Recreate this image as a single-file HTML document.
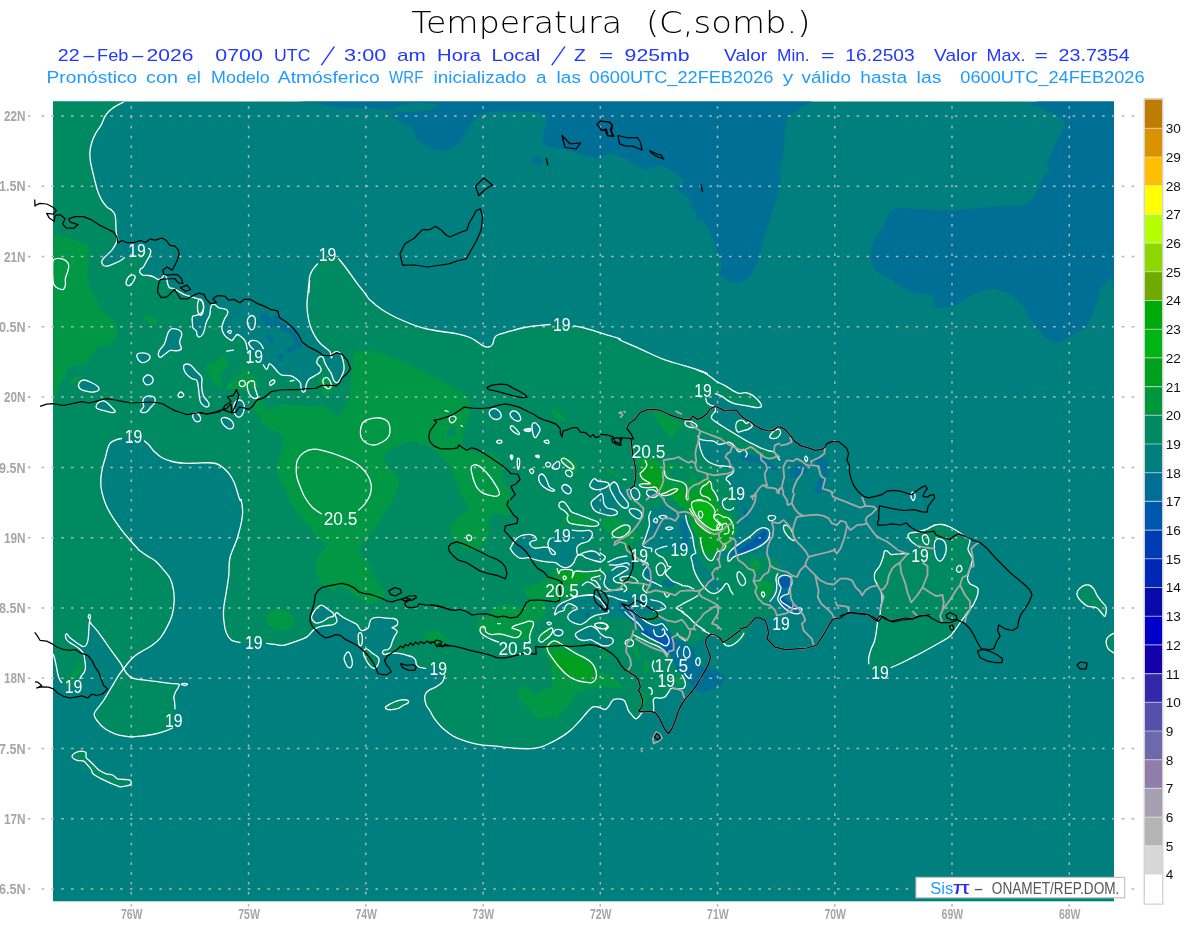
<!DOCTYPE html>
<html lang="es"><head><meta charset="utf-8"><title>Temperatura (C,somb.)</title>
<style>html,body{margin:0;padding:0;background:#fff;overflow:hidden}svg{display:block;will-change:transform}text{font-family:"Liberation Sans","DejaVu Sans",sans-serif}.ttl{font-family:"DejaVu Sans","Liberation Sans",sans-serif;font-weight:200}.ax{fill:#a6a6a6;font-size:14.2px;font-weight:bold}.cb{fill:#111;font-size:13.6px}.cl{fill:#fff;font-size:17.8px}</style></head><body>
<svg width="1200" height="927" viewBox="0 0 1200 927">
<rect width="1200" height="927" fill="#fff"/>
<text font-size="30.5" fill="#000" class="ttl"><tspan x="411.30" y="33.2" textLength="210.80" lengthAdjust="spacingAndGlyphs">Temperatura</tspan> <tspan x="645.90" y="33.2" textLength="164.50" lengthAdjust="spacingAndGlyphs">(C,somb.)</tspan></text>
<text font-size="17.0" fill="#2138ff"><tspan x="57.85" y="60.6" textLength="21.80" lengthAdjust="spacingAndGlyphs">22</tspan><tspan x="81.60" y="60.6" textLength="14.80" lengthAdjust="spacingAndGlyphs">-</tspan><tspan x="97.10" y="60.6" textLength="31.30" lengthAdjust="spacingAndGlyphs">Feb</tspan><tspan x="130.35" y="60.6" textLength="15.05" lengthAdjust="spacingAndGlyphs">-</tspan><tspan x="146.60" y="60.6" textLength="46.80" lengthAdjust="spacingAndGlyphs">2026</tspan> <tspan x="215.35" y="60.6" textLength="47.55" lengthAdjust="spacingAndGlyphs">0700</tspan> <tspan x="274.10" y="60.6" textLength="36.30" lengthAdjust="spacingAndGlyphs">UTC</tspan> <tspan class="ttl" x="321.00" y="62.5" font-size="26.5" rotate="18">/</tspan> <tspan x="344.10" y="60.6" textLength="42.30" lengthAdjust="spacingAndGlyphs">3:00</tspan> <tspan x="397.10" y="60.6" textLength="28.80" lengthAdjust="spacingAndGlyphs">am</tspan> <tspan x="437.10" y="60.6" textLength="43.80" lengthAdjust="spacingAndGlyphs">Hora</tspan> <tspan x="491.60" y="60.6" textLength="48.80" lengthAdjust="spacingAndGlyphs">Local</tspan> <tspan class="ttl" x="551.50" y="62.5" font-size="26.5" rotate="18">/</tspan> <tspan x="574.10" y="60.6" textLength="11.80" lengthAdjust="spacingAndGlyphs">Z</tspan> <tspan x="599.10" y="60.6" textLength="14.30" lengthAdjust="spacingAndGlyphs">=</tspan> <tspan x="624.60" y="60.6" textLength="65.05" lengthAdjust="spacingAndGlyphs">925mb</tspan> <tspan x="724.10" y="60.6" textLength="43.05" lengthAdjust="spacingAndGlyphs">Valor</tspan> <tspan x="777.10" y="60.6" textLength="32.55" lengthAdjust="spacingAndGlyphs">Min.</tspan> <tspan x="821.10" y="60.6" textLength="13.55" lengthAdjust="spacingAndGlyphs">=</tspan> <tspan x="845.35" y="60.6" textLength="69.30" lengthAdjust="spacingAndGlyphs">16.2503</tspan> <tspan x="934.10" y="60.6" textLength="43.05" lengthAdjust="spacingAndGlyphs">Valor</tspan> <tspan x="986.60" y="60.6" textLength="38.80" lengthAdjust="spacingAndGlyphs">Max.</tspan> <tspan x="1034.60" y="60.6" textLength="13.30" lengthAdjust="spacingAndGlyphs">=</tspan> <tspan x="1058.60" y="60.6" textLength="71.05" lengthAdjust="spacingAndGlyphs">23.7354</tspan></text>
<text font-size="16.8" fill="#1e9bff"><tspan x="46.60" y="82.5" textLength="90.55" lengthAdjust="spacingAndGlyphs">Pronóstico</tspan> <tspan x="146.10" y="82.5" textLength="31.80" lengthAdjust="spacingAndGlyphs">con</tspan> <tspan x="186.60" y="82.5" textLength="14.30" lengthAdjust="spacingAndGlyphs">el</tspan> <tspan x="211.10" y="82.5" textLength="58.55" lengthAdjust="spacingAndGlyphs">Modelo</tspan> <tspan x="277.85" y="82.5" textLength="101.80" lengthAdjust="spacingAndGlyphs">Atmósferico</tspan> <tspan x="389.10" y="82.5" textLength="34.30" lengthAdjust="spacingAndGlyphs">WRF</tspan> <tspan x="433.60" y="82.5" textLength="92.80" lengthAdjust="spacingAndGlyphs">inicializado</tspan> <tspan x="536.10" y="82.5" textLength="10.55" lengthAdjust="spacingAndGlyphs">a</tspan> <tspan x="556.60" y="82.5" textLength="24.30" lengthAdjust="spacingAndGlyphs">las</tspan> <tspan x="589.60" y="82.5" textLength="183.80" lengthAdjust="spacingAndGlyphs">0600UTC_22FEB2026</tspan> <tspan x="782.85" y="82.5" textLength="10.55" lengthAdjust="spacingAndGlyphs">y</tspan> <tspan x="801.60" y="82.5" textLength="49.30" lengthAdjust="spacingAndGlyphs">válido</tspan> <tspan x="860.35" y="82.5" textLength="46.80" lengthAdjust="spacingAndGlyphs">hasta</tspan> <tspan x="916.60" y="82.5" textLength="24.80" lengthAdjust="spacingAndGlyphs">las</tspan> <tspan x="960.35" y="82.5" textLength="184.30" lengthAdjust="spacingAndGlyphs">0600UTC_24FEB2026</tspan></text>
<defs><clipPath id="pc"><rect x="53.0" y="101.5" width="1061.0" height="799.8"/></clipPath>
<clipPath id="pc2"><rect x="33" y="101.5" width="1081.0" height="799.8"/></clipPath></defs>
<rect x="53.0" y="101.5" width="1061.0" height="799.8" fill="#007f7f"/>
<g clip-path="url(#pc)">
<path d="M643.5,545.2C645.7,542.4 652.7,544.6 655.2,546.8C657.7,549.1 657.1,555.2 658.5,558.5C659.9,561.9 661.9,564.4 663.5,566.9C665.2,569.4 666.6,571.3 668.6,573.6C670.5,575.8 672.7,578.3 675.3,580.3C677.8,582.2 680.5,583.9 683.6,585.3C686.7,586.7 691.1,587.2 693.6,588.6C696.2,590.0 700.3,591.1 698.7,593.6C697.0,596.2 687.5,601.2 683.6,603.7C679.7,606.2 678.0,608.7 675.3,608.7C672.5,608.7 669.7,605.1 666.9,603.7C664.1,602.3 661.3,602.0 658.5,600.3C655.7,598.7 652.1,596.4 650.2,593.6C648.2,590.9 647.9,586.7 646.8,583.6C645.7,580.5 644.3,578.6 643.5,575.3C642.6,571.9 641.8,568.6 641.8,563.5C641.8,558.5 641.2,547.9 643.5,545.2Z" fill="#008a62"/>
<path d="M641.8,510.0C643.2,507.8 646.5,507.5 650.2,506.7C653.8,505.9 659.4,504.5 663.5,505.0C667.7,505.6 671.9,508.1 675.3,510.0C678.6,512.0 681.4,513.4 683.6,516.7C685.8,520.1 687.2,525.1 688.6,530.1C690.0,535.1 691.1,542.6 692.0,546.8C692.8,551.0 694.2,553.8 693.6,555.2C693.1,556.6 691.7,556.0 688.6,555.2C685.6,554.3 678.9,551.6 675.3,550.2C671.6,548.8 670.2,547.4 666.9,546.8C663.5,546.3 658.5,547.1 655.2,546.8C651.8,546.5 648.8,547.4 646.8,545.2C644.9,542.9 644.3,537.6 643.5,533.4C642.6,529.3 642.1,524.0 641.8,520.1C641.5,516.2 640.4,512.3 641.8,510.0Z" fill="#008a62"/>
<path d="M690.3,556.9C690.0,558.0 692.5,563.8 693.6,566.9C694.8,570.0 695.6,572.5 697.0,575.3C698.4,578.0 700.3,581.1 702.0,583.6C703.7,586.1 705.4,588.6 707.0,590.3C708.7,592.0 710.4,593.4 712.0,593.6C713.7,593.9 715.4,593.1 717.1,592.0C718.7,590.9 722.1,588.9 722.1,587.0C722.1,585.0 718.5,581.9 717.1,580.3C715.7,578.6 715.4,578.3 713.7,576.9C712.0,575.5 709.3,573.6 707.0,571.9C704.8,570.2 702.3,568.8 700.3,566.9C698.4,564.9 697.0,561.9 695.3,560.2C693.6,558.5 690.6,555.7 690.3,556.9Z" fill="#008a62"/>
<path d="M40.0,90.0L123.6,90.0L123.6,102.0L117.0,105.4L110.3,110.1L105.3,115.9L101.1,125.1L95.2,134.3L91.5,143.5L89.9,152.7L90.5,161.9L92.7,171.9L95.2,182.0L97.7,191.2L101.9,200.4L106.9,207.0L111.9,210.4L114.9,214.6L115.8,222.1L116.1,230.5L117.0,237.1L117.0,242.2L117.7,238.4L116.1,243.4L111.9,250.1L106.9,255.1L102.7,259.3L101.8,262.6L103.5,265.5L107.7,266.0L115.2,263.1L121.9,259.8L124.4,257.6L148.7,248.4L150.8,250.9L149.5,255.9L146.2,261.8L143.3,267.1L140.3,269.3L140.0,272.6L142.8,275.2L148.7,275.5L153.7,276.8L157.9,279.3L161.2,278.5L164.5,275.2L166.6,277.7L167.6,283.5L169.6,287.7L173.7,288.5L178.8,291.5L183.8,294.4L190.5,296.6L197.2,298.6L202.2,301.1L203.5,305.3L203.0,310.3L200.5,313.6L196.3,315.3L193.0,316.1L192.1,318.6L192.5,323.6L193.0,327.8L196.3,331.2L197.2,335.4L199.7,337.0L203.0,333.7L204.7,328.7L206.4,322.0L209.7,315.3L210.5,308.6L211.9,304.7L214.7,304.7L218.9,307.8L223.9,308.6L227.3,310.3L227.6,313.6L224.7,318.6L222.2,325.3L222.2,330.3L224.7,335.4L229.8,339.5L232.3,340.4L234.8,337.0L237.3,334.5L240.6,336.2L244.8,340.4L246.5,345.4L247.3,349.6L263.2,364.9L266.9,369.5L269.4,363.6L273.6,367.0L277.8,372.0L281.9,375.0L290.3,375.7L296.2,378.7L300.3,382.8L301.2,388.7L302.8,392.0L305.4,390.4L306.2,384.5L308.7,379.5L315.4,375.3L319.6,372.8L321.2,369.5L319.6,366.1L317.1,363.6L317.1,360.3L319.6,356.9L322.9,357.3L324.6,361.9L327.1,367.0L331.3,373.6L333.8,380.3L337.1,382.8L339.6,380.3L342.1,375.3L344.1,368.6L343.0,360.3L340.5,353.6L336.3,351.6L332.9,353.6L331.3,357.8L330.1,351.9L325.4,347.7L320.4,343.5L315.4,336.9L311.2,328.5L308.4,318.5L307.0,306.8L307.9,293.4L309.5,280.0L308.8,292.5L309.5,277.5L312.5,270.0L317.5,263.8L322.0,258.0L332.0,254.0L338.8,258.8L347.5,270.0L357.5,283.8L366.2,295.0L370.0,300.0L382.5,310.0L395.0,317.0L407.5,322.5L420.0,327.0L432.5,330.0L445.0,332.0L457.5,333.8L470.0,337.5L477.5,342.0L483.8,346.2L488.8,347.0L492.5,344.5L494.2,338.8L497.5,335.0L510.0,331.2L522.5,328.0L532.5,326.2L550.0,324.5L573.8,325.8L585.0,328.2L595.0,331.2L607.5,335.0L620.0,338.8L620.0,340.0L640.0,348.8L660.0,358.0L675.0,363.0L695.0,368.8L707.5,373.8L697.0,370.0L703.7,372.5L710.4,376.7L717.1,381.7L725.4,385.9L732.1,390.1L738.8,393.4L745.5,392.6L752.2,395.1L757.2,399.3L760.5,403.4L761.4,406.5L757.2,407.6L750.5,406.5L742.1,405.1L733.8,403.4L727.1,400.1L721.2,395.9L715.4,393.7L705.7,398.4L707.0,402.6L710.4,405.1L714.5,406.8L715.4,411.0L712.0,415.2L711.7,418.5L715.4,421.8L722.1,426.0L728.8,430.2L737.1,435.2L745.5,440.2L753.8,444.4L760.5,447.8L767.2,450.3L773.9,451.9L775.6,453.6L777.3,457.0L779.8,460.0L745.5,457.0L747.2,453.6L743.8,449.4L739.6,451.9L737.1,450.3L733.8,445.3L728.8,442.2L723.7,443.6L718.7,444.4L713.7,441.1L707.0,440.6L700.3,439.4L697.8,436.1L698.7,440.2L700.3,448.6L703.7,457.0L708.7,462.0L717.1,465.3L725.4,466.2L731.3,467.0L733.8,470.3L732.1,473.7L727.1,477.0L726.3,479.5L728.8,482.0L730.4,484.5L736.0,494.0L735.0,500.0L736.0,520.0L738.0,530.0L733.0,535.0L725.0,545.0L718.0,555.0L716.0,559.0L728.0,557.0L740.0,557.0L757.0,555.0L774.0,558.0L782.0,566.0L781.0,575.0L777.0,587.0L774.0,595.0L769.0,600.0L767.0,604.0L774.0,609.0L777.0,615.0L767.0,617.0L760.0,616.0L755.0,618.0L750.0,628.0L745.0,637.0L740.0,644.0L733.0,645.0L727.0,645.0L722.0,642.0L712.0,634.0L700.0,640.0L690.0,648.0L680.0,655.0L677.0,665.0L682.0,675.0L682.1,675.2L684.6,680.2L685.4,685.2L682.9,688.5L677.1,688.9L671.2,688.5L668.7,691.9L665.4,696.6L660.3,698.2L655.3,697.7L653.3,700.2L653.6,705.3L653.6,711.1L643.6,711.9L641.1,713.6L638.6,717.0L635.3,718.6L630.0,712.8L628.2,710.3L626.5,705.3L624.0,700.2L619.0,698.9L613.9,699.4L611.4,701.9L608.9,706.1L605.6,709.4L602.2,708.6L597.2,706.9L593.0,706.9L588.9,710.3L583.8,716.1L577.2,723.6L570.5,730.3L563.8,735.4L555.4,740.4L547.1,744.5L540.4,747.1L533.7,748.4L523.6,748.7L513.6,748.2L503.6,747.1L493.5,745.9L483.5,745.1L473.5,743.4L463.4,740.4L453.4,736.2L445.1,730.3L438.4,723.6L433.3,717.0L429.8,710.5L426.4,705.5L424.7,698.8L425.6,693.8L428.9,690.4L435.6,687.1L442.3,682.1L444.8,675.4L437.0,668.0L425.6,668.4L418.9,667.0L416.4,664.5L415.6,660.3L413.0,657.3L407.2,655.3L400.5,653.6L393.8,652.8L388.8,653.3L384.6,654.5L382.4,652.8L383.8,650.3L388.0,649.5L390.5,647.0L392.1,641.9L394.6,636.1L397.2,631.9L395.5,629.4L392.1,627.7L394.6,626.6L397.5,624.4L397.2,620.5L393.8,618.5L387.1,618.2L380.4,617.4L374.6,617.7L371.2,619.4L369.6,622.7L368.7,626.9L366.2,629.4L362.0,630.6L359.5,628.6L357.0,624.4L352.0,621.9L345.3,618.5L340.3,615.2L337.0,612.7L335.3,615.2L337.0,620.2L335.3,623.5L331.9,624.9L325.3,625.7L318.6,627.2L314.4,629.4L311.0,632.7L306.9,636.9L300.2,639.9L291.8,642.8L283.4,645.3L275.1,644.4L266.7,643.3L248.0,643.0L240.0,642.5L231.2,640.0L226.2,632.5L223.8,620.0L223.8,607.5L226.2,592.5L228.8,575.0L230.0,557.5L237.5,537.5L242.5,515.0L241.2,500.0L240.0,500.3L237.3,492.0L234.0,481.9L229.0,473.6L222.3,466.9L215.6,463.5L207.2,462.7L195.5,463.2L183.8,463.2L172.1,461.5L162.1,457.7L154.5,451.8L148.7,444.8L144.5,441.0L133.0,435.0L121.6,438.5L115.3,440.1L110.2,443.1L107.7,448.5L105.6,456.9L102.7,466.9L101.0,476.9L101.0,487.0L103.2,497.0L106.9,507.0L113.6,518.7L121.9,530.4L130.3,540.5L138.7,549.7L138.7,550.0L147.1,555.9L155.4,560.9L163.8,570.1L170.5,579.3L173.5,590.1L174.1,601.8L172.1,615.2L167.1,626.9L160.4,637.8L152.1,645.3L143.7,650.3L135.4,655.4L129.5,661.2L123.6,668.7L120.3,662.9L113.6,653.7L105.3,642.0L96.9,630.3L90.2,622.7L89.9,619.4L88.9,628.6L88.2,638.6L86.5,644.5L83.5,646.7L79.3,644.5L74.3,641.1L70.1,637.8L66.8,633.9L65.5,635.3L66.5,639.5L69.3,642.3L74.3,645.3L80.2,649.5L83.5,653.7L84.8,660.4L85.5,667.1L84.3,672.1L81.8,675.4L79.8,678.8L70.0,690.0L61.8,682.6L60.1,680.4L58.1,675.4L56.8,668.7L55.1,660.4L53.4,654.5L40.0,650.0Z" fill="#008a62"/>
<path d="M353.8,353.8C354.9,352.4 356.9,350.9 360.0,350.5C363.1,350.1 367.5,350.3 372.5,351.2C377.5,352.2 383.8,354.0 390.0,356.2C396.2,358.5 403.3,361.9 410.0,365.0C416.7,368.1 424.2,372.1 430.0,375.0C435.8,377.9 440.4,380.0 445.0,382.5C449.6,385.0 454.0,387.7 457.5,390.0C461.0,392.3 464.3,393.4 466.2,396.2C468.2,399.1 468.9,403.4 469.3,406.8C469.7,410.2 469.2,413.5 468.5,416.8C467.8,420.1 466.0,423.5 465.0,426.9C464.0,430.2 463.1,434.1 462.6,436.9C462.1,439.7 461.1,441.7 461.8,443.6C462.5,445.6 464.6,447.2 466.8,448.6C469.0,450.0 472.2,451.2 475.0,452.0C477.8,452.8 481.0,453.2 483.5,453.6C486.0,454.0 487.8,453.8 490.0,454.4C492.2,455.0 495.3,455.9 497.0,457.0C498.7,458.1 498.9,459.3 500.0,461.0C501.1,462.7 503.3,464.9 503.6,467.0C503.9,469.1 502.3,471.5 502.0,473.7C501.7,475.9 501.2,478.2 502.0,480.4C502.8,482.6 505.6,484.8 507.0,487.0C508.4,489.2 510.0,491.2 510.3,493.7C510.6,496.2 508.6,499.5 508.6,502.0C508.6,504.5 510.3,506.6 510.3,508.8C510.3,511.1 510.3,514.7 508.6,515.5C506.9,516.3 502.8,513.8 500.0,513.8C497.2,513.8 493.9,514.4 492.0,515.5C490.1,516.6 489.2,518.4 488.6,520.5C488.0,522.6 488.8,525.4 488.5,528.4C488.2,531.4 488.0,535.4 486.9,538.5C485.8,541.6 484.0,544.9 481.8,546.8C479.6,548.7 476.6,549.9 473.5,550.0C470.4,550.1 466.5,549.4 463.4,547.7C460.3,546.0 457.1,542.4 455.0,540.0C452.9,537.6 451.4,535.6 450.9,533.4C450.3,531.2 450.2,528.2 451.7,526.8C453.2,525.4 457.4,526.5 460.0,525.0C462.6,523.5 465.8,520.4 467.5,517.5C469.2,514.6 470.8,510.8 470.0,507.5C469.2,504.2 464.6,501.2 462.5,497.5C460.4,493.8 459.2,489.2 457.5,485.0C455.8,480.8 454.6,476.7 452.5,472.5C450.4,468.3 447.9,463.8 445.0,460.0C442.1,456.2 438.8,452.7 435.0,450.0C431.2,447.3 426.7,445.1 422.5,443.8C418.3,442.4 414.6,441.6 410.0,442.0C405.4,442.4 399.2,444.1 395.0,446.2C390.8,448.4 386.9,452.7 385.0,455.0C383.1,457.3 382.9,457.9 383.8,460.0C384.6,462.1 387.9,465.0 390.0,467.5C392.1,470.0 394.8,472.1 396.2,475.0C397.7,477.9 399.0,481.7 398.8,485.0C398.5,488.3 396.5,491.7 395.0,495.0C393.5,498.3 391.7,502.1 390.0,505.0C388.3,507.9 387.1,509.2 385.0,512.5C382.9,515.8 380.4,520.8 377.5,525.0C374.6,529.2 370.4,533.8 367.5,537.5C364.6,541.2 361.1,544.6 360.0,547.5C358.9,550.4 359.8,552.5 361.0,555.0C362.2,557.5 365.6,559.6 367.5,562.5C369.4,565.4 370.8,569.2 372.5,572.5C374.2,575.8 375.8,579.6 377.5,582.5C379.2,585.4 381.2,587.9 382.5,590.0C383.8,592.1 385.2,593.5 385.0,595.0C384.8,596.5 382.7,597.5 381.0,598.8C379.3,600.0 377.2,601.7 375.0,602.5C372.8,603.3 369.6,604.2 367.5,603.8C365.4,603.3 364.6,601.3 362.5,600.0C360.4,598.7 357.5,597.5 355.0,596.0C352.5,594.5 350.0,592.7 347.5,591.0C345.0,589.3 342.5,586.2 340.0,586.0C337.5,585.8 335.4,590.4 332.5,590.0C329.6,589.6 325.0,586.2 322.5,583.8C320.0,581.2 318.6,578.5 317.5,575.0C316.4,571.5 315.6,566.0 316.0,562.5C316.4,559.0 318.3,556.5 320.0,553.8C321.7,551.0 326.4,548.7 326.0,546.0C325.6,543.3 320.6,541.0 317.5,537.5C314.4,534.0 310.8,529.2 307.5,525.0C304.2,520.8 300.4,516.3 297.5,512.5C294.6,508.7 291.7,505.3 290.0,502.0C288.3,498.7 289.2,496.2 287.5,492.5C285.8,488.8 281.9,484.2 280.0,480.0C278.1,475.8 276.2,471.7 276.2,467.5C276.2,463.3 278.8,459.2 280.0,455.0C281.2,450.8 283.8,446.0 283.8,442.5C283.8,439.0 282.3,436.2 280.0,434.0C277.7,431.8 272.8,430.7 270.0,429.0C267.2,427.3 265.0,426.3 263.0,424.0C261.0,421.7 259.5,417.5 258.0,415.0C256.5,412.5 254.2,411.3 254.0,409.0C253.8,406.7 255.5,402.5 257.0,401.0C258.5,399.5 261.9,398.8 263.0,400.0C264.1,401.2 262.3,406.5 263.5,408.0C264.7,409.5 267.2,409.5 270.0,409.0C272.8,408.5 276.0,405.6 280.0,405.0C284.0,404.4 289.2,405.3 294.0,405.5C298.8,405.7 304.0,405.8 309.0,406.0C314.0,406.2 320.2,406.0 324.0,407.0C327.8,408.0 329.8,410.6 332.0,412.0C334.2,413.4 335.3,415.5 337.0,415.5C338.7,415.5 340.3,413.8 342.0,412.0C343.7,410.2 345.8,407.5 347.0,405.0C348.2,402.5 348.4,401.2 349.0,397.0C349.6,392.8 350.0,384.5 350.5,380.0C351.0,375.5 351.6,373.6 352.0,370.0C352.4,366.4 352.7,361.3 353.0,358.6C353.3,355.9 352.6,355.1 353.8,353.8Z" fill="#009844"/>
<path d="M172.9,328.7C174.6,328.7 178.1,329.4 179.6,330.3C181.1,331.3 181.8,332.6 181.8,334.5C181.8,336.5 179.7,339.7 179.6,342.0C179.5,344.4 181.7,347.3 181.3,348.7C180.9,350.2 178.9,350.5 177.1,350.7C175.3,351.0 172.4,349.9 170.4,350.4C168.5,350.9 167.1,352.6 165.4,353.7C163.7,354.9 161.5,357.3 160.4,357.4C159.2,357.6 158.5,355.8 158.4,354.6C158.2,353.4 158.5,352.2 159.5,350.4C160.6,348.6 163.3,346.2 164.5,343.7C165.8,341.2 166.2,337.6 167.1,335.4C167.9,333.1 168.6,331.4 169.6,330.3C170.5,329.2 171.2,328.7 172.9,328.7Z" fill="#007f7f"/>
<path d="M137.0,354.6C137.7,353.5 140.9,352.9 142.8,352.9C144.8,352.9 147.5,353.7 148.7,354.6C149.9,355.4 150.3,356.8 150.0,357.9C149.7,359.0 148.3,360.5 147.0,361.3C145.7,362.1 143.4,362.9 142.0,362.6C140.5,362.3 139.1,360.9 138.3,359.6C137.5,358.3 136.2,355.7 137.0,354.6Z" fill="#007f7f"/>
<path d="M184.6,364.6C185.7,364.0 188.7,364.1 190.5,365.1C192.3,366.1 193.8,368.7 195.5,370.5C197.2,372.2 199.4,374.1 200.5,375.5C201.6,376.9 201.8,376.7 202.0,378.7C202.2,380.6 201.4,384.2 201.7,387.0C201.9,389.8 202.4,393.0 203.3,395.4C204.3,397.8 206.5,399.7 207.5,401.2C208.5,402.8 209.3,403.6 209.2,404.6C209.1,405.6 207.8,407.1 206.7,407.1C205.6,407.1 203.6,405.7 202.5,404.6C201.4,403.5 200.9,404.3 200.0,400.4C199.1,396.5 198.5,384.9 197.2,381.3C195.8,377.7 194.0,380.1 192.1,378.8C190.3,377.6 187.7,375.5 186.3,373.8C184.9,372.1 184.1,370.3 183.8,368.8C183.5,367.3 183.5,365.2 184.6,364.6Z" fill="#007f7f"/>
<path d="M234.3,403.7C234.9,402.4 236.4,400.9 237.6,400.4C238.9,399.9 240.7,399.9 241.8,400.7C242.9,401.6 244.0,403.5 244.3,405.4C244.6,407.3 244.0,410.3 243.5,412.1C242.9,413.9 241.9,415.5 241.0,416.3C240.0,417.1 238.7,417.2 237.6,416.8C236.6,416.4 235.4,415.1 234.8,413.8C234.2,412.4 234.0,410.4 233.9,408.8C233.9,407.1 233.7,405.1 234.3,403.7Z" fill="#007f7f"/>
<path d="M221.4,418.8C222.0,418.0 223.6,417.3 225.1,417.5C226.5,417.6 228.7,418.6 230.1,419.6C231.5,420.7 233.0,422.4 233.4,423.8C233.9,425.2 233.4,427.2 232.6,428.0C231.8,428.8 229.8,428.9 228.4,428.5C227.0,428.1 225.4,426.5 224.2,425.5C223.1,424.4 222.2,423.3 221.7,422.1C221.3,421.0 220.8,419.6 221.4,418.8Z" fill="#007f7f"/>
<path d="M207.5,365.3C208.8,363.6 212.8,363.3 215.1,361.9C217.3,360.6 219.0,357.8 220.9,357.3C222.9,356.7 225.6,357.3 226.8,358.6C227.9,359.9 228.4,363.2 227.6,365.3C226.8,367.4 223.0,369.2 221.7,371.1C220.5,373.1 219.9,374.9 220.1,377.0C220.2,379.1 222.6,382.0 222.6,383.7C222.6,385.4 221.3,386.7 220.1,387.0C218.8,387.3 216.4,386.7 215.1,385.4C213.7,384.0 213.0,380.9 211.7,378.7C210.5,376.4 208.2,374.2 207.5,372.0C206.8,369.7 206.3,367.0 207.5,365.3Z" fill="#009844"/>
<path d="M233.4,378.7C235.7,376.4 238.4,377.3 240.1,375.3C241.9,373.4 243.7,368.9 243.8,367.0C244.0,365.0 240.5,363.1 241.0,363.6C241.5,364.2 245.3,368.4 246.8,370.3C248.4,372.3 248.8,374.2 250.2,375.3C251.6,376.4 253.8,375.0 255.2,377.0C256.6,378.9 259.4,385.1 258.5,387.0C257.7,389.0 252.4,388.1 250.2,388.7C247.9,389.3 247.9,390.4 245.2,390.4C242.4,390.4 236.5,389.0 233.4,388.7C230.4,388.4 226.8,390.4 226.8,388.7C226.8,387.0 231.2,380.9 233.4,378.7Z" fill="#009844"/>
<path d="M318.7,380.3C319.0,378.5 321.5,377.3 323.7,377.8C326.0,378.4 330.7,381.6 332.1,383.7C333.5,385.8 333.5,388.1 332.1,390.4C330.7,392.6 325.4,397.3 323.7,397.1C322.1,396.8 322.9,391.5 322.1,388.7C321.2,385.9 318.5,382.1 318.7,380.3Z" fill="#009844"/>
<path d="M266.7,616.9C267.6,615.0 269.5,612.3 271.7,611.0C274.0,609.7 277.3,609.1 280.1,609.3C282.9,609.6 286.2,611.1 288.5,612.7C290.7,614.2 292.8,616.4 293.5,618.5C294.2,620.6 293.8,623.4 292.6,625.2C291.5,627.0 289.2,628.6 286.8,629.4C284.4,630.2 281.1,630.7 278.4,630.2C275.8,629.8 272.9,628.3 270.9,626.9C269.0,625.5 267.4,623.5 266.7,621.9C266.0,620.2 265.9,618.7 266.7,616.9Z" fill="#009844"/>
<path d="M423.9,635.3C424.5,633.7 428.7,631.9 430.6,631.1C432.6,630.2 433.7,629.5 435.6,630.2C437.6,630.9 440.6,633.6 442.3,635.3C444.0,636.9 445.9,638.9 445.7,640.3C445.4,641.7 442.9,642.8 440.6,643.6C438.4,644.4 434.5,645.8 432.3,645.3C430.0,644.7 428.7,641.9 427.3,640.3C425.9,638.6 423.4,636.8 423.9,635.3Z" fill="#009844"/>
<path d="M123.6,668.7C122.8,669.8 120.3,672.9 118.6,675.4C117.0,677.9 115.3,681.0 113.6,683.8C111.9,686.6 110.3,689.4 108.6,692.1C106.9,694.9 105.0,698.4 103.6,700.5C102.2,702.6 101.8,702.8 100.2,705.0C98.7,707.2 94.7,711.0 94.2,713.8C93.8,716.5 95.7,718.8 97.5,721.2C99.3,723.8 102.1,726.7 105.0,728.8C107.9,730.8 111.7,732.5 115.0,733.8C118.3,735.0 122.3,735.7 125.0,736.2C127.7,736.8 128.8,737.0 131.2,737.0C133.8,737.0 136.5,736.7 140.0,736.2C143.5,735.8 148.3,735.3 152.5,734.5C156.7,733.7 161.7,732.3 165.0,731.2C168.3,730.2 171.0,729.5 172.5,728.0C174.0,726.5 173.4,725.2 173.8,722.0C174.2,718.8 174.9,712.1 175.0,708.8C175.1,705.4 174.8,704.1 174.6,702.2C174.5,700.2 173.7,698.8 173.8,697.2C174.0,695.5 174.8,693.7 175.5,692.1C176.2,690.6 177.4,689.2 178.0,688.0C178.6,686.7 179.5,685.3 179.3,684.6C179.2,683.9 178.6,684.0 177.2,683.8C175.7,683.6 173.3,683.6 170.5,683.3C167.7,683.0 163.8,682.5 160.4,682.1C157.1,681.7 153.7,681.2 150.4,680.8C147.1,680.4 143.4,680.1 140.4,679.6C137.3,679.1 134.2,678.9 132.0,677.9C129.8,677.0 128.4,675.3 127.0,673.7C125.6,672.2 124.2,669.6 123.6,668.7C123.1,667.9 124.5,667.6 123.6,668.7Z" fill="#008a62"/>
<path d="M72.0,756.2C72.2,755.3 73.5,753.8 75.0,753.0C76.5,752.2 79.5,751.3 81.2,751.2C83.0,751.2 84.9,751.5 85.8,752.5C86.6,753.5 85.5,756.0 86.2,757.5C87.0,759.0 88.8,760.0 90.0,761.2C91.2,762.5 92.3,763.5 93.8,765.0C95.2,766.5 96.7,768.5 98.8,770.0C100.8,771.5 104.0,772.9 106.2,773.8C108.5,774.6 110.6,774.2 112.5,775.0C114.4,775.8 115.4,778.0 117.5,778.8C119.6,779.5 122.8,779.2 125.0,779.5C127.2,779.8 129.6,779.7 130.5,780.5C131.4,781.3 131.4,783.5 130.5,784.5C129.6,785.5 126.8,785.9 125.0,786.2C123.2,786.6 121.9,787.0 120.0,786.8C118.1,786.5 116.0,785.4 113.8,784.5C111.5,783.6 108.8,782.4 106.2,781.2C103.8,780.1 101.0,778.8 98.8,777.5C96.5,776.2 94.2,775.1 93.0,773.8C91.8,772.4 92.2,771.0 91.2,769.5C90.3,768.0 88.8,766.4 87.5,765.0C86.2,763.6 85.4,762.0 83.8,761.2C82.1,760.5 79.2,760.9 77.5,760.5C75.8,760.1 74.7,759.5 73.8,758.8C72.8,758.0 71.8,757.2 72.0,756.2Z" fill="#008a62"/>
<path d="M96.0,406.7C96.0,405.6 97.3,403.5 98.5,402.5C99.8,401.5 102.0,400.7 103.5,400.8C105.1,401.0 106.3,402.2 107.7,403.3C109.1,404.5 110.7,406.2 111.9,407.5C113.2,408.9 115.3,410.5 115.3,411.4C115.3,412.2 113.6,412.6 111.9,412.5C110.2,412.5 107.4,411.4 105.2,410.9C103.0,410.3 100.1,409.9 98.5,409.2C97.0,408.5 96.0,407.8 96.0,406.7Z" fill="#007f7f"/>
<path d="M140.3,410.9C140.5,409.9 143.3,408.2 143.7,406.7C144.1,405.2 142.7,403.2 142.8,401.7C143.0,400.1 143.4,398.5 144.5,397.5C145.6,396.5 147.9,395.8 149.5,395.8C151.2,395.8 153.6,396.5 154.5,397.5C155.5,398.5 155.2,400.6 155.1,401.7C154.9,402.8 154.5,403.2 153.7,404.2C152.9,405.2 151.5,406.3 150.4,407.5C149.3,408.8 148.3,410.9 147.0,411.7C145.8,412.5 144.0,412.7 142.8,412.5C141.7,412.4 140.2,411.8 140.3,410.9Z" fill="#007f7f"/>
<path d="M193.0,414.2C193.4,413.2 195.2,412.8 196.4,413.0C197.5,413.3 199.0,414.7 199.7,415.9C200.4,417.1 201.0,419.1 200.5,420.1C200.1,421.0 198.3,421.9 197.2,421.7C196.1,421.6 194.5,420.5 193.8,419.2C193.1,418.0 192.6,415.2 193.0,414.2Z" fill="#007f7f"/>
<path d="M78.8,383.8C79.4,382.3 81.7,380.2 83.8,380.0C85.8,379.8 89.0,381.5 91.2,382.5C93.5,383.5 96.2,385.0 97.5,386.2C98.8,387.5 99.4,389.0 98.8,390.0C98.1,391.0 95.8,391.8 93.8,392.0C91.7,392.2 88.5,391.8 86.2,391.2C84.0,390.7 81.2,390.0 80.0,388.8C78.8,387.5 78.1,385.2 78.8,383.8Z" fill="#007f7f"/>
<path d="M143.2,378.8C143.7,377.3 146.0,375.3 147.5,375.0C149.0,374.7 151.1,376.0 152.0,377.0C152.9,378.0 153.4,380.0 153.0,381.2C152.6,382.5 150.8,384.1 149.5,384.5C148.2,384.9 146.0,384.7 145.0,383.8C144.0,382.8 142.8,380.2 143.2,378.8Z" fill="#007f7f"/>
<path d="M53.0,233.0C53.1,206.0 51.1,233.4 53.3,234.2C55.6,234.9 61.7,236.0 66.7,237.5C71.7,239.1 79.8,241.8 83.4,243.4C87.1,244.9 87.6,244.8 88.5,246.7C89.4,248.7 88.9,250.9 88.8,255.1C88.7,259.3 87.7,267.1 87.6,271.8C87.6,276.5 87.2,279.3 88.5,283.5C89.7,287.7 92.9,292.2 95.2,296.9C97.4,301.6 99.6,308.9 101.8,311.9C104.1,315.0 106.3,313.3 108.5,315.3C110.8,317.2 113.8,320.9 115.2,323.6C116.6,326.4 117.2,329.2 116.9,332.0C116.6,334.8 114.9,338.1 113.5,340.4C112.2,342.6 111.0,344.3 108.5,345.4C106.0,346.5 101.6,345.1 98.5,347.1C95.4,349.0 92.1,354.3 90.1,357.1C88.2,359.9 89.9,362.4 86.8,363.8C83.7,365.2 75.2,363.8 71.7,365.5C68.3,367.1 67.7,371.1 65.9,373.8C64.1,376.6 62.5,379.3 61.0,382.0C59.5,384.7 58.3,387.7 57.0,390.0C55.7,392.3 53.7,422.2 53.0,396.0C52.3,369.8 52.9,260.0 53.0,233.0Z" fill="#009844"/>
<path d="M70.0,382.5C70.4,381.3 73.1,378.5 75.0,377.5C76.9,376.5 80.8,375.6 81.2,376.2C81.7,376.9 79.0,379.9 77.5,381.2C76.0,382.6 73.8,384.3 72.5,384.5C71.2,384.7 69.6,383.7 70.0,382.5Z" fill="#009844"/>
<path d="M143.8,315.0C144.6,314.4 147.7,315.4 150.0,316.2C152.3,317.1 156.7,318.5 157.5,320.0C158.3,321.5 156.2,324.4 155.0,325.0C153.8,325.6 151.7,324.6 150.0,323.8C148.3,322.9 146.0,321.5 145.0,320.0C144.0,318.5 142.9,315.6 143.8,315.0Z" fill="#009844"/>
<path d="M551.3,410.1C551.7,409.3 553.6,408.5 555.5,409.3C557.3,410.1 560.5,413.5 562.1,415.2C563.8,416.8 565.5,418.2 565.5,419.3C565.5,420.4 563.8,421.8 562.1,421.8C560.5,421.8 557.0,420.6 555.5,419.3C553.9,418.1 553.6,415.8 552.9,414.3C552.2,412.8 550.9,411.0 551.3,410.1Z" fill="#009844"/>
<path d="M558.8,455.3C559.5,455.0 561.3,456.0 563.8,457.0C566.3,457.9 571.5,459.5 573.8,461.1C576.2,462.8 577.7,464.9 578.0,467.0C578.3,469.1 576.8,473.1 575.5,473.7C574.3,474.2 572.5,472.0 570.5,470.3C568.6,468.7 565.6,465.6 563.8,463.6C562.0,461.7 560.5,460.0 559.6,458.6C558.8,457.2 558.1,455.6 558.8,455.3Z" fill="#009844"/>
<path d="M603.9,467.0C603.9,466.4 608.0,468.9 610.6,470.3C613.3,471.7 617.5,474.0 620.0,475.4C622.5,476.7 625.7,478.3 625.7,478.7C625.7,479.1 622.5,478.7 620.0,477.9C617.5,477.0 613.3,475.5 610.6,473.7C608.0,471.9 603.9,467.5 603.9,467.0Z" fill="#009844"/>
<path d="M451.7,526.8C452.7,524.2 454.2,520.9 456.8,518.4C459.3,515.9 464.6,514.2 466.8,511.7C469.0,509.2 469.0,505.9 470.1,503.3C471.2,500.8 467.1,497.8 473.5,496.7C479.9,495.5 503.0,495.0 508.6,496.7C514.2,498.3 508.3,504.2 506.9,506.7C505.5,509.2 502.5,510.6 500.2,511.7C498.0,512.8 495.5,512.3 493.5,513.4C491.6,514.5 489.4,515.9 488.5,518.4C487.7,520.9 488.8,525.1 488.5,528.4C488.2,531.8 488.0,535.4 486.9,538.5C485.7,541.5 484.1,544.9 481.8,546.8C479.6,548.8 476.5,550.0 473.5,550.2C470.4,550.3 466.5,549.3 463.4,547.7C460.4,546.0 457.2,542.5 455.1,540.1C453.0,537.8 451.5,535.7 450.9,533.4C450.3,531.2 450.8,529.3 451.7,526.8Z" fill="#009844"/>
<path d="M523.6,587.0C524.5,585.6 527.8,585.8 530.3,585.3C532.8,584.7 536.2,584.7 538.7,583.6C541.2,582.5 543.2,579.7 545.4,578.6C547.6,577.5 550.1,578.6 552.1,576.9C554.0,575.3 555.1,569.8 557.1,568.6C559.0,567.3 561.0,568.8 563.8,569.4C566.6,570.0 569.9,571.5 573.8,571.9C577.7,572.3 582.2,572.2 587.2,571.9C592.2,571.6 601.4,569.7 603.9,570.2C606.4,570.8 604.2,573.9 602.2,575.3C600.3,576.6 595.8,577.2 592.2,578.6C588.6,580.0 583.0,581.7 580.5,583.6C578.0,585.6 578.3,588.4 577.2,590.3C576.0,592.3 576.0,593.9 573.8,595.3C571.6,596.7 566.0,597.8 563.8,598.7C561.5,599.5 562.1,599.8 560.4,600.3C558.8,600.9 556.0,602.0 553.7,602.0C551.5,602.0 549.6,600.8 547.1,600.3C544.5,599.9 541.5,599.8 538.7,599.5C535.9,599.2 532.6,599.6 530.3,598.7C528.1,597.7 526.4,595.6 525.3,593.6C524.2,591.7 522.8,588.4 523.6,587.0Z" fill="#009844"/>
<path d="M476.8,627.1C476.8,625.1 478.2,622.6 480.2,620.4C482.1,618.2 485.7,615.9 488.5,613.7C491.3,611.5 493.5,608.7 496.9,607.0C500.2,605.4 504.7,603.7 508.6,603.7C512.5,603.7 517.5,607.0 520.3,607.0C523.1,607.0 523.6,604.8 525.3,603.7C527.0,602.6 527.3,600.6 530.3,600.3C533.4,600.1 541.2,600.3 543.7,602.0C546.2,603.7 545.4,607.9 545.4,610.4C545.4,612.9 545.1,615.4 543.7,617.1C542.3,618.7 538.7,618.7 537.0,620.4C535.4,622.1 534.5,624.3 533.7,627.1C532.8,629.9 533.7,634.9 532.0,637.1C530.3,639.4 526.7,640.2 523.6,640.5C520.6,640.7 517.5,639.4 513.6,638.8C509.7,638.2 504.4,637.7 500.2,637.1C496.1,636.6 491.9,636.3 488.5,635.5C485.2,634.6 482.1,633.5 480.2,632.1C478.2,630.7 476.8,629.0 476.8,627.1Z" fill="#009844"/>
<path d="M560.4,526.8C559.9,525.9 562.7,520.6 563.8,518.4C564.9,516.2 564.9,513.7 567.1,513.4C569.4,513.1 573.3,515.6 577.2,516.7C581.1,517.8 586.9,519.0 590.5,520.1C594.2,521.2 597.8,522.3 598.9,523.4C600.0,524.5 599.2,526.2 597.2,526.8C595.3,527.3 591.1,527.0 587.2,526.8C583.3,526.5 577.2,525.6 573.8,525.1C570.5,524.5 569.4,523.1 567.1,523.4C564.9,523.7 561.0,527.6 560.4,526.8Z" fill="#009844"/>
<path d="M600.6,521.7C602.0,519.8 608.7,516.7 612.3,516.7C615.9,516.7 619.4,519.0 622.3,521.7C625.3,524.5 628.7,528.7 630.0,533.4C631.3,538.2 631.3,549.1 630.0,550.2C628.7,551.3 625.0,542.1 622.3,540.1C619.6,538.2 615.9,539.6 613.9,538.5C612.0,537.3 612.3,535.1 610.6,533.4C608.9,531.8 605.6,530.4 603.9,528.4C602.2,526.5 599.2,523.7 600.6,521.7Z" fill="#009844"/>
<path d="M430.0,632.1C431.1,630.2 434.2,629.9 436.7,630.4C439.2,631.0 443.4,633.8 445.1,635.5C446.7,637.1 447.6,639.4 446.7,640.5C445.9,641.6 442.3,641.6 440.0,642.1C437.8,642.7 435.0,643.8 433.3,643.8C431.7,643.8 430.6,644.1 430.0,642.1C429.4,640.2 428.9,634.1 430.0,632.1Z" fill="#009844"/>
<path d="M553.3,650.1C556.1,638.9 565.3,649.2 570.0,650.1C574.8,650.9 577.8,652.6 581.7,655.1C585.6,657.6 589.8,661.5 593.4,665.1C597.1,668.7 600.1,673.8 603.5,676.8C606.8,679.9 610.7,682.1 613.5,683.5C616.3,684.9 619.9,684.3 620.2,685.2C620.5,686.0 618.0,688.2 615.2,688.5C612.4,688.8 607.1,687.1 603.5,686.9C599.9,686.6 596.8,686.3 593.4,686.9C590.1,687.4 586.8,688.8 583.4,690.2C580.1,691.6 576.2,692.7 573.4,695.2C570.6,697.7 568.9,702.2 566.7,705.3C564.5,708.3 562.2,711.7 560.0,713.6C557.8,715.6 554.4,727.5 553.3,717.0C552.2,706.4 550.5,661.2 553.3,650.1Z" fill="#009844"/>
<path d="M543.7,648.4C543.7,645.9 545.4,643.4 547.1,641.7C548.7,640.0 551.2,638.4 553.7,638.4C556.3,638.4 559.0,640.0 562.1,641.7C565.2,643.4 568.5,646.2 572.1,648.4C575.8,650.6 580.2,652.9 583.8,655.1C587.5,657.3 591.4,659.3 593.9,661.8C596.4,664.3 598.1,667.1 598.9,670.1C599.7,673.2 600.0,677.7 598.9,680.2C597.8,682.7 595.3,684.5 592.2,685.2C589.1,685.9 584.1,685.0 580.5,684.3C576.9,683.7 573.5,682.8 570.5,681.0C567.4,679.2 564.9,676.1 562.1,673.5C559.3,670.8 556.3,667.9 553.7,665.1C551.2,662.3 548.7,659.5 547.1,656.8C545.4,654.0 543.7,650.9 543.7,648.4Z" fill="#009844"/>
<path d="M517.0,693.5C517.2,691.7 518.9,688.8 520.3,687.7C521.7,686.6 523.6,686.4 525.3,686.9C527.0,687.3 528.7,688.9 530.3,690.2C532.0,691.5 533.4,694.2 535.4,694.4C537.3,694.5 539.5,692.3 542.0,691.0C544.5,689.8 547.3,688.1 550.4,686.9C553.5,685.6 557.1,684.5 560.4,683.5C563.8,682.5 568.0,680.7 570.5,681.0C573.0,681.3 574.9,683.1 575.5,685.2C576.0,687.3 574.4,691.0 573.8,693.5C573.3,696.1 573.3,698.0 572.1,700.2C571.0,702.5 569.1,705.0 567.1,706.9C565.2,708.9 562.9,710.4 560.4,711.9C557.9,713.5 554.6,715.0 552.1,716.1C549.6,717.2 547.6,718.2 545.4,718.6C543.2,719.0 540.6,719.3 538.7,718.6C536.7,717.9 535.4,716.1 533.7,714.4C532.0,712.8 530.5,710.5 528.7,708.6C526.9,706.6 524.5,704.4 522.8,702.7C521.1,701.1 519.6,700.1 518.6,698.6C517.7,697.0 516.7,695.4 517.0,693.5Z" fill="#009844"/>
<path d="M600.6,653.4C600.8,652.9 605.6,654.1 607.3,655.1C608.9,656.1 610.9,658.7 610.6,659.3C610.3,659.8 607.3,659.4 605.6,658.4C603.9,657.5 600.3,654.0 600.6,653.4Z" fill="#009844"/>
<path d="M602.2,673.5C603.4,673.3 607.8,675.4 610.6,676.8C613.4,678.2 617.0,680.0 619.0,681.8C620.9,683.7 622.6,687.0 622.3,687.7C622.0,688.4 619.5,687.1 617.3,686.0C615.1,684.9 611.2,682.4 608.9,681.0C606.7,679.6 605.0,678.9 603.9,677.7C602.8,676.4 601.1,673.6 602.2,673.5Z" fill="#009844"/>
<path d="M908.8,553.8C906.2,554.2 902.9,553.6 900.0,553.8C897.1,553.9 893.3,554.9 891.2,554.5C889.2,554.1 888.6,551.8 887.5,551.2C886.4,550.7 885.2,550.2 884.5,551.2C883.8,552.3 883.8,555.1 883.0,557.5C882.2,559.9 881.3,563.0 880.0,565.5C878.7,568.0 875.9,570.3 875.0,572.5C874.1,574.7 874.1,576.7 874.5,578.8C874.9,580.8 876.4,582.7 877.5,585.0C878.6,587.3 880.5,590.0 881.2,592.5C882.0,595.0 882.1,597.5 882.0,600.0C881.9,602.5 880.8,605.0 880.5,607.5C880.2,610.0 880.5,612.5 880.0,615.0C879.5,617.5 878.1,619.6 877.5,622.5C876.9,625.4 876.8,629.4 876.2,632.5C875.8,635.6 875.3,638.5 874.5,641.2C873.7,644.0 872.2,646.0 871.2,648.8C870.3,651.5 869.2,655.0 868.8,657.5C868.3,660.0 868.1,661.7 868.8,663.8C869.4,665.8 869.8,669.0 872.5,670.0C875.2,671.0 881.9,670.4 885.0,670.0C888.1,669.6 888.3,668.8 891.2,667.5C894.2,666.2 898.5,664.4 902.5,662.5C906.5,660.6 910.8,658.4 915.0,656.2C919.2,654.1 923.3,651.8 927.5,649.5C931.7,647.2 936.2,644.7 940.0,642.5C943.8,640.3 947.5,638.3 950.0,636.2C952.5,634.2 953.1,632.5 955.0,630.0C956.9,627.5 959.2,624.2 961.2,621.2C963.3,618.3 965.4,615.4 967.5,612.5C969.6,609.6 972.1,606.7 973.8,603.8C975.4,600.8 976.8,597.5 977.5,595.0C978.2,592.5 978.4,590.2 978.0,588.8C977.6,587.3 976.3,587.1 975.0,586.2C973.7,585.4 971.2,585.0 970.0,583.8C968.8,582.5 967.7,580.6 967.5,578.8C967.3,576.9 968.1,574.8 968.8,572.5C969.4,570.2 970.6,567.3 971.2,565.0C971.9,562.7 972.7,560.6 972.5,558.8C972.3,556.9 970.8,555.4 970.0,553.8C969.2,552.1 968.0,551.0 968.0,548.8C968.0,546.5 970.5,542.1 970.0,540.0C969.5,537.9 967.1,537.7 965.0,536.2C962.9,534.8 960.0,532.8 957.5,531.2C955.0,529.7 952.5,528.1 950.0,527.0C947.5,525.9 945.0,524.8 942.5,524.5C940.0,524.2 937.5,524.3 935.0,525.0C932.5,525.7 930.4,527.6 927.5,528.8C924.6,529.9 920.4,531.3 917.5,532.0C914.6,532.7 911.6,532.3 910.0,533.0C908.4,533.7 907.8,534.9 908.0,536.2C908.2,537.6 909.9,539.8 911.2,541.2C912.6,542.7 914.8,544.0 916.2,545.0C917.7,546.0 920.2,546.5 920.0,547.5C919.8,548.5 916.9,550.2 915.0,551.2C913.1,552.3 911.2,553.3 908.8,553.8Z" fill="#008a62"/>
<path d="M1077.5,591.2C1078.3,589.6 1080.6,587.3 1082.5,586.2C1084.4,585.2 1086.9,584.6 1088.8,585.0C1090.6,585.4 1092.3,586.9 1093.8,588.8C1095.2,590.6 1096.0,594.0 1097.5,596.2C1099.0,598.5 1101.0,600.6 1102.5,602.5C1104.0,604.4 1105.8,605.2 1106.2,607.5C1106.7,609.8 1105.8,615.4 1105.0,616.2C1104.2,617.1 1102.7,614.0 1101.2,612.5C1099.8,611.0 1098.5,608.5 1096.2,607.5C1094.0,606.5 1090.0,607.3 1087.5,606.2C1085.0,605.2 1082.9,602.9 1081.2,601.2C1079.6,599.6 1078.1,597.9 1077.5,596.2C1076.9,594.6 1076.7,592.9 1077.5,591.2Z" fill="#008a62"/>
<path d="M1117.5,633.8C1116.0,631.0 1110.6,635.0 1108.8,636.2C1106.9,637.5 1106.5,639.4 1106.2,641.2C1106.0,643.1 1106.7,645.8 1107.5,647.5C1108.3,649.2 1109.6,650.4 1111.2,651.2C1112.9,652.1 1116.5,655.4 1117.5,652.5C1118.5,649.6 1119.0,636.5 1117.5,633.8Z" fill="#008a62"/>
<path d="M320.0,100.0C273.3,100.8 318.3,102.7 320.0,103.8C321.7,104.8 326.2,105.4 330.0,106.2C333.8,107.1 337.9,108.5 342.5,108.8C347.1,109.0 352.1,108.0 357.5,108.0C362.9,108.0 369.6,108.4 375.0,108.8C380.4,109.1 386.7,110.1 390.0,110.0C393.3,109.9 393.3,108.8 395.0,108.0C396.7,107.2 396.7,105.8 400.0,105.0C403.3,104.2 410.0,103.2 415.0,103.0C420.0,102.8 426.2,103.5 430.0,103.8C433.8,104.0 436.9,103.7 437.5,104.5C438.1,105.3 435.8,107.8 433.8,108.8C431.7,109.8 429.0,110.0 425.0,110.5C421.0,111.0 414.6,111.7 410.0,112.0C405.4,112.3 400.4,111.9 397.5,112.5C394.6,113.1 392.1,114.0 392.5,115.5C392.9,117.0 396.9,119.5 400.0,121.2C403.1,123.0 409.0,124.4 411.2,126.2C413.5,128.1 412.9,130.4 413.8,132.5C414.6,134.6 414.8,136.9 416.2,138.8C417.7,140.6 419.8,142.1 422.5,143.8C425.2,145.4 429.2,147.5 432.5,148.8C435.8,150.0 439.2,151.4 442.5,151.2C445.8,151.1 449.8,149.5 452.5,148.0C455.2,146.5 456.7,144.7 458.8,142.5C460.8,140.3 463.1,137.7 465.0,135.0C466.9,132.3 468.1,129.2 470.0,126.2C471.9,123.3 474.2,119.6 476.2,117.5C478.3,115.4 479.4,114.7 482.5,113.8C485.6,112.8 490.4,112.4 495.0,112.0C499.6,111.6 504.6,111.2 510.0,111.2C515.4,111.2 522.5,111.7 527.5,112.0C532.5,112.3 536.9,112.1 540.0,113.0C543.1,113.9 545.4,115.1 546.2,117.5C547.1,119.9 545.6,124.2 545.0,127.5C544.4,130.8 542.3,134.6 542.5,137.5C542.7,140.4 544.2,143.2 546.2,145.0C548.3,146.8 551.5,147.2 555.0,148.0C558.5,148.8 563.3,148.5 567.5,149.5C571.7,150.5 575.8,152.4 580.0,153.8C584.2,155.1 589.2,156.8 592.5,157.5C595.8,158.2 597.1,158.8 600.0,158.0C602.9,157.2 606.7,153.5 610.0,153.0C613.3,152.5 620.0,155.1 620.0,155.0C620.0,154.9 610.0,152.3 610.0,152.5C610.0,152.7 616.7,154.8 620.0,156.2C623.3,157.7 626.7,159.4 630.0,161.2C633.3,163.1 637.3,166.1 640.0,167.5C642.7,168.9 644.2,169.6 646.2,169.5C648.3,169.4 649.8,167.5 652.5,167.0C655.2,166.5 659.6,165.8 662.5,166.2C665.4,166.8 667.1,168.3 670.0,170.0C672.9,171.7 677.7,174.2 680.0,176.2C682.3,178.3 683.8,181.0 683.8,182.5C683.8,184.0 681.7,184.9 680.0,185.5C678.3,186.1 673.8,185.3 673.8,186.2C673.8,187.2 677.7,189.4 680.0,191.2C682.3,193.1 685.4,195.7 687.5,197.5C689.6,199.3 692.3,200.8 692.5,202.0C692.7,203.2 688.5,203.9 688.8,205.0C689.0,206.1 692.5,207.1 693.8,208.8C695.0,210.4 696.0,212.9 696.2,215.0C696.5,217.1 694.2,220.4 695.0,221.2C695.8,222.1 699.2,219.0 701.2,220.0C703.3,221.0 705.6,224.6 707.5,227.5C709.4,230.4 711.0,233.8 712.5,237.5C714.0,241.2 715.0,246.7 716.2,250.0C717.5,253.3 719.2,254.6 720.0,257.5C720.8,260.4 721.5,264.9 721.2,267.5C721.0,270.1 718.1,271.1 718.8,273.0C719.4,274.9 722.7,277.2 725.0,278.8C727.3,280.3 730.0,281.8 732.5,282.5C735.0,283.2 737.5,283.6 740.0,283.0C742.5,282.4 745.2,280.9 747.5,278.8C749.8,276.6 751.9,273.5 753.8,270.0C755.6,266.5 757.4,261.7 758.8,257.5C760.1,253.3 760.8,249.4 762.0,245.0C763.2,240.6 764.7,236.2 766.2,231.2C767.8,226.2 769.6,220.2 771.2,215.0C772.9,209.8 774.8,205.0 776.2,200.0C777.7,195.0 779.3,190.0 780.0,185.0C780.7,180.0 779.9,175.4 780.5,170.0C781.1,164.6 783.0,158.8 783.8,152.5C784.5,146.2 784.6,137.5 785.0,132.5C785.4,127.5 785.4,125.2 786.2,122.5C787.1,119.8 787.7,118.5 790.0,116.2C792.3,114.0 796.7,111.1 800.0,108.8C803.3,106.4 808.3,103.7 810.0,102.0C811.7,100.3 845.0,99.3 810.0,98.8C775.0,98.2 681.7,98.5 600.0,98.8C518.3,99.0 366.7,99.2 320.0,100.0Z" fill="#006f96"/>
<path d="M1035.0,102.0C1022.5,103.7 1039.6,106.8 1042.5,108.8C1045.4,110.7 1049.4,112.1 1052.5,113.8C1055.6,115.4 1059.2,117.1 1061.2,118.8C1063.3,120.4 1065.2,121.0 1065.0,123.8C1064.8,126.5 1062.1,130.6 1060.0,135.0C1057.9,139.4 1054.6,145.4 1052.5,150.0C1050.4,154.6 1048.1,159.2 1047.5,162.5C1046.9,165.8 1049.4,167.5 1048.8,170.0C1048.1,172.5 1045.6,174.2 1043.8,177.5C1041.9,180.8 1039.6,186.2 1037.5,190.0C1035.4,193.8 1034.2,197.4 1031.2,200.0C1028.3,202.6 1024.4,204.5 1020.0,205.5C1015.6,206.5 1010.0,206.0 1005.0,206.2C1000.0,206.5 995.0,206.7 990.0,207.0C985.0,207.3 980.0,207.5 975.0,208.0C970.0,208.5 965.0,209.6 960.0,210.0C955.0,210.4 950.0,210.6 945.0,210.5C940.0,210.4 935.0,209.8 930.0,209.5C925.0,209.2 920.0,209.0 915.0,208.8C910.0,208.5 904.0,207.7 900.0,208.0C896.0,208.3 893.3,208.9 891.2,210.5C889.2,212.1 889.0,214.7 887.5,217.5C886.0,220.3 884.4,224.4 882.5,227.5C880.6,230.6 878.0,232.9 876.2,236.2C874.5,239.6 872.8,244.0 872.0,247.5C871.2,251.0 871.0,254.2 871.2,257.5C871.5,260.8 872.3,264.8 873.8,267.5C875.2,270.2 877.3,271.9 880.0,273.8C882.7,275.6 886.7,276.9 890.0,278.8C893.3,280.6 896.7,282.9 900.0,285.0C903.3,287.1 906.2,289.8 910.0,291.2C913.8,292.7 918.7,292.9 922.5,293.8C926.3,294.6 931.0,294.4 933.0,296.2C935.0,298.1 933.5,303.0 934.5,305.0C935.5,307.0 936.6,307.6 938.8,308.0C940.9,308.4 944.4,308.2 947.5,307.5C950.6,306.8 954.2,305.3 957.5,303.8C960.8,302.2 964.2,299.9 967.5,298.0C970.8,296.1 974.2,293.9 977.5,292.5C980.8,291.1 984.2,290.0 987.5,289.5C990.8,289.0 994.2,288.9 997.5,289.5C1000.8,290.1 1004.4,291.5 1007.5,293.0C1010.6,294.5 1013.5,296.3 1016.2,298.8C1019.0,301.2 1021.5,304.4 1023.8,307.5C1026.0,310.6 1027.9,314.2 1030.0,317.5C1032.1,320.8 1034.6,325.2 1036.2,327.5C1037.9,329.8 1038.1,329.4 1040.0,331.2C1041.9,333.1 1044.6,336.9 1047.5,338.8C1050.4,340.6 1054.2,342.7 1057.5,342.5C1060.8,342.3 1064.2,339.2 1067.5,337.5C1070.8,335.8 1074.4,334.4 1077.5,332.5C1080.6,330.6 1084.0,328.8 1086.2,326.2C1088.5,323.8 1089.8,320.6 1091.2,317.5C1092.7,314.4 1094.0,310.4 1095.0,307.5C1096.0,304.6 1096.7,302.9 1097.5,300.0C1098.3,297.1 1098.8,292.7 1100.0,290.0C1101.2,287.3 1103.1,285.6 1105.0,283.8C1106.9,281.9 1109.2,279.6 1111.2,278.8C1113.3,277.9 1116.5,308.8 1117.5,278.8C1118.5,248.8 1131.2,128.2 1117.5,98.8C1103.8,69.3 1047.5,100.3 1035.0,102.0Z" fill="#006f96"/>
<path d="M260.2,316.0C261.0,314.6 265.2,313.0 266.9,313.4C268.6,313.9 268.6,318.2 270.2,318.5C271.9,318.7 275.4,314.6 276.9,315.1C278.5,315.7 277.8,320.1 279.4,321.8C281.1,323.5 284.7,323.8 287.0,325.2C289.2,326.5 291.1,328.2 292.8,330.2C294.5,332.1 295.7,334.6 297.0,336.9C298.2,339.1 299.5,341.9 300.3,343.5C301.2,345.2 302.6,346.1 302.0,346.9C301.4,347.7 298.7,347.7 297.0,348.6C295.3,349.4 293.5,351.1 292.0,351.9C290.4,352.7 288.8,353.9 287.8,353.6C286.8,353.3 285.7,351.3 286.1,350.2C286.5,349.1 288.9,347.9 290.3,346.9C291.7,345.9 293.9,345.6 294.5,344.4C295.0,343.1 294.5,341.2 293.6,339.4C292.8,337.6 291.1,334.8 289.5,333.5C287.8,332.3 285.4,332.7 283.6,331.8C281.8,331.0 280.3,329.6 278.6,328.5C276.9,327.4 275.1,325.2 273.6,325.2C272.0,325.2 270.7,328.5 269.4,328.5C268.1,328.5 267.3,326.3 266.1,325.2C264.8,324.0 262.8,323.3 261.9,321.8C260.9,320.3 259.4,317.3 260.2,316.0Z" fill="#006f96"/>
<path d="M266.1,334.3C266.3,333.5 269.0,333.9 270.2,335.2C271.5,336.4 273.3,340.3 273.6,341.9C273.9,343.4 272.7,344.7 271.9,344.4C271.1,344.1 269.5,341.9 268.6,340.2C267.6,338.5 265.8,335.2 266.1,334.3Z" fill="#006f96"/>
<path d="M278.6,353.6C279.2,352.3 282.2,353.3 282.8,354.4C283.3,355.5 282.5,359.0 281.9,360.3C281.4,361.5 280.0,363.1 279.4,361.9C278.9,360.8 278.0,354.8 278.6,353.6Z" fill="#006f96"/>
<path d="M311.5,616.9C311.7,615.2 313.4,612.6 314.4,611.0C315.4,609.4 316.5,608.1 317.7,607.2C319.0,606.2 320.4,604.9 321.9,605.2C323.4,605.4 325.1,607.2 326.9,608.5C328.7,609.7 331.7,611.4 332.8,612.7C333.9,613.9 334.3,615.2 333.6,616.0C332.9,616.9 330.3,616.9 328.6,617.7C326.9,618.5 325.5,620.1 323.6,621.0C321.6,622.0 318.6,623.2 316.9,623.2C315.2,623.2 314.1,622.1 313.2,621.0C312.3,620.0 311.3,618.5 311.5,616.9Z" fill="#007f7f"/>
<path d="M363.7,650.3C364.3,649.4 365.5,648.4 367.1,649.0C368.6,649.5 371.1,652.3 372.9,653.6C374.7,655.0 376.9,655.9 377.9,657.0C379.0,658.1 379.2,658.8 379.1,660.3C379.0,661.9 378.0,664.8 377.1,666.2C376.2,667.5 375.0,668.5 373.7,668.4C372.5,668.2 370.8,666.7 369.6,665.4C368.3,664.0 367.2,662.1 366.2,660.3C365.2,658.5 364.1,656.2 363.7,654.5C363.3,652.8 363.2,651.2 363.7,650.3Z" fill="#008a62"/>
<path d="M385.5,707.2C386.0,706.2 388.5,704.9 390.5,703.8C392.4,702.8 394.9,701.5 397.2,700.8C399.4,700.1 402.0,699.7 403.8,699.6C405.7,699.6 407.3,699.9 408.0,700.5C408.7,701.0 408.9,702.1 408.0,703.0C407.2,703.8 404.7,704.6 403.0,705.5C401.3,706.4 399.9,707.8 398.0,708.5C396.0,709.2 393.1,709.5 391.3,709.7C389.5,709.8 388.1,709.7 387.1,709.3C386.1,708.9 384.9,708.1 385.5,707.2Z" fill="#008a62"/>
<path d="M358.7,633.6C359.2,632.4 360.6,632.4 361.2,633.2C361.8,634.1 362.3,636.7 362.4,638.6C362.5,640.5 362.2,643.3 361.7,644.4C361.2,645.6 360.1,646.3 359.5,645.6C359.0,644.9 358.5,642.3 358.4,640.3C358.2,638.3 358.2,634.7 358.7,633.6Z" fill="#008a62"/>
<path d="M71.8,673.7C72.1,672.4 74.0,670.4 75.2,668.7C76.3,667.1 77.8,665.2 78.5,663.7C79.2,662.2 78.9,659.5 79.3,659.5C79.7,659.5 80.4,662.3 81.0,663.7C81.6,665.1 82.8,666.5 82.7,667.9C82.5,669.3 81.1,670.7 80.2,672.1C79.2,673.5 77.9,675.4 76.8,676.3C75.7,677.1 74.3,677.5 73.5,677.1C72.6,676.7 71.5,675.1 71.8,673.7Z" fill="#009844"/>
<path d="M446.8,436.9C446.5,435.4 448.7,428.5 450.1,426.9C451.5,425.2 454.1,425.7 455.1,426.9C456.1,428.0 456.5,432.0 456.0,433.5C455.4,435.1 453.3,435.5 451.8,436.1C450.2,436.6 447.0,438.4 446.8,436.9Z" fill="#008a62"/>
<path d="M653.5,411.0C655.2,410.1 663.0,413.6 666.9,415.2C670.8,416.7 673.6,418.5 676.9,420.2C680.3,421.8 683.1,423.5 687.0,425.2C690.9,426.9 695.9,428.5 700.3,430.2C704.8,431.9 709.5,433.8 713.7,435.2C717.9,436.6 724.3,438.1 725.4,438.6C726.5,439.0 722.9,438.4 720.4,437.7C717.9,437.0 713.7,435.4 710.4,434.4C707.0,433.4 703.7,432.8 700.3,431.9C697.0,430.9 693.6,429.5 690.3,428.5C687.0,427.6 682.5,425.5 680.3,426.0C678.0,426.6 678.0,430.1 676.9,431.9C675.8,433.7 674.4,435.5 673.6,436.9C672.7,438.3 673.0,440.8 671.9,440.2C670.8,439.7 668.6,435.8 666.9,433.5C665.2,431.3 663.5,429.1 661.9,426.9C660.2,424.6 658.2,422.8 656.9,420.2C655.5,417.5 651.8,411.8 653.5,411.0Z" fill="#009844"/>
<path d="M558.8,573.6C559.0,571.9 561.8,570.5 563.8,570.2C565.7,570.0 567.7,571.3 570.5,571.9C573.3,572.5 577.2,573.3 580.5,573.6C583.8,573.9 589.4,573.0 590.5,573.6C591.6,574.1 589.4,575.8 587.2,576.9C585.0,578.0 579.7,579.2 577.2,580.3C574.6,581.4 573.8,583.3 572.1,583.6C570.5,583.9 568.8,582.5 567.1,581.9C565.5,581.4 563.5,581.7 562.1,580.3C560.7,578.9 558.5,575.3 558.8,573.6Z" fill="#00a01e"/>
<path d="M650.8,510.1C652.6,508.5 657.1,507.4 660.2,507.4C663.3,507.4 666.7,509.2 669.6,510.1C672.5,511.0 675.4,511.6 677.6,512.7C679.8,513.9 681.4,514.7 682.9,516.8C684.5,518.8 685.6,521.9 687.0,524.8C688.3,527.7 689.9,531.0 691.0,534.1C692.1,537.3 693.0,540.6 693.6,543.5C694.3,546.4 695.2,549.8 695.0,551.5C694.8,553.3 693.9,554.7 692.3,554.2C690.7,553.8 687.6,550.6 685.6,548.9C683.6,547.1 682.5,544.4 680.3,543.5C678.0,542.6 674.9,543.1 672.2,543.5C669.6,544.0 666.7,545.3 664.2,546.2C661.8,547.1 659.3,548.2 657.5,548.9C655.7,549.5 655.3,550.4 653.5,550.2C651.7,550.0 648.6,548.4 646.8,547.5C645.0,546.6 643.0,546.6 642.8,544.8C642.6,543.1 644.6,539.7 645.5,536.8C646.4,533.9 647.5,530.8 648.2,527.5C648.8,524.1 649.1,519.7 649.5,516.8C649.9,513.9 649.1,511.6 650.8,510.1Z" fill="#007f7f"/>
<path d="M691.0,556.9C690.7,558.7 692.5,562.2 693.6,564.9C694.8,567.6 695.9,570.3 697.7,572.9C699.4,575.6 702.1,578.3 704.3,581.0C706.6,583.6 709.0,587.0 711.0,589.0C713.0,591.0 714.6,593.0 716.4,593.0C718.2,593.0 720.2,590.6 721.7,589.0C723.3,587.4 726.0,584.5 725.8,583.6C725.5,582.8 722.2,584.5 720.4,583.6C718.6,582.8 716.8,580.1 715.1,578.3C713.3,576.5 711.5,574.9 709.7,572.9C707.9,570.9 706.1,568.5 704.3,566.3C702.6,564.0 700.6,561.6 699.0,559.6C697.4,557.6 696.3,554.7 695.0,554.2C693.6,553.8 691.2,555.1 691.0,556.9Z" fill="#007f7f"/>
<path d="M597.3,490.0C599.1,486.7 605.4,488.7 608.0,490.0C610.7,491.3 611.8,495.1 613.4,498.0C614.9,500.9 617.4,504.7 617.4,507.4C617.4,510.1 615.4,513.2 613.4,514.1C611.4,515.0 608.0,513.4 605.4,512.7C602.7,512.1 598.7,513.9 597.3,510.1C596.0,506.3 595.5,493.3 597.3,490.0Z" fill="#007f7f"/>
<path d="M613.4,488.7C614.3,486.7 620.3,487.1 622.7,488.7C625.2,490.2 627.2,495.1 628.1,498.0C629.0,500.9 629.0,504.5 628.1,506.1C627.2,507.6 624.5,508.3 622.7,507.4C621.0,506.5 619.0,503.8 617.4,500.7C615.8,497.6 612.5,490.7 613.4,488.7Z" fill="#007f7f"/>
<path d="M629.4,510.1C630.7,509.3 635.2,508.3 637.5,508.7C639.7,509.2 642.4,511.2 642.8,512.7C643.3,514.3 641.7,517.4 640.1,518.1C638.6,518.8 635.1,517.5 633.4,516.8C631.8,516.0 630.8,514.5 630.1,513.4C629.4,512.3 628.2,510.8 629.4,510.1Z" fill="#007f7f"/>
<path d="M608.0,562.2C608.9,560.9 612.9,559.1 616.1,558.2C619.2,557.3 623.9,556.0 626.8,556.9C629.7,557.8 632.6,561.3 633.4,563.6C634.3,565.8 633.4,568.3 632.1,570.3C630.8,572.3 627.6,574.5 625.4,575.6C623.2,576.7 620.7,575.6 618.7,577.0C616.7,578.3 615.2,582.1 613.4,583.6C611.6,585.2 609.8,586.3 608.0,586.3C606.2,586.3 603.1,585.4 602.7,583.6C602.2,581.9 603.8,577.8 605.4,575.6C606.9,573.4 610.0,571.8 612.0,570.3C614.0,568.7 617.6,566.9 617.4,566.3C617.2,565.6 612.3,566.9 610.7,566.3C609.1,565.6 607.1,563.6 608.0,562.2Z" fill="#007f7f"/>
<path d="M642.8,564.9C643.9,563.8 647.9,564.5 649.5,566.3C651.1,568.0 651.1,573.2 652.2,575.6C653.3,578.1 654.6,579.4 656.2,581.0C657.7,582.5 661.3,583.6 661.5,585.0C661.8,586.3 659.3,588.8 657.5,589.0C655.7,589.2 652.8,587.7 650.8,586.3C648.8,585.0 646.8,583.2 645.5,581.0C644.1,578.7 643.3,575.6 642.8,572.9C642.4,570.3 641.7,566.0 642.8,564.9Z" fill="#007f7f"/>
<path d="M597.3,591.7C600.0,587.2 608.5,589.0 613.4,589.0C618.3,589.0 622.3,590.8 626.8,591.7C631.2,592.6 635.7,593.5 640.1,594.3C644.6,595.2 649.5,595.7 653.5,597.0C657.5,598.4 662.0,600.6 664.2,602.4C666.4,604.2 667.6,606.4 666.9,607.7C666.2,609.1 664.7,609.1 660.2,610.4C655.7,611.7 650.6,614.9 640.1,615.8C629.7,616.6 604.5,619.8 597.3,615.8C590.2,611.7 594.6,596.1 597.3,591.7Z" fill="#007f7f"/>
<path d="M553.3,651.7C556.1,649.5 565.6,652.3 570.0,653.4C574.5,654.5 576.7,656.5 580.1,658.4C583.4,660.4 587.7,662.6 590.1,665.1C592.5,667.6 594.0,671.2 594.3,673.5C594.6,675.7 593.6,677.5 591.8,678.5C590.0,679.5 586.5,679.6 583.4,679.3C580.3,679.1 576.4,678.1 573.4,676.8C570.3,675.6 568.4,673.5 565.0,671.8C561.7,670.1 555.3,670.1 553.3,666.8C551.4,663.4 550.5,654.0 553.3,651.7Z" fill="#00a01e"/>
<path d="M631.9,645.1C632.5,644.2 635.5,646.4 636.9,648.4C638.3,650.3 640.3,655.1 640.3,656.8C640.3,658.4 638.0,659.0 636.9,658.4C635.8,657.9 634.4,655.6 633.6,653.4C632.7,651.2 631.3,645.9 631.9,645.1Z" fill="#009844"/>
<path d="M643.6,663.4C643.9,661.2 646.1,659.0 647.0,660.1C647.8,661.2 648.9,667.9 648.6,670.1C648.4,672.4 646.1,674.6 645.3,673.5C644.4,672.4 643.3,665.7 643.6,663.4Z" fill="#009844"/>
<path d="M675.4,678.5C675.7,677.4 679.0,676.3 680.4,676.8C681.8,677.4 684.0,680.7 683.7,681.8C683.5,683.0 680.1,684.1 678.7,683.5C677.3,683.0 675.1,679.6 675.4,678.5Z" fill="#009844"/>
<path d="M641.9,693.5C642.2,691.9 644.4,690.8 645.3,691.9C646.1,693.0 647.2,698.6 647.0,700.2C646.7,701.9 644.4,703.0 643.6,701.9C642.8,700.8 641.7,695.2 641.9,693.5Z" fill="#009844"/>
<path d="M653.6,711.9C652.5,708.9 653.7,707.2 653.6,705.3C653.6,703.3 653.0,701.5 653.3,700.2C653.6,699.0 654.1,698.1 655.3,697.7C656.5,697.4 658.7,698.4 660.3,698.2C662.0,698.0 664.0,697.6 665.4,696.6C666.7,695.5 667.7,693.2 668.7,691.9C669.7,690.5 669.8,689.0 671.2,688.5C672.6,688.0 675.1,688.9 677.1,688.9C679.0,688.9 681.2,687.2 682.9,688.5C684.6,689.9 687.0,694.1 687.1,696.9C687.2,699.7 685.4,701.3 683.7,705.3C682.1,709.2 679.3,715.0 677.1,720.3C674.8,725.6 673.2,736.5 670.4,737.0C667.6,737.6 663.1,727.8 660.3,723.6C657.5,719.5 654.8,715.0 653.6,711.9Z" fill="#007f7f"/>
<path d="M555.4,653.4C556.1,652.0 559.9,651.5 562.1,651.7C564.3,652.0 566.3,654.0 568.8,655.1C571.3,656.2 574.1,657.0 577.2,658.4C580.2,659.8 584.7,661.5 587.2,663.4C589.7,665.4 591.5,668.0 592.2,670.1C592.9,672.2 592.5,674.7 591.4,676.0C590.3,677.2 587.9,677.8 585.5,677.7C583.1,677.5 579.7,676.3 577.2,675.2C574.6,674.0 572.7,672.5 570.5,671.0C568.2,669.4 565.9,667.8 563.8,666.0C561.7,664.1 559.3,662.2 557.9,660.1C556.5,658.0 554.7,654.8 555.4,653.4Z" fill="#00a01e"/>
<path d="M935.0,541.2C935.9,539.4 938.3,538.5 940.0,538.8C941.7,539.0 944.0,540.6 945.0,542.5C946.0,544.4 946.5,547.5 946.2,550.0C946.0,552.5 944.8,555.6 943.8,557.5C942.7,559.4 941.2,561.2 940.0,561.2C938.8,561.2 937.2,559.4 936.2,557.5C935.3,555.6 934.7,552.7 934.5,550.0C934.3,547.3 934.1,543.1 935.0,541.2Z" fill="#007f7f"/>
<path d="M637.5,459.8C638.9,457.9 642.8,457.7 645.7,457.5C648.6,457.3 651.9,457.7 655.0,458.7C658.1,459.6 661.6,462.4 664.3,463.3C667.1,464.3 668.6,464.1 671.3,464.5C674.1,464.9 677.6,464.9 680.7,465.7C683.8,466.4 687.7,467.6 690.0,469.2C692.3,470.7 693.5,472.9 694.7,475.0C695.8,477.1 695.8,481.2 697.0,482.0C698.2,482.8 699.7,480.4 701.7,479.7C703.6,478.9 706.7,476.6 708.7,477.3C710.6,478.1 712.4,481.6 713.3,484.3C714.3,487.1 713.7,490.8 714.5,493.7C715.3,496.6 716.6,499.1 718.0,501.8C719.4,504.6 720.7,507.9 722.7,510.0C724.6,512.1 727.7,512.7 729.7,514.7C731.6,516.6 733.4,518.9 734.3,521.7C735.3,524.4 735.7,528.1 735.5,531.0C735.3,533.9 734.5,536.1 733.2,539.2C731.8,542.3 733.0,547.9 727.3,549.7C721.7,551.4 704.2,551.6 699.3,549.7C694.5,547.7 699.3,541.5 698.2,538.0C697.0,534.5 693.9,531.8 692.3,528.7C690.8,525.6 690.0,522.4 688.8,519.3C687.7,516.2 686.7,512.3 685.3,510.0C684.0,507.7 682.4,506.9 680.7,505.3C678.9,503.8 676.6,502.2 674.8,500.7C673.1,499.1 672.1,497.0 670.2,496.0C668.2,495.0 665.5,495.4 663.2,494.8C660.8,494.2 658.5,493.7 656.2,492.5C653.8,491.3 651.5,489.0 649.2,487.8C646.8,486.7 643.9,487.1 642.2,485.5C640.4,483.9 639.4,481.2 638.7,478.5C637.9,475.8 637.7,472.3 637.5,469.2C637.3,466.1 636.1,461.8 637.5,459.8Z" fill="#009844"/>
<path d="M533.8,157.5C534.2,156.3 536.1,155.7 537.5,155.8C538.9,155.8 541.2,157.0 542.0,158.0C542.8,159.0 543.0,160.9 542.5,162.0C542.0,163.1 540.1,164.3 538.8,164.5C537.4,164.7 535.3,164.2 534.5,163.0C533.7,161.8 533.2,158.7 533.8,157.5Z" fill="#006f96"/>
<path d="M489.4,411.8C489.8,410.6 491.5,409.2 492.7,408.8C494.0,408.4 495.7,408.7 496.9,409.3C498.2,409.9 499.6,411.4 500.3,412.6C501.0,413.9 501.5,415.7 501.1,416.8C500.7,417.9 499.0,419.0 497.8,419.3C496.5,419.7 494.8,419.4 493.6,418.8C492.3,418.3 490.9,417.2 490.2,416.0C489.5,414.8 489.0,413.0 489.4,411.8Z" fill="#007f7f"/>
<path d="M510.0,414.3C510.0,413.0 511.6,411.3 512.8,411.0C514.0,410.6 515.7,411.2 517.0,412.1C518.2,413.1 519.8,415.5 520.3,416.8C520.9,418.2 520.9,419.5 520.3,420.2C519.8,420.9 518.2,421.2 517.0,421.0C515.7,420.8 514.0,419.9 512.8,418.8C511.6,417.7 510.0,415.6 510.0,414.3Z" fill="#007f7f"/>
<path d="M532.0,425.2C532.4,423.9 533.6,422.7 534.5,422.7C535.5,422.7 537.0,424.1 537.9,425.2C538.8,426.3 540.1,427.8 540.1,429.4C540.1,430.9 538.7,433.0 537.9,434.4C537.1,435.8 536.1,437.6 535.4,437.7C534.6,437.9 533.9,436.5 533.4,435.2C532.9,434.0 532.6,431.9 532.4,430.2C532.2,428.5 531.7,426.4 532.0,425.2Z" fill="#007f7f"/>
<path d="M524.5,429.4C525.4,428.9 529.4,428.2 530.4,428.5C531.3,428.8 531.2,430.6 530.4,431.0C529.5,431.5 526.3,431.3 525.4,431.0C524.4,430.8 523.7,429.8 524.5,429.4Z" fill="#cfe0e0"/>
<path d="M510.3,456.1C510.3,455.4 511.2,454.8 511.6,454.9C512.1,455.1 512.8,456.2 512.8,457.0C512.8,457.7 512.1,459.6 511.6,459.5C511.2,459.3 510.3,456.9 510.3,456.1Z" fill="#ffffff"/>
<path d="M535.4,456.1C535.4,455.7 538.2,455.0 538.7,455.3C539.3,455.6 539.3,457.7 538.7,457.8C538.2,457.9 535.4,456.5 535.4,456.1Z" fill="#ffffff"/>
<path d="M552.1,467.0C552.4,466.0 554.3,463.7 555.5,462.8C556.6,461.9 558.1,461.1 558.8,461.6C559.5,462.2 559.8,465.0 559.6,466.2C559.5,467.3 558.9,468.2 558.0,468.7C557.0,469.1 554.8,469.3 553.8,469.0C552.8,468.7 551.8,468.0 552.1,467.0Z" fill="#007f7f"/>
<path d="M538.7,477.0C539.0,475.7 540.3,474.2 541.2,474.0C542.2,473.9 543.6,475.0 544.6,476.2C545.6,477.4 546.3,479.4 547.1,481.2C547.9,483.0 548.3,485.6 549.6,487.1C550.9,488.5 554.2,489.4 554.6,490.1C555.0,490.8 553.4,491.4 552.1,491.2C550.9,491.1 548.6,489.9 547.1,489.1C545.6,488.2 544.2,487.4 542.9,486.2C541.7,485.1 540.3,483.6 539.6,482.0C538.9,480.5 538.5,478.4 538.7,477.0Z" fill="#007f7f"/>
<path d="M561.8,487.1C562.2,486.2 563.5,484.7 564.6,484.5C565.8,484.4 567.7,485.3 568.8,486.2C569.9,487.1 571.2,488.9 571.3,490.1C571.5,491.3 570.6,492.9 569.7,493.4C568.7,493.9 566.7,493.6 565.5,492.9C564.3,492.3 563.1,490.5 562.5,489.6C561.9,488.6 561.4,487.9 561.8,487.1Z" fill="#007f7f"/>
<path d="M589.7,485.4C589.9,484.1 591.4,481.5 592.2,480.4C593.1,479.3 593.8,478.6 594.7,478.7C595.7,478.8 596.6,480.7 598.1,481.2C599.6,481.7 602.1,481.3 603.9,481.7C605.8,482.1 608.5,482.8 609.0,483.7C609.4,484.6 607.7,486.2 606.5,487.1C605.2,487.9 603.2,488.6 601.4,489.1C599.6,489.5 597.3,489.8 595.6,489.6C593.9,489.4 592.4,488.6 591.4,487.9C590.4,487.2 589.6,486.6 589.7,485.4Z" fill="#007f7f"/>
<path d="M591.4,502.1C592.0,500.6 593.9,499.3 595.6,497.9C597.3,496.5 600.2,493.9 601.4,493.7C602.7,493.6 602.7,495.4 603.1,497.1C603.5,498.8 603.2,502.0 603.9,503.8C604.6,505.6 605.6,507.0 607.3,508.0C609.0,508.9 612.3,508.9 614.0,509.6C615.7,510.3 617.0,511.3 617.3,512.1C617.6,513.0 617.0,514.1 615.7,514.6C614.3,515.2 611.3,515.7 609.0,515.5C606.6,515.3 603.7,514.2 601.4,513.5C599.2,512.8 597.1,512.4 595.6,511.3C594.1,510.2 592.9,508.7 592.2,507.1C591.5,505.6 590.8,503.6 591.4,502.1Z" fill="#007f7f"/>
<path d="M737.1,421.8C738.2,420.6 740.6,419.9 742.1,420.2C743.7,420.4 745.1,423.2 746.3,423.5C747.6,423.8 748.7,421.4 749.7,421.8C750.6,422.3 752.5,424.8 752.2,426.0C751.9,427.3 749.7,428.5 748.0,429.4C746.3,430.2 743.8,430.6 742.1,431.0C740.5,431.5 739.0,432.4 738.0,431.9C736.9,431.3 735.9,429.4 735.8,427.7C735.6,426.0 736.1,423.1 737.1,421.8Z" fill="#008a62"/>
<path d="M769.7,436.9C769.9,435.6 772.4,432.3 773.9,431.0C775.4,429.8 777.8,429.1 778.9,429.4C780.0,429.6 780.7,431.5 780.6,432.7C780.5,434.0 779.3,435.9 778.1,436.9C776.8,437.9 774.5,438.6 773.1,438.6C771.7,438.6 769.6,438.1 769.7,436.9Z" fill="#008a62"/>
<path d="M610.0,485.4C610.7,484.1 613.0,482.0 614.2,482.0C615.5,482.0 616.6,483.7 617.6,485.4C618.5,487.1 618.8,489.8 620.1,492.1C621.3,494.3 623.7,496.8 625.1,498.8C626.5,500.7 628.1,502.2 628.4,503.8C628.7,505.3 627.7,507.4 626.8,508.0C625.8,508.5 624.1,508.1 622.6,507.1C621.0,506.1 619.1,504.1 617.6,502.1C616.0,500.2 614.6,497.5 613.4,495.4C612.2,493.3 610.9,491.2 610.4,489.6C609.8,487.9 609.4,486.6 610.0,485.4Z" fill="#007f7f"/>
<path d="M630.9,489.6C631.4,488.2 633.2,487.9 634.3,487.9C635.4,487.9 636.7,488.5 637.6,489.6C638.5,490.7 639.7,493.0 639.8,494.6C639.9,496.1 639.2,497.9 638.5,498.8C637.7,499.6 636.2,500.0 635.1,499.6C634.0,499.2 632.5,497.9 631.8,496.3C631.1,494.6 630.5,491.0 630.9,489.6Z" fill="#007f7f"/>
<path d="M646.8,491.2C647.3,490.4 648.8,489.6 650.2,489.6C651.6,489.5 653.9,489.9 655.2,490.7C656.4,491.6 657.7,493.5 657.7,494.6C657.7,495.6 656.4,496.7 655.2,497.1C653.9,497.5 651.5,497.2 650.2,496.8C648.8,496.3 647.7,495.5 647.2,494.6C646.6,493.7 646.3,492.1 646.8,491.2Z" fill="#007f7f"/>
<path d="M629.3,509.6C630.0,508.8 633.3,508.5 635.1,508.8C636.9,509.1 639.0,510.2 640.1,511.3C641.2,512.4 641.9,514.2 641.8,515.5C641.7,516.7 640.4,518.6 639.3,518.8C638.2,519.1 636.5,518.0 635.1,517.2C633.7,516.3 631.9,515.1 630.9,513.8C630.0,512.6 628.6,510.5 629.3,509.6Z" fill="#007f7f"/>
<path d="M697.0,370.0C695.0,366.5 701.4,371.4 703.7,372.5C705.9,373.6 708.1,375.2 710.4,376.7C712.6,378.2 714.5,380.2 717.1,381.7C719.6,383.2 722.9,384.5 725.4,385.9C727.9,387.3 729.9,388.8 732.1,390.1C734.3,391.3 736.6,393.0 738.8,393.4C741.0,393.8 743.3,392.3 745.5,392.6C747.7,392.9 750.2,394.0 752.2,395.1C754.1,396.2 755.8,397.9 757.2,399.3C758.6,400.7 759.8,402.2 760.5,403.4C761.2,404.6 761.9,405.8 761.4,406.5C760.8,407.2 759.0,407.6 757.2,407.6C755.4,407.6 753.0,406.9 750.5,406.5C748.0,406.0 744.9,405.6 742.1,405.1C739.4,404.6 736.3,404.3 733.8,403.4C731.3,402.6 729.2,401.4 727.1,400.1C725.0,398.8 723.2,397.0 721.2,395.9C719.3,394.9 719.4,398.1 715.4,393.7C711.3,389.4 698.9,373.5 697.0,370.0Z" fill="#008a62"/>
<path d="M740.5,455.3C741.3,454.2 744.6,453.6 747.2,453.6C749.7,453.6 753.3,454.7 755.5,455.3C757.7,455.8 758.6,456.1 760.5,457.0C762.5,457.8 765.6,459.2 767.2,460.3C768.9,461.4 769.2,462.5 770.6,463.6C772.0,464.8 774.2,465.9 775.6,467.0C777.0,468.1 779.2,469.8 778.9,470.3C778.7,470.9 775.9,470.9 773.9,470.3C772.0,469.8 769.5,468.1 767.2,467.0C765.0,465.9 763.3,464.5 760.5,463.6C757.7,462.8 753.6,462.5 750.5,462.0C747.4,461.4 743.8,461.4 742.1,460.3C740.5,459.2 739.6,456.4 740.5,455.3Z" fill="#006f96"/>
<path d="M790.6,468.7C791.9,466.7 798.0,465.0 800.0,465.3C802.0,465.6 802.3,468.4 802.3,470.3C802.3,472.3 801.7,475.9 800.0,477.0C798.3,478.1 793.9,478.4 792.3,477.0C790.7,475.6 789.4,470.6 790.6,468.7Z" fill="#006f96"/>
<path d="M510.3,548.5C510.4,546.4 512.8,543.1 514.4,541.0C516.1,538.9 517.9,537.1 520.3,536.0C522.7,534.8 526.3,534.3 528.7,534.3C531.0,534.3 533.3,535.0 534.5,536.0C535.8,536.9 536.7,538.9 536.2,539.8C535.6,540.7 532.2,540.6 531.2,541.5C530.1,542.3 529.4,543.7 530.0,544.8C530.6,545.9 532.5,547.7 534.5,548.2C536.5,548.6 539.7,547.4 542.0,547.3C544.4,547.2 547.6,548.9 548.7,547.7C549.9,546.4 548.6,541.4 549.1,539.8C549.5,538.2 549.9,539.2 551.2,538.1C552.6,537.1 553.6,534.8 557.1,533.4C560.6,532.1 568.2,530.5 572.1,530.1C576.0,529.7 577.7,530.9 580.5,530.9C583.3,531.0 586.9,530.2 588.9,530.4C590.8,530.7 591.8,531.4 592.2,532.6C592.6,533.8 592.2,536.1 591.4,537.6C590.5,539.2 589.0,540.8 587.2,541.8C585.4,542.8 582.2,543.0 580.5,543.8C578.8,544.6 577.8,545.6 577.2,546.8C576.5,548.0 576.7,549.7 576.8,551.0C577.0,552.3 576.8,554.6 578.0,554.8C579.2,555.1 581.8,553.3 583.8,552.7C585.9,552.0 588.6,551.1 590.5,551.0C592.5,550.9 593.9,551.0 595.6,551.8C597.2,552.7 599.3,554.6 600.6,556.0C601.8,557.4 603.1,559.2 603.1,560.2C603.1,561.2 601.8,561.7 600.6,561.9C599.3,562.0 597.2,561.5 595.6,561.0C593.9,560.6 592.2,559.9 590.5,559.4C588.9,558.8 586.9,558.4 585.5,557.7C584.1,557.0 583.4,555.6 582.2,555.2C580.9,554.8 579.1,554.6 578.0,555.2C576.9,555.7 576.2,557.3 575.5,558.5C574.8,559.8 574.6,561.5 573.8,562.7C573.0,564.0 571.9,565.2 570.5,566.1C569.1,566.9 567.1,567.7 565.5,567.7C563.8,567.7 562.1,566.9 560.4,566.1C558.8,565.2 557.6,563.4 555.4,562.7C553.2,562.0 550.1,562.3 547.1,561.9C544.0,561.5 540.1,560.9 537.0,560.2C534.0,559.5 531.4,558.0 528.7,557.7C525.9,557.4 522.8,558.9 520.3,558.2C517.8,557.5 515.3,555.1 513.6,553.5C511.9,551.9 510.1,550.6 510.3,548.5Z" fill="#007f7f"/>
<path d="M554.6,614.0C554.9,612.8 555.8,608.9 557.1,607.0C558.3,605.2 560.2,604.0 562.1,602.8C564.1,601.7 566.6,601.0 568.8,600.0C571.0,599.0 573.0,597.7 575.5,597.0C578.0,596.3 580.8,595.9 583.8,595.7C586.9,595.4 591.1,594.5 593.9,595.3C596.7,596.1 598.6,598.4 600.6,600.3C602.5,602.3 604.2,605.1 605.6,607.0C607.0,609.0 609.2,610.9 608.9,612.0C608.7,613.2 606.1,613.2 603.9,613.7C601.7,614.3 597.8,614.7 595.6,615.4C593.3,616.1 592.2,616.8 590.5,617.9C588.9,619.0 587.2,621.0 585.5,622.1C583.8,623.2 582.5,624.4 580.5,624.6C578.6,624.7 575.8,623.7 573.8,622.9C571.9,622.1 569.8,620.8 568.8,619.6C567.8,618.3 567.4,616.8 568.0,615.4C568.5,614.0 570.6,612.3 572.1,611.2C573.7,610.1 576.9,609.7 577.2,608.7C577.4,607.7 575.2,606.2 573.8,605.4C572.4,604.5 570.2,603.5 568.8,603.7C567.4,603.8 566.3,605.1 565.5,606.2C564.6,607.3 564.9,609.4 563.8,610.4C562.7,611.3 560.2,611.3 558.8,612.0C557.4,612.7 556.1,614.2 555.4,614.5C554.7,614.9 554.3,615.3 554.6,614.0Z" fill="#007f7f"/>
<path d="M575.5,633.8C575.9,632.4 578.6,631.5 580.5,630.4C582.5,629.3 585.2,627.8 587.2,627.1C589.1,626.4 590.5,625.8 592.2,626.3C593.9,626.7 595.8,628.3 597.2,629.6C598.6,630.9 599.2,632.5 600.6,633.8C602.0,635.0 603.8,636.4 605.6,637.1C607.4,637.8 610.2,637.1 611.4,638.0C612.7,638.8 613.5,640.9 613.1,642.1C612.7,643.4 610.7,644.9 608.9,645.5C607.1,646.0 604.5,646.0 602.2,645.5C600.0,644.9 597.5,643.1 595.6,642.1C593.6,641.2 592.5,639.9 590.5,639.6C588.6,639.4 585.9,640.6 583.8,640.5C581.8,640.3 579.4,639.9 578.0,638.8C576.6,637.7 575.1,635.2 575.5,633.8Z" fill="#007f7f"/>
<path d="M553.7,632.1C553.9,631.2 555.0,629.9 556.3,629.6C557.5,629.3 560.2,629.5 561.3,630.1C562.4,630.7 563.1,632.1 562.9,632.9C562.8,633.8 561.7,635.1 560.4,635.5C559.2,635.8 556.5,635.7 555.4,635.1C554.3,634.6 553.6,633.0 553.7,632.1Z" fill="#007f7f"/>
<path d="M538.7,638.8C539.0,637.7 539.8,636.0 541.2,634.6C542.6,633.2 545.4,631.5 547.1,630.4C548.7,629.3 550.3,627.9 551.2,627.9C552.2,627.9 553.0,629.2 552.9,630.4C552.8,631.7 551.7,633.9 550.4,635.5C549.1,637.0 546.8,638.5 545.4,639.6C544.0,640.7 543.0,641.9 542.0,642.1C541.1,642.4 540.1,641.9 539.5,641.3C539.0,640.7 538.4,639.9 538.7,638.8Z" fill="#009844"/>
<path d="M656.2,524.8C656.9,523.4 659.8,522.6 660.2,523.4C660.6,524.3 659.5,528.8 658.9,530.1C658.2,531.5 656.6,532.4 656.2,531.5C655.7,530.6 655.5,526.1 656.2,524.8Z" fill="#006f96"/>
<path d="M680.3,520.8C681.0,520.3 684.3,522.6 685.6,524.8C687.0,527.0 688.1,531.5 688.3,534.1C688.5,536.8 687.8,540.8 687.0,540.8C686.1,540.8 683.9,536.4 682.9,534.1C681.9,531.9 681.4,529.7 680.9,527.5C680.5,525.2 679.5,521.2 680.3,520.8Z" fill="#006f96"/>
<path d="M662.9,581.0C663.5,580.1 667.6,579.2 669.6,579.6C671.6,580.1 674.5,582.5 674.9,583.6C675.4,584.8 673.8,586.1 672.2,586.3C670.7,586.5 667.1,585.9 665.6,585.0C664.0,584.1 662.2,581.9 662.9,581.0Z" fill="#006f96"/>
<path d="M644.1,568.9C644.4,567.8 646.2,566.9 646.8,567.6C647.5,568.3 648.4,571.8 648.2,572.9C647.9,574.1 646.2,574.9 645.5,574.3C644.8,573.6 643.9,570.0 644.1,568.9Z" fill="#006f96"/>
<path d="M612.0,534.1C612.0,532.8 613.4,530.2 614.7,528.8C616.1,527.3 618.3,526.1 620.1,525.5C621.9,524.8 623.7,524.3 625.4,524.8C627.1,525.2 629.0,527.0 630.1,528.1C631.2,529.2 631.1,530.7 632.1,531.5C633.1,532.3 635.2,531.9 636.1,532.8C637.0,533.7 637.7,535.5 637.5,536.8C637.2,538.2 636.1,540.1 634.8,540.8C633.4,541.6 631.2,541.7 629.4,541.5C627.6,541.3 625.6,540.3 624.1,539.5C622.5,538.7 621.6,537.3 620.1,536.8C618.5,536.4 616.1,537.3 614.7,536.8C613.4,536.4 612.0,535.5 612.0,534.1Z" fill="#009844"/>
<path d="M691.1,501.7C692.3,500.0 694.3,497.5 697.0,496.7C699.6,495.8 703.7,495.5 707.0,496.7C710.4,497.8 714.3,501.1 717.1,503.3C719.8,505.6 721.5,507.5 723.7,510.0C726.0,512.5 728.5,515.6 730.4,518.4C732.4,521.2 734.9,524.2 735.5,526.8C736.0,529.3 734.8,531.5 733.8,533.4C732.8,535.4 731.0,537.1 729.6,538.5C728.2,539.9 727.0,540.4 725.4,541.8C723.9,543.2 721.9,545.2 720.4,546.8C718.9,548.5 717.3,550.0 716.2,551.8C715.1,553.7 715.0,556.4 713.7,557.7C712.5,558.9 710.2,560.1 708.7,559.4C707.2,558.7 705.6,555.9 704.5,553.5C703.4,551.1 702.7,547.7 702.0,545.2C701.3,542.6 700.9,540.1 700.3,538.5C699.8,536.8 699.5,537.3 698.7,535.1C697.8,532.9 696.4,528.4 695.3,525.1C694.2,521.7 692.8,518.1 692.0,515.1C691.1,512.0 690.4,508.9 690.3,506.7C690.2,504.5 690.0,503.3 691.1,501.7Z" fill="#009844"/>
<path d="M750.5,561.9C751.6,560.5 755.5,559.4 757.2,560.2C758.9,561.0 760.8,564.9 760.5,566.9C760.3,568.8 757.2,571.6 755.5,571.9C753.8,572.2 751.3,570.2 750.5,568.6C749.7,566.9 749.4,563.3 750.5,561.9Z" fill="#009844"/>
<path d="M757.2,581.9C758.6,580.3 763.0,579.4 765.6,580.3C768.1,581.1 771.7,584.2 772.2,587.0C772.8,589.7 770.6,595.0 768.9,597.0C767.2,598.9 764.2,599.8 762.2,598.7C760.3,597.5 758.0,593.1 757.2,590.3C756.4,587.5 755.8,583.6 757.2,581.9Z" fill="#009844"/>
<path d="M621.7,603.7C623.4,603.4 627.3,605.4 630.1,607.0C632.9,608.7 636.0,611.5 638.5,613.7C641.0,615.9 642.6,618.7 645.2,620.4C647.7,622.1 650.4,623.7 653.5,623.7C656.6,623.7 661.3,619.8 663.5,620.4C665.8,621.0 665.5,624.9 666.9,627.1C668.3,629.3 670.8,631.5 671.9,633.8C673.0,636.0 673.6,638.2 673.6,640.5C673.6,642.7 673.0,645.8 671.9,647.2C670.8,648.6 668.8,649.4 666.9,648.8C664.9,648.3 662.4,645.5 660.2,643.8C658.0,642.1 656.0,640.5 653.5,638.8C651.0,637.1 647.7,635.7 645.2,633.8C642.6,631.8 641.0,629.3 638.5,627.1C636.0,624.9 632.6,622.6 630.1,620.4C627.6,618.2 625.1,615.7 623.4,613.7C621.7,611.8 620.3,610.4 620.1,608.7C619.8,607.0 620.1,604.0 621.7,603.7Z" fill="#006f96"/>
<path d="M728.8,551.8C729.3,550.4 731.3,549.9 733.8,548.5C736.3,547.1 740.5,545.4 743.8,543.5C747.2,541.5 751.1,539.0 753.8,536.8C756.6,534.6 758.6,531.6 760.5,530.1C762.5,528.6 764.2,527.3 765.6,527.6C766.9,527.9 768.6,530.0 768.9,531.8C769.2,533.6 768.6,536.2 767.2,538.5C765.8,540.7 763.0,543.2 760.5,545.2C758.0,547.1 755.0,548.8 752.2,550.2C749.4,551.6 746.6,552.5 743.8,553.5C741.0,554.5 737.7,555.5 735.5,556.0C733.2,556.6 731.5,557.6 730.4,556.9C729.3,556.2 728.2,553.2 728.8,551.8Z" fill="#006f96"/>
<path d="M778.9,576.9C779.9,575.5 783.7,575.0 785.6,575.3C787.6,575.5 789.8,576.6 790.6,578.6C791.5,580.5 791.5,584.4 790.6,587.0C789.8,589.5 787.3,591.4 785.6,593.6C783.9,595.9 780.3,598.4 780.6,600.3C780.9,602.3 785.1,604.0 787.3,605.4C789.5,606.7 791.9,607.9 794.0,608.7C796.1,609.5 799.0,610.6 800.0,610.4C801.0,610.1 801.3,608.1 800.0,607.0C798.7,605.9 794.7,605.1 792.3,603.7C789.9,602.3 786.2,600.6 785.6,598.7C785.1,596.7 789.2,593.9 789.0,592.0C788.7,590.0 785.5,588.4 783.9,587.0C782.4,585.6 780.6,585.3 779.8,583.6C778.9,581.9 778.0,578.3 778.9,576.9Z" fill="#006f96"/>
<path d="M680.3,525.1C681.4,524.5 685.6,527.3 687.0,530.1C688.4,532.9 689.2,539.6 688.6,541.8C688.1,544.0 685.0,544.9 683.6,543.5C682.2,542.1 680.8,536.5 680.3,533.4C679.7,530.4 679.2,525.6 680.3,525.1Z" fill="#006f96"/>
<path d="M656.9,521.7C658.2,521.2 661.6,524.8 661.9,526.8C662.2,528.7 659.9,532.9 658.5,533.4C657.1,534.0 653.8,532.1 653.5,530.1C653.2,528.1 655.5,522.3 656.9,521.7Z" fill="#006f96"/>
<path d="M646.8,566.9C647.7,566.3 649.9,568.6 650.2,570.2C650.4,571.9 649.3,576.4 648.5,576.9C647.7,577.5 645.4,575.3 645.2,573.6C644.9,571.9 646.0,567.4 646.8,566.9Z" fill="#006f96"/>
<path d="M663.5,580.3C665.2,580.0 672.2,582.5 673.6,583.6C675.0,584.7 673.6,586.7 671.9,587.0C670.2,587.2 664.9,586.4 663.5,585.3C662.2,584.2 661.9,580.5 663.5,580.3Z" fill="#006f96"/>
<path d="M743.8,506.7C744.6,506.1 748.3,510.9 748.8,513.4C749.4,515.9 748.0,521.2 747.2,521.7C746.3,522.3 744.4,519.2 743.8,516.7C743.3,514.2 743.0,507.2 743.8,506.7Z" fill="#006f96"/>
<path d="M667.0,635.0C668.7,637.0 673.7,638.6 677.1,640.0C680.4,641.4 684.3,641.7 687.1,643.4C689.9,645.1 692.1,647.3 693.8,650.1C695.5,652.9 695.7,657.3 697.1,660.1C698.5,662.9 699.9,665.4 702.1,666.8C704.4,668.2 707.4,667.3 710.5,668.5C713.6,669.6 718.3,671.8 720.5,673.5C722.8,675.2 723.9,676.5 723.9,678.5C723.9,680.4 722.8,683.2 720.5,685.2C718.3,687.1 713.8,689.1 710.5,690.2C707.2,691.3 703.3,692.2 700.5,691.9C697.7,691.6 695.7,690.2 693.8,688.5C691.8,686.9 690.4,684.1 688.8,681.8C687.1,679.6 685.7,677.1 683.7,675.2C681.8,673.2 678.7,672.1 677.1,670.1C675.4,668.2 674.8,666.0 673.7,663.4C672.6,660.9 671.5,657.9 670.4,655.1C669.3,652.3 668.7,649.2 667.0,646.7C665.4,644.2 663.1,642.0 660.3,640.0C657.5,638.1 653.1,637.0 650.3,635.0C647.5,633.1 640.8,629.4 643.6,628.3C646.4,627.2 663.1,627.2 667.0,628.3C670.9,629.4 665.4,633.1 667.0,635.0Z" fill="#006f96"/>
<path d="M575.1,636.7C575.3,635.7 576.7,634.2 578.4,633.3C580.1,632.5 582.6,631.7 585.1,631.7C587.6,631.7 591.2,632.5 593.4,633.3C595.7,634.2 596.2,636.0 598.5,636.7C600.7,637.4 604.6,637.0 606.8,637.5C609.1,638.1 610.9,639.1 611.8,640.0C612.8,641.0 613.2,642.4 612.7,643.4C612.1,644.4 610.3,645.3 608.5,645.9C606.7,646.4 603.8,646.9 601.8,646.7C599.9,646.6 598.7,645.9 596.8,645.1C594.8,644.2 592.3,642.5 590.1,641.7C587.9,640.9 585.6,640.5 583.4,640.0C581.2,639.6 578.1,639.8 576.7,639.2C575.3,638.6 574.8,637.7 575.1,636.7Z" fill="#007f7f"/>
<path d="M790.0,473.7C790.5,472.0 792.0,468.7 793.4,467.0C794.8,465.3 796.4,463.6 798.4,463.6C800.3,463.6 803.4,465.9 805.1,467.0C806.8,468.1 808.4,469.2 808.4,470.3C808.4,471.4 806.5,472.8 805.1,473.7C803.7,474.5 801.7,474.7 800.1,475.4C798.4,476.0 796.6,477.6 795.1,477.9C793.5,478.1 791.7,477.7 790.9,477.0C790.0,476.3 789.6,475.4 790.0,473.7Z" fill="#006f96"/>
<path d="M816.0,461.1C817.1,460.0 821.5,458.6 823.5,458.6C825.4,458.6 827.0,458.6 827.7,461.1C828.4,463.6 828.1,471.0 827.7,473.7C827.2,476.3 826.1,477.6 825.2,477.0C824.2,476.5 823.2,472.3 821.8,470.3C820.4,468.4 817.8,466.9 816.8,465.3C815.8,463.8 814.8,462.3 816.0,461.1Z" fill="#006f96"/>
<path d="M819.3,478.7C820.7,477.4 823.3,476.7 824.3,477.9C825.3,479.0 825.6,483.0 825.2,485.4C824.7,487.8 823.1,490.7 821.8,492.1C820.6,493.5 818.9,494.2 817.6,493.7C816.4,493.3 814.6,491.0 814.3,489.6C814.0,488.2 815.1,487.2 816.0,485.4C816.8,483.6 817.9,479.9 819.3,478.7Z" fill="#006f96"/>
<path d="M783.5,526.8C783.8,525.8 784.9,524.8 786.0,525.1C787.1,525.4 788.9,526.8 790.2,528.5C791.5,530.1 792.8,533.2 793.5,535.2C794.2,537.1 794.8,539.5 794.4,540.2C794.0,540.9 792.3,540.2 791.0,539.3C789.8,538.5 788.0,536.5 786.9,535.2C785.7,533.8 784.9,532.4 784.3,531.0C783.8,529.6 783.2,527.8 783.5,526.8Z" fill="#008a62"/>
<path d="M778.5,578.6C779.0,577.3 780.4,576.2 781.8,575.6C783.2,575.1 785.3,574.9 786.9,575.3C788.4,575.6 790.2,576.4 791.0,577.8C791.9,579.2 792.2,581.8 791.9,583.6C791.6,585.5 789.9,587.0 789.4,588.7C788.8,590.3 789.5,592.6 788.5,593.7C787.6,594.8 784.9,594.5 783.5,595.4C782.1,596.2 780.4,597.6 780.2,598.7C779.9,599.8 780.7,600.9 781.8,602.0C783.0,603.2 784.9,604.3 786.9,605.4C788.8,606.5 791.3,608.3 793.5,608.7C795.8,609.1 798.8,607.6 800.2,607.9C801.6,608.2 802.2,609.4 801.9,610.4C801.6,611.4 800.2,613.3 798.6,613.7C796.9,614.2 794.1,613.7 791.9,612.9C789.6,612.1 787.1,610.3 785.2,608.7C783.2,607.2 781.4,605.4 780.2,603.7C778.9,602.0 777.8,600.4 777.7,598.7C777.5,597.0 778.8,595.5 779.3,593.7C779.9,591.9 781.1,589.5 781.0,587.8C780.9,586.2 779.2,585.2 778.8,583.6C778.4,582.1 778.0,580.0 778.5,578.6Z" fill="#006f96"/>
<path d="M643.3,461.0C645.3,459.6 649.9,460.8 652.7,462.2C655.4,463.5 658.1,466.4 659.7,469.2C661.2,471.9 661.2,475.6 662.0,478.5C662.8,481.4 662.8,484.9 664.3,486.7C665.9,488.4 668.6,489.0 671.3,489.0C674.1,489.0 678.3,486.1 680.7,486.7C683.0,487.2 684.2,490.2 685.3,492.5C686.5,494.8 687.7,498.5 687.7,500.7C687.7,502.8 686.9,505.3 685.3,505.3C683.8,505.3 680.9,502.4 678.3,500.7C675.8,498.9 672.7,496.0 670.2,494.8C667.6,493.7 665.3,494.2 663.2,493.7C661.0,493.1 659.5,492.5 657.3,491.3C655.2,490.2 652.7,487.8 650.3,486.7C648.0,485.5 645.1,485.7 643.3,484.3C641.6,483.0 640.2,480.8 639.8,478.5C639.4,476.2 640.4,473.2 641.0,470.3C641.6,467.4 641.4,462.4 643.3,461.0Z" fill="#00a01e"/>
<path d="M687.7,493.7C689.8,492.1 697.0,493.3 699.3,491.3C701.7,489.4 700.1,483.9 701.7,482.0C703.2,480.1 706.9,478.9 708.7,479.7C710.4,480.4 711.4,484.1 712.2,486.7C712.9,489.2 712.6,492.3 713.3,494.8C714.1,497.4 715.5,499.3 716.8,501.8C718.2,504.4 719.6,507.9 721.5,510.0C723.4,512.1 726.6,512.7 728.5,514.7C730.4,516.6 732.2,518.9 733.2,521.7C734.1,524.4 734.5,528.1 734.3,531.0C734.1,533.9 733.6,536.1 732.0,539.2C730.4,542.3 730.1,547.9 725.0,549.7C719.9,551.4 705.8,551.6 701.7,549.7C697.6,547.7 701.7,541.5 700.5,538.0C699.3,534.5 696.4,531.8 694.7,528.7C692.9,525.6 691.2,522.4 690.0,519.3C688.8,516.2 688.2,513.1 687.7,510.0C687.1,506.9 686.5,503.4 686.5,500.7C686.5,497.9 685.5,495.2 687.7,493.7Z" fill="#00a01e"/>
<path d="M699.3,438.8C697.4,440.6 700.7,446.2 701.7,449.3C702.6,452.4 703.4,455.2 705.2,457.5C706.9,459.8 709.6,461.8 712.2,463.3C714.7,464.9 717.4,465.9 720.3,466.8C723.2,467.8 727.7,469.8 729.7,469.2C731.6,468.6 731.8,466.2 732.0,463.3C732.2,460.4 731.4,454.6 730.8,451.7C730.2,448.8 730.2,447.2 728.5,445.8C726.8,444.5 722.9,444.7 720.3,443.5C717.8,442.3 716.8,439.6 713.3,438.8C709.8,438.1 701.3,437.1 699.3,438.8Z" fill="#007f7f"/>
<path d="M629.3,489.0C630.0,487.8 633.4,487.2 635.2,487.8C636.9,488.4 639.2,490.9 639.8,492.5C640.5,494.1 640.0,496.2 639.2,497.2C638.5,498.1 636.5,498.7 635.2,498.3C633.8,497.9 632.1,496.4 631.1,494.8C630.1,493.3 628.7,490.2 629.3,489.0Z" fill="#007f7f"/>
<path d="M646.2,491.3C646.8,490.3 649.8,489.5 651.5,489.6C653.2,489.7 655.2,490.8 656.2,491.9C657.1,493.0 657.9,495.1 657.3,496.0C656.8,496.9 654.2,497.2 652.7,497.2C651.1,497.2 649.1,497.0 648.0,496.0C646.9,495.0 645.7,492.4 646.2,491.3Z" fill="#007f7f"/>
<path d="M629.3,508.8C630.1,508.2 633.2,508.2 635.2,508.8C637.1,509.4 639.6,511.0 641.0,512.3C642.4,513.7 643.5,515.8 643.3,517.0C643.1,518.2 641.4,519.5 639.8,519.3C638.3,519.1 635.6,517.0 634.0,515.8C632.4,514.7 631.3,513.5 630.5,512.3C629.7,511.2 628.6,509.4 629.3,508.8Z" fill="#007f7f"/>
<path d="M649.2,512.3C650.1,511.2 653.1,511.0 655.0,510.0C656.9,509.0 659.3,507.3 660.8,506.5C662.4,505.7 663.0,505.5 664.3,505.3C665.7,505.1 667.8,504.6 669.0,505.3C670.2,506.1 670.6,508.4 671.3,510.0C672.1,511.6 672.5,514.3 673.7,514.7C674.8,515.1 676.8,512.5 678.3,512.3C679.9,512.1 681.4,513.1 683.0,513.5C684.6,513.9 686.5,513.3 687.7,514.7C688.8,516.0 689.4,518.9 690.0,521.7C690.6,524.4 690.8,527.9 691.2,531.0C691.6,534.1 691.8,537.2 692.3,540.3C692.9,543.4 702.8,548.1 694.7,549.7C686.5,551.2 651.5,551.2 643.3,549.7C635.2,548.1 644.7,543.1 645.7,540.3C646.6,537.6 648.2,536.1 649.2,533.3C650.1,530.6 651.5,526.7 651.5,524.0C651.5,521.3 649.6,518.9 649.2,517.0C648.8,515.1 648.2,513.5 649.2,512.3Z" fill="#007f7f"/>
<path d="M619.0,602.0C619.7,601.2 622.1,602.6 624.0,603.7C625.8,604.8 629.0,606.5 630.0,608.7C631.0,610.9 631.0,616.2 630.0,617.1C629.0,617.9 625.7,615.1 624.0,613.7C622.3,612.3 620.6,610.6 619.8,608.7C619.0,606.7 618.3,602.8 619.0,602.0Z" fill="#006f96"/>
<path d="M585.5,613.7C585.8,613.0 588.0,612.5 588.9,612.9C589.7,613.3 590.8,615.5 590.5,616.2C590.3,616.9 588.0,617.5 587.2,617.1C586.4,616.6 585.2,614.4 585.5,613.7Z" fill="#006f96"/>
<path d="M693.6,503.3C694.5,500.6 697.8,498.6 700.3,498.3C702.8,498.0 706.2,500.0 708.7,501.7C711.2,503.3 713.4,506.1 715.4,508.4C717.3,510.6 718.5,513.1 720.4,515.1C722.4,517.0 725.1,517.8 727.1,520.1C729.0,522.3 731.8,525.9 732.1,528.4C732.4,530.9 730.2,533.2 728.8,535.1C727.4,537.1 725.4,538.2 723.7,540.1C722.1,542.1 720.4,544.6 718.7,546.8C717.1,549.1 715.4,552.4 713.7,553.5C712.0,554.6 710.1,554.9 708.7,553.5C707.3,552.1 706.5,547.9 705.4,545.2C704.2,542.4 703.1,540.1 702.0,536.8C700.9,533.4 699.8,528.7 698.7,525.1C697.5,521.5 696.2,518.7 695.3,515.1C694.5,511.4 692.8,506.1 693.6,503.3Z" fill="#00a01e"/>
<path d="M656.9,635.5C658.2,634.3 664.4,633.2 666.9,633.8C669.4,634.3 671.3,636.8 671.9,638.8C672.5,640.7 671.6,644.4 670.2,645.5C668.8,646.6 665.5,646.3 663.5,645.5C661.6,644.6 659.6,642.1 658.5,640.5C657.4,638.8 655.5,636.6 656.9,635.5Z" fill="#0057ae"/>
<path d="M738.8,550.2C739.4,549.2 743.0,547.7 745.5,546.0C748.0,544.3 751.3,542.2 753.8,540.1C756.4,538.0 758.7,535.0 760.5,533.4C762.3,531.9 763.7,530.8 764.7,530.9C765.7,531.1 766.5,532.7 766.4,534.3C766.2,535.8 765.4,538.3 763.9,540.1C762.3,541.9 759.7,543.6 757.2,545.2C754.7,546.7 751.3,548.2 748.8,549.3C746.3,550.4 743.8,551.7 742.1,551.8C740.5,552.0 738.2,551.1 738.8,550.2Z" fill="#0057ae"/>
<path d="M780.6,578.6C781.3,577.7 784.2,577.0 785.6,577.3C787.0,577.5 788.5,578.9 789.0,580.3C789.4,581.6 789.0,584.3 788.1,585.3C787.3,586.3 785.1,586.5 783.9,586.1C782.8,585.7 782.0,584.0 781.4,582.8C780.9,581.5 779.9,579.5 780.6,578.6Z" fill="#0057ae"/>
<path d="M643.6,628.3C646.1,629.4 650.3,633.3 653.6,635.0C657.0,636.7 660.9,637.0 663.7,638.4C666.5,639.8 669.0,641.4 670.4,643.4C671.8,645.3 672.3,648.4 672.0,650.1C671.8,651.7 670.4,654.0 668.7,653.4C667.0,652.9 664.5,649.0 662.0,646.7C659.5,644.5 656.4,642.0 653.6,640.0C650.9,638.1 647.8,637.0 645.3,635.0C642.8,633.1 638.9,629.4 638.6,628.3C638.3,627.2 641.1,627.2 643.6,628.3Z" fill="#0057ae"/>
<path d="M780.2,579.5C781.0,578.4 783.7,577.0 785.2,577.0C786.7,577.0 788.6,578.2 789.4,579.5C790.1,580.7 790.3,583.1 789.9,584.5C789.4,585.9 788.1,587.4 786.9,587.8C785.7,588.2 783.8,587.7 782.7,587.0C781.6,586.3 780.6,584.9 780.2,583.6C779.7,582.4 779.3,580.6 780.2,579.5Z" fill="#0057ae"/>
<path d="M781.8,597.0C782.8,596.9 784.9,599.8 786.9,601.2C788.8,602.6 791.6,604.0 793.5,605.4C795.5,606.8 798.6,608.7 798.6,609.6C798.6,610.4 795.5,610.8 793.5,610.4C791.6,610.0 788.9,608.5 786.9,607.1C784.8,605.7 781.8,603.7 781.0,602.0C780.2,600.4 780.9,597.2 781.8,597.0Z" fill="#0057ae"/>
<path d="M669.0,470.3C670.0,469.1 673.3,467.6 676.0,467.4C678.7,467.2 682.6,468.1 685.3,469.2C688.1,470.2 691.6,472.1 692.3,473.8C693.1,475.6 691.6,478.5 690.0,479.7C688.4,480.8 685.5,481.0 683.0,480.8C680.5,480.6 677.0,479.5 674.8,478.5C672.7,477.5 671.1,476.4 670.2,475.0C669.2,473.6 668.0,471.6 669.0,470.3Z" fill="#008a62"/>
<path d="M655.0,524.0C655.8,523.2 658.1,524.8 658.5,526.3C658.9,527.9 658.1,532.6 657.3,533.3C656.6,534.1 654.2,532.6 653.8,531.0C653.4,529.4 654.2,524.8 655.0,524.0Z" fill="#006f96"/>
<path d="M680.7,519.3C681.6,518.6 684.2,519.7 685.3,521.7C686.5,523.6 687.1,527.9 687.7,531.0C688.2,534.1 689.2,537.2 688.8,540.3C688.4,543.4 686.7,548.1 685.3,549.7C684.0,551.2 681.2,552.0 680.7,549.7C680.1,547.3 682.0,539.6 681.8,535.7C681.6,531.8 679.7,529.1 679.5,526.3C679.3,523.6 679.7,520.1 680.7,519.3Z" fill="#006f96"/>
<path d="M695.3,503.3C696.6,501.8 700.9,500.3 703.7,500.8C706.5,501.4 709.8,504.3 712.0,506.7C714.3,509.1 715.1,512.5 717.1,515.1C719.0,517.6 722.4,519.5 723.7,521.7C725.1,524.0 726.0,526.9 725.4,528.4C724.9,530.0 722.4,531.1 720.4,530.9C718.5,530.8 715.9,529.1 713.7,527.6C711.5,526.1 709.3,523.6 707.0,521.7C704.8,519.9 702.1,518.7 700.3,516.7C698.5,514.8 697.0,512.3 696.2,510.0C695.3,507.8 694.1,504.9 695.3,503.3Z" fill="#00b414"/>
<path d="M692.3,500.7C693.9,499.3 698.9,499.1 701.7,499.5C704.4,499.9 706.7,501.2 708.7,503.0C710.6,504.8 712.0,507.9 713.3,510.0C714.7,512.1 715.3,514.5 716.8,515.8C718.4,517.2 720.9,517.2 722.7,518.2C724.4,519.1 726.4,519.9 727.3,521.7C728.3,523.4 728.9,526.9 728.5,528.7C728.1,530.4 726.8,531.4 725.0,532.2C723.2,532.9 720.1,533.5 718.0,533.3C715.9,533.1 714.1,532.4 712.2,531.0C710.2,529.6 708.3,526.9 706.3,525.2C704.4,523.4 702.2,522.2 700.5,520.5C698.8,518.8 697.2,516.8 695.8,514.7C694.5,512.5 692.9,510.0 692.3,507.7C691.8,505.3 690.8,502.0 692.3,500.7Z" fill="#00b414"/>
</g>
<path d="M41.56,116.0 H1134.5 M41.56,186.3 H1134.5 M41.56,256.6 H1134.5 M41.56,326.8 H1134.5 M41.56,397.1 H1134.5 M41.56,467.4 H1134.5 M41.56,537.7 H1134.5 M41.56,607.9 H1134.5 M41.56,678.2 H1134.5 M41.56,748.5 H1134.5 M41.56,818.8 H1134.5 M41.56,889.0 H1134.5" fill="none" stroke="#b4b4b4" stroke-width="1.5" stroke-dasharray="2.6 7.22"/>
<path d="M131.3,106.20 V900.0 M248.6,106.20 V900.0 M365.8,106.20 V900.0 M483.1,106.20 V900.0 M600.3,106.20 V900.0 M717.5,106.20 V900.0 M834.8,106.20 V900.0 M952.0,106.20 V900.0 M1069.3,106.20 V900.0" fill="none" stroke="#b4b4b4" stroke-width="1.5" stroke-dasharray="2.6 7.22"/>
<path d="M28,116.0 h2.4 M28,186.3 h2.4 M28,256.6 h2.4 M28,326.8 h2.4 M28,397.1 h2.4 M28,467.4 h2.4 M28,537.7 h2.4 M28,607.9 h2.4 M28,678.2 h2.4 M28,748.5 h2.4 M28,818.8 h2.4 M28,889.0 h2.4 M131.3,904.3 v2.2 M248.6,904.3 v2.2 M365.8,904.3 v2.2 M483.1,904.3 v2.2 M600.3,904.3 v2.2 M717.5,904.3 v2.2 M834.8,904.3 v2.2 M952.0,904.3 v2.2 M1069.3,904.3 v2.2" fill="none" stroke="#b0b0b0" stroke-width="1.6"/>
<g clip-path="url(#pc)" fill="none" stroke="#fff" stroke-width="1.3" stroke-linejoin="round" stroke-linecap="round">
<path d="M360.5,430.0C360.8,427.5 361.4,424.4 363.0,422.5C364.6,420.6 367.2,419.5 370.0,418.8C372.8,418.0 377.1,417.6 380.0,418.0C382.9,418.4 385.8,419.5 387.5,421.2C389.2,423.0 389.8,426.2 390.0,428.8C390.2,431.2 390.0,434.0 388.8,436.2C387.5,438.5 385.0,440.5 382.5,442.0C380.0,443.5 376.5,444.8 373.8,445.0C371.0,445.2 368.3,444.2 366.2,443.0C364.2,441.8 362.2,439.7 361.2,437.5C360.3,435.3 360.2,432.5 360.5,430.0Z"/>
<path d="M321.2,513.8C319.8,512.7 315.2,510.2 312.5,507.5C309.8,504.8 307.1,501.0 305.0,497.5C302.9,494.0 301.3,489.6 300.0,486.2C298.7,482.9 297.6,480.2 297.0,477.5C296.4,474.8 296.2,472.9 296.2,470.0C296.3,467.1 296.2,462.9 297.5,460.0C298.8,457.1 301.0,454.3 303.8,452.5C306.5,450.7 310.2,449.5 313.8,449.2C317.3,449.0 321.0,450.3 325.0,451.2C329.0,452.2 333.3,453.5 337.5,455.0C341.7,456.5 346.2,458.1 350.0,460.0C353.8,461.9 357.1,463.8 360.0,466.2C362.9,468.8 365.6,471.9 367.5,475.0C369.4,478.1 370.8,481.7 371.2,485.0C371.7,488.3 371.0,491.9 370.0,495.0C369.0,498.1 366.9,501.2 365.0,503.8C363.1,506.2 359.8,509.0 358.8,510.0"/>
<path d="M123.6,102.0C122.5,102.6 119.2,104.0 117.0,105.4C114.7,106.7 112.2,108.3 110.3,110.1C108.3,111.8 106.8,113.4 105.3,115.9C103.7,118.4 102.7,122.0 101.1,125.1C99.4,128.2 96.8,131.2 95.2,134.3C93.6,137.4 92.4,140.4 91.5,143.5C90.6,146.6 90.0,149.6 89.9,152.7C89.7,155.8 90.1,158.7 90.5,161.9C91.0,165.1 91.9,168.6 92.7,171.9C93.5,175.3 94.4,178.8 95.2,182.0C96.1,185.2 96.6,188.1 97.7,191.2C98.8,194.2 100.4,197.7 101.9,200.4C103.4,203.0 105.3,205.4 106.9,207.0C108.6,208.7 110.6,209.1 111.9,210.4C113.3,211.6 114.3,212.6 114.9,214.6C115.6,216.5 115.6,219.4 115.8,222.1C116.0,224.7 115.9,227.9 116.1,230.5C116.3,233.0 116.8,235.2 117.0,237.1C117.1,239.1 116.8,242.0 117.0,242.2C117.1,242.4 117.9,238.2 117.7,238.4C117.6,238.6 117.0,241.4 116.1,243.4C115.1,245.3 113.4,248.1 111.9,250.1C110.3,252.0 108.4,253.6 106.9,255.1C105.3,256.6 103.5,258.0 102.7,259.3C101.8,260.5 101.7,261.6 101.8,262.6C102.0,263.6 102.5,264.9 103.5,265.5C104.5,266.0 105.7,266.3 107.7,266.0C109.6,265.6 112.8,264.1 115.2,263.1C117.6,262.1 120.4,260.7 121.9,259.8C123.4,258.8 124.0,258.0 124.4,257.6"/>
<path d="M148.7,248.4C149.0,248.8 150.7,249.6 150.8,250.9C151.0,252.2 150.3,254.1 149.5,255.9C148.7,257.7 147.2,259.9 146.2,261.8C145.1,263.6 144.3,265.9 143.3,267.1C142.3,268.4 140.9,268.4 140.3,269.3C139.7,270.2 139.5,271.7 140.0,272.6C140.4,273.6 141.4,274.7 142.8,275.2C144.3,275.6 146.9,275.2 148.7,275.5C150.5,275.8 152.1,276.2 153.7,276.8C155.2,277.5 156.6,279.1 157.9,279.3C159.1,279.6 160.1,279.2 161.2,278.5C162.3,277.8 163.7,275.3 164.5,275.2C165.4,275.0 166.1,276.3 166.6,277.7C167.1,279.1 167.1,281.8 167.6,283.5C168.1,285.2 168.5,286.9 169.6,287.7C170.6,288.5 172.2,287.9 173.7,288.5C175.3,289.2 177.1,290.6 178.8,291.5C180.4,292.5 181.8,293.5 183.8,294.4C185.7,295.2 188.2,295.9 190.5,296.6C192.7,297.3 195.2,297.8 197.2,298.6C199.1,299.3 201.1,300.0 202.2,301.1C203.2,302.2 203.4,303.7 203.5,305.3C203.7,306.8 203.5,308.9 203.0,310.3C202.5,311.7 201.6,312.8 200.5,313.6C199.4,314.4 197.6,314.9 196.3,315.3C195.1,315.7 193.7,315.6 193.0,316.1C192.3,316.7 192.2,317.4 192.1,318.6C192.1,319.9 192.3,322.1 192.5,323.6C192.6,325.2 192.3,326.6 193.0,327.8C193.6,329.1 195.6,329.9 196.3,331.2C197.0,332.4 196.6,334.4 197.2,335.4C197.7,336.3 198.7,337.3 199.7,337.0C200.6,336.7 202.2,335.1 203.0,333.7C203.8,332.3 204.1,330.6 204.7,328.7C205.2,326.7 205.5,324.2 206.4,322.0C207.2,319.7 209.0,317.5 209.7,315.3C210.4,313.1 210.2,310.4 210.5,308.6C210.9,306.8 211.2,305.4 211.9,304.7C212.6,304.1 213.5,304.2 214.7,304.7C215.9,305.3 217.4,307.1 218.9,307.8C220.4,308.4 222.5,308.2 223.9,308.6C225.3,309.0 226.6,309.4 227.3,310.3C227.9,311.1 228.0,312.2 227.6,313.6C227.2,315.0 225.6,316.7 224.7,318.6C223.9,320.6 222.7,323.4 222.2,325.3C221.8,327.3 221.8,328.7 222.2,330.3C222.7,332.0 223.5,333.8 224.7,335.4C226.0,336.9 228.5,338.7 229.8,339.5C231.0,340.4 231.4,340.8 232.3,340.4C233.1,339.9 233.9,338.0 234.8,337.0C235.6,336.0 236.3,334.7 237.3,334.5C238.3,334.4 239.4,335.2 240.6,336.2C241.9,337.2 243.8,338.8 244.8,340.4C245.8,341.9 246.1,343.9 246.5,345.4C246.9,346.9 247.2,348.9 247.3,349.6"/>
<path d="M263.2,364.9C263.8,365.7 265.9,369.7 266.9,369.5C267.9,369.2 268.3,364.0 269.4,363.6C270.5,363.2 272.2,365.6 273.6,367.0C275.0,368.4 276.4,370.6 277.8,372.0C279.2,373.3 279.8,374.4 281.9,375.0C284.0,375.6 287.9,375.0 290.3,375.7C292.7,376.3 294.5,377.5 296.2,378.7C297.8,379.9 299.5,381.2 300.3,382.8C301.2,384.5 300.8,387.2 301.2,388.7C301.6,390.2 302.1,391.8 302.8,392.0C303.5,392.3 304.8,391.6 305.4,390.4C305.9,389.1 305.6,386.3 306.2,384.5C306.7,382.7 307.2,381.0 308.7,379.5C310.2,378.0 313.6,376.4 315.4,375.3C317.2,374.2 318.6,373.8 319.6,372.8C320.5,371.8 321.2,370.6 321.2,369.5C321.2,368.4 320.3,367.1 319.6,366.1C318.9,365.1 317.5,364.6 317.1,363.6C316.6,362.6 316.6,361.4 317.1,360.3C317.5,359.2 318.6,357.4 319.6,356.9C320.5,356.4 322.1,356.4 322.9,357.3C323.7,358.1 323.9,360.3 324.6,361.9C325.3,363.6 326.0,365.0 327.1,367.0C328.2,368.9 330.2,371.4 331.3,373.6C332.4,375.9 332.8,378.8 333.8,380.3C334.8,381.9 336.1,382.8 337.1,382.8C338.1,382.8 338.8,381.6 339.6,380.3C340.5,379.1 341.4,377.3 342.1,375.3C342.9,373.4 344.0,371.1 344.1,368.6C344.3,366.1 343.6,362.8 343.0,360.3C342.4,357.8 341.6,355.0 340.5,353.6C339.4,352.1 337.5,351.6 336.3,351.6C335.0,351.6 333.8,352.5 332.9,353.6C332.1,354.6 331.7,358.0 331.3,357.8C330.8,357.5 331.1,353.6 330.1,351.9C329.1,350.2 327.0,349.1 325.4,347.7C323.8,346.3 322.1,345.4 320.4,343.5C318.7,341.7 316.9,339.4 315.4,336.9C313.9,334.3 312.4,331.6 311.2,328.5C310.0,325.4 309.1,322.1 308.4,318.5C307.7,314.8 307.1,310.9 307.0,306.8C306.9,302.6 307.4,297.8 307.9,293.4C308.3,288.9 309.4,280.1 309.5,280.0C309.7,279.9 308.8,292.9 308.8,292.5C308.7,292.1 308.9,281.2 309.5,277.5C310.1,273.8 311.2,272.3 312.5,270.0C313.8,267.7 316.7,264.8 317.5,263.8"/>
<path d="M53.3,260.1C54.3,258.7 56.4,258.4 58.4,258.4C60.3,258.4 63.3,259.0 65.1,260.1C66.8,261.2 68.3,263.2 68.7,265.1C69.1,267.1 68.1,269.6 67.6,271.8C67.0,274.0 65.7,276.3 65.4,278.5C65.0,280.7 65.7,283.4 65.4,285.2C65.1,287.0 64.5,288.8 63.4,289.4C62.2,289.9 59.9,289.2 58.4,288.5C56.8,287.8 55.1,286.6 54.2,285.2C53.3,283.8 53.3,283.2 53.0,280.2C52.8,277.1 52.6,270.1 52.7,266.8C52.7,263.4 52.4,261.5 53.3,260.1Z"/>
<path d="M172.9,328.7C174.6,328.7 178.1,329.4 179.6,330.3C181.1,331.3 181.8,332.6 181.8,334.5C181.8,336.5 179.7,339.7 179.6,342.0C179.5,344.4 181.7,347.3 181.3,348.7C180.9,350.2 178.9,350.5 177.1,350.7C175.3,351.0 172.4,349.9 170.4,350.4C168.5,350.9 167.1,352.6 165.4,353.7C163.7,354.9 161.5,357.3 160.4,357.4C159.2,357.6 158.5,355.8 158.4,354.6C158.2,353.4 158.5,352.2 159.5,350.4C160.6,348.6 163.3,346.2 164.5,343.7C165.8,341.2 166.2,337.6 167.1,335.4C167.9,333.1 168.6,331.4 169.6,330.3C170.5,329.2 171.2,328.7 172.9,328.7Z"/>
<path d="M137.0,354.6C137.7,353.5 140.9,352.9 142.8,352.9C144.8,352.9 147.5,353.7 148.7,354.6C149.9,355.4 150.3,356.8 150.0,357.9C149.7,359.0 148.3,360.5 147.0,361.3C145.7,362.1 143.4,362.9 142.0,362.6C140.5,362.3 139.1,360.9 138.3,359.6C137.5,358.3 136.2,355.7 137.0,354.6Z"/>
<path d="M128.6,276.8C129.7,275.6 131.7,274.8 132.8,274.8C133.9,274.8 135.1,275.8 135.3,276.8C135.4,277.9 134.4,279.6 133.6,281.0C132.8,282.4 131.4,284.5 130.3,285.2C129.1,285.8 127.3,285.4 126.6,284.8C125.9,284.3 125.8,283.5 126.1,282.2C126.4,280.8 127.5,278.0 128.6,276.8Z"/>
<path d="M184.6,364.6C185.7,364.0 188.7,364.1 190.5,365.1C192.3,366.1 193.8,368.7 195.5,370.5C197.2,372.2 199.4,374.1 200.5,375.5C201.6,376.9 201.8,376.7 202.0,378.7C202.2,380.6 201.4,384.2 201.7,387.0C201.9,389.8 202.4,393.0 203.3,395.4C204.3,397.8 206.5,399.7 207.5,401.2C208.5,402.8 209.3,403.6 209.2,404.6C209.1,405.6 207.8,407.1 206.7,407.1C205.6,407.1 203.6,405.7 202.5,404.6C201.4,403.5 200.9,404.3 200.0,400.4C199.1,396.5 198.5,384.9 197.2,381.3C195.8,377.7 194.0,380.1 192.1,378.8C190.3,377.6 187.7,375.5 186.3,373.8C184.9,372.1 184.1,370.3 183.8,368.8C183.5,367.3 183.5,365.2 184.6,364.6Z"/>
<path d="M248.5,317.6C249.2,316.6 250.8,315.5 251.8,315.5C252.9,315.5 254.3,316.3 254.8,317.6C255.4,319.0 255.4,321.7 255.2,323.5C255.0,325.3 254.5,327.5 253.8,328.5C253.1,329.5 251.9,329.9 251.0,329.7C250.1,329.4 249.1,328.1 248.5,326.8C247.9,325.5 247.3,323.3 247.3,321.8C247.3,320.3 247.7,318.7 248.5,317.6Z"/>
<path d="M253.5,349.4C253.0,348.8 250.9,347.2 250.2,346.1C249.4,344.9 248.6,343.6 248.8,342.7C249.1,341.8 250.5,340.8 251.8,340.5C253.2,340.3 255.3,340.4 256.9,341.0C258.4,341.7 260.0,343.1 261.0,344.4C262.1,345.6 262.8,347.9 263.2,348.6"/>
<path d="M239.6,382.0C240.1,381.2 241.7,380.3 242.6,380.3C243.6,380.4 244.8,381.5 245.2,382.3C245.5,383.2 245.4,384.6 244.8,385.4C244.3,386.1 242.7,386.7 241.8,386.7C240.9,386.6 240.0,385.8 239.6,385.0C239.3,384.2 239.1,382.8 239.6,382.0Z"/>
<path d="M247.7,382.8C248.2,381.4 249.9,381.0 251.0,380.8C252.1,380.7 253.7,381.0 254.3,382.0C255.0,383.0 254.4,385.1 254.8,387.0C255.3,389.0 256.4,392.0 256.9,393.7C257.3,395.4 258.1,396.3 257.7,397.1C257.3,397.8 255.6,398.7 254.3,398.4C253.1,398.1 251.3,396.9 250.2,395.4C249.1,393.9 248.1,391.6 247.7,389.5C247.2,387.4 247.1,384.3 247.7,382.8Z"/>
<path d="M269.9,382.0C270.5,381.1 272.7,380.1 273.6,380.0C274.4,379.9 275.1,380.9 274.9,381.7C274.7,382.4 273.0,383.9 272.2,384.5C271.5,385.1 270.6,385.8 270.2,385.4C269.8,384.9 269.3,382.9 269.9,382.0Z"/>
<path d="M322.9,380.3C323.3,379.1 325.2,377.5 326.3,377.3C327.3,377.2 328.3,378.3 329.1,379.5C329.9,380.7 331.2,383.0 331.3,384.5C331.4,386.0 330.4,387.8 329.6,388.4C328.8,388.9 327.2,388.5 326.3,387.9C325.3,387.2 324.3,385.8 323.7,384.5C323.2,383.3 322.5,381.5 322.9,380.3Z"/>
<path d="M234.3,403.7C234.9,402.4 236.4,400.9 237.6,400.4C238.9,399.9 240.7,399.9 241.8,400.7C242.9,401.6 244.0,403.5 244.3,405.4C244.6,407.3 244.0,410.3 243.5,412.1C242.9,413.9 241.9,415.5 241.0,416.3C240.0,417.1 238.7,417.2 237.6,416.8C236.6,416.4 235.4,415.1 234.8,413.8C234.2,412.4 234.0,410.4 233.9,408.8C233.9,407.1 233.7,405.1 234.3,403.7Z"/>
<path d="M221.4,418.8C222.0,418.0 223.6,417.3 225.1,417.5C226.5,417.6 228.7,418.6 230.1,419.6C231.5,420.7 233.0,422.4 233.4,423.8C233.9,425.2 233.4,427.2 232.6,428.0C231.8,428.8 229.8,428.9 228.4,428.5C227.0,428.1 225.4,426.5 224.2,425.5C223.1,424.4 222.2,423.3 221.7,422.1C221.3,421.0 220.8,419.6 221.4,418.8Z"/>
<path d="M200.0,299.2C200.7,299.4 201.9,300.5 202.5,301.7C203.1,303.0 203.7,304.8 203.7,306.8C203.7,308.7 203.1,312.1 202.5,313.4C201.9,314.8 200.8,315.4 200.0,315.1C199.2,314.8 198.4,313.4 198.0,311.8C197.6,310.1 197.4,306.9 197.5,305.1C197.5,303.3 197.9,301.9 198.3,300.9C198.7,299.9 199.3,299.1 200.0,299.2Z"/>
<path d="M227.6,331.5C227.6,331.0 230.4,330.2 230.9,330.5C231.4,330.8 231.2,333.3 230.6,333.5C230.0,333.7 227.5,332.0 227.6,331.5Z"/>
<path d="M226.8,351.1 L233.4,350.2"/>
<path d="M290.3,381.2 L294.0,380.3"/>
<path d="M266.7,643.3C268.1,643.5 272.3,644.1 275.1,644.4C277.9,644.8 280.7,645.6 283.4,645.3C286.2,645.0 289.0,643.7 291.8,642.8C294.6,641.9 297.7,640.9 300.2,639.9C302.7,639.0 305.0,638.1 306.9,636.9C308.7,635.7 309.8,634.0 311.0,632.7C312.3,631.5 313.1,630.3 314.4,629.4C315.6,628.5 316.8,627.8 318.6,627.2C320.4,626.6 323.0,626.1 325.3,625.7C327.5,625.3 330.3,625.2 331.9,624.9C333.6,624.5 334.4,624.3 335.3,623.5C336.1,622.8 337.0,621.6 337.0,620.2C337.0,618.8 335.3,616.4 335.3,615.2C335.3,613.9 336.1,612.7 337.0,612.7C337.8,612.7 338.9,614.2 340.3,615.2C341.7,616.2 343.4,617.4 345.3,618.5C347.3,619.6 350.1,620.9 352.0,621.9C354.0,622.8 355.8,623.3 357.0,624.4C358.3,625.5 358.7,627.5 359.5,628.6C360.4,629.6 360.9,630.4 362.0,630.6C363.2,630.7 365.1,630.0 366.2,629.4C367.3,628.8 368.2,628.0 368.7,626.9C369.3,625.8 369.1,624.0 369.6,622.7C370.0,621.5 370.4,620.2 371.2,619.4C372.1,618.5 373.0,618.0 374.6,617.7C376.1,617.4 378.3,617.3 380.4,617.4C382.5,617.4 384.9,618.0 387.1,618.2C389.4,618.4 392.1,618.1 393.8,618.5C395.5,618.9 396.5,619.6 397.2,620.5C397.8,621.5 397.9,623.4 397.5,624.4C397.1,625.4 395.5,626.0 394.6,626.6C393.8,627.1 392.0,627.3 392.1,627.7C392.3,628.2 394.6,628.7 395.5,629.4C396.3,630.1 397.3,630.8 397.2,631.9C397.0,633.0 395.5,634.4 394.6,636.1C393.8,637.8 392.8,640.1 392.1,641.9C391.4,643.8 391.2,645.7 390.5,647.0C389.8,648.2 389.1,648.9 388.0,649.5C386.8,650.0 384.7,649.7 383.8,650.3C382.9,650.9 382.3,652.1 382.4,652.8C382.6,653.5 383.6,654.4 384.6,654.5C385.7,654.6 387.3,653.6 388.8,653.3C390.3,653.0 391.9,652.8 393.8,652.8C395.8,652.9 398.3,653.2 400.5,653.6C402.7,654.1 405.1,654.7 407.2,655.3C409.3,655.9 411.6,656.5 413.0,657.3C414.4,658.2 415.0,659.1 415.6,660.3C416.1,661.5 415.8,663.4 416.4,664.5C416.9,665.6 417.4,666.4 418.9,667.0C420.4,667.7 424.5,668.1 425.6,668.4"/>
<path d="M311.5,616.9C311.7,615.2 313.4,612.6 314.4,611.0C315.4,609.4 316.5,608.1 317.7,607.2C319.0,606.2 320.4,604.9 321.9,605.2C323.4,605.4 325.1,607.2 326.9,608.5C328.7,609.7 331.7,611.4 332.8,612.7C333.9,613.9 334.3,615.2 333.6,616.0C332.9,616.9 330.3,616.9 328.6,617.7C326.9,618.5 325.5,620.1 323.6,621.0C321.6,622.0 318.6,623.2 316.9,623.2C315.2,623.2 314.1,622.1 313.2,621.0C312.3,620.0 311.3,618.5 311.5,616.9Z"/>
<path d="M358.7,633.6C359.2,632.4 360.6,632.4 361.2,633.2C361.8,634.1 362.3,636.7 362.4,638.6C362.5,640.5 362.2,643.3 361.7,644.4C361.2,645.6 360.1,646.3 359.5,645.6C359.0,644.9 358.5,642.3 358.4,640.3C358.2,638.3 358.2,634.7 358.7,633.6Z"/>
<path d="M363.7,650.3C364.3,649.4 365.5,648.4 367.1,649.0C368.6,649.5 371.1,652.3 372.9,653.6C374.7,655.0 376.9,655.9 377.9,657.0C379.0,658.1 379.2,658.8 379.1,660.3C379.0,661.9 378.0,664.8 377.1,666.2C376.2,667.5 375.0,668.5 373.7,668.4C372.5,668.2 370.8,666.7 369.6,665.4C368.3,664.0 367.2,662.1 366.2,660.3C365.2,658.5 364.1,656.2 363.7,654.5C363.3,652.8 363.2,651.2 363.7,650.3Z"/>
<path d="M345.0,655.3C345.6,654.2 346.9,652.1 347.8,652.0C348.7,651.8 349.6,652.8 350.3,654.5C351.1,656.2 352.2,659.9 352.3,662.0C352.5,664.1 351.9,666.2 351.2,667.0C350.4,667.9 348.8,667.7 347.8,667.0C346.9,666.3 345.9,664.2 345.3,662.8C344.7,661.4 344.2,659.9 344.1,658.7C344.1,657.4 344.4,656.4 345.0,655.3Z"/>
<path d="M385.5,707.2C386.0,706.2 388.5,704.9 390.5,703.8C392.4,702.8 394.9,701.5 397.2,700.8C399.4,700.1 402.0,699.7 403.8,699.6C405.7,699.6 407.3,699.9 408.0,700.5C408.7,701.0 408.9,702.1 408.0,703.0C407.2,703.8 404.7,704.6 403.0,705.5C401.3,706.4 399.9,707.8 398.0,708.5C396.0,709.2 393.1,709.5 391.3,709.7C389.5,709.8 388.1,709.7 387.1,709.3C386.1,708.9 384.9,708.1 385.5,707.2Z"/>
<path d="M121.6,438.5C120.5,438.7 117.1,439.4 115.3,440.1C113.4,440.9 111.5,441.8 110.2,443.1C109.0,444.5 108.5,446.2 107.7,448.5C106.9,450.8 106.4,453.8 105.6,456.9C104.7,459.9 103.5,463.5 102.7,466.9C102.0,470.2 101.3,473.6 101.0,476.9C100.8,480.3 100.7,483.6 101.0,487.0C101.4,490.3 102.2,493.6 103.2,497.0C104.2,500.3 105.2,503.4 106.9,507.0C108.6,510.6 111.1,514.8 113.6,518.7C116.1,522.6 119.2,526.8 121.9,530.4C124.7,534.1 127.5,537.3 130.3,540.5C133.1,543.7 137.3,548.1 138.7,549.7C140.1,551.3 137.3,549.0 138.7,550.0C140.1,551.0 144.3,554.0 147.1,555.9C149.8,557.7 152.6,558.5 155.4,560.9C158.2,563.2 161.3,567.0 163.8,570.1C166.3,573.1 168.9,575.9 170.5,579.3C172.1,582.6 172.9,586.4 173.5,590.1C174.1,593.9 174.4,597.7 174.1,601.8C173.9,606.0 173.3,611.0 172.1,615.2C171.0,619.4 169.1,623.2 167.1,626.9C165.2,630.7 162.9,634.7 160.4,637.8C157.9,640.9 154.9,643.2 152.1,645.3C149.3,647.4 146.5,648.7 143.7,650.3C140.9,652.0 137.7,653.5 135.4,655.4C133.0,657.2 131.4,659.0 129.5,661.2C127.5,663.4 124.6,667.5 123.6,668.7"/>
<path d="M144.5,441.0C145.2,441.6 147.0,443.0 148.7,444.8C150.4,446.6 152.3,449.7 154.5,451.8C156.8,454.0 159.1,456.1 162.1,457.7C165.0,459.3 168.5,460.6 172.1,461.5C175.7,462.5 179.9,462.9 183.8,463.2C187.7,463.5 191.6,463.3 195.5,463.2C199.4,463.1 203.9,462.7 207.2,462.7C210.6,462.8 213.1,462.8 215.6,463.5C218.1,464.2 220.0,465.2 222.3,466.9C224.5,468.6 227.0,471.1 229.0,473.6C230.9,476.1 232.6,478.9 234.0,481.9C235.4,485.0 236.3,488.9 237.3,492.0C238.3,495.0 239.3,499.0 240.0,500.3C240.7,501.7 240.8,497.6 241.2,500.0C241.7,502.4 243.1,508.8 242.5,515.0C241.9,521.2 239.6,530.4 237.5,537.5C235.4,544.6 231.5,551.2 230.0,557.5C228.5,563.8 229.4,569.2 228.8,575.0C228.1,580.8 227.1,587.1 226.2,592.5C225.4,597.9 224.2,602.9 223.8,607.5C223.3,612.1 223.3,615.8 223.8,620.0C224.2,624.2 225.0,629.2 226.2,632.5C227.5,635.8 229.0,638.3 231.2,640.0C233.5,641.7 238.5,642.1 240.0,642.5"/>
<path d="M123.6,668.7C122.8,669.8 120.3,672.9 118.6,675.4C117.0,677.9 115.3,681.0 113.6,683.8C111.9,686.6 110.3,689.4 108.6,692.1C106.9,694.9 105.0,698.4 103.6,700.5C102.2,702.6 101.8,702.8 100.2,705.0C98.7,707.2 94.7,711.0 94.2,713.8C93.8,716.5 95.7,718.8 97.5,721.2C99.3,723.8 102.1,726.7 105.0,728.8C107.9,730.8 111.7,732.5 115.0,733.8C118.3,735.0 122.3,735.7 125.0,736.2C127.7,736.8 128.8,737.0 131.2,737.0C133.8,737.0 136.5,736.7 140.0,736.2C143.5,735.8 148.3,735.3 152.5,734.5C156.7,733.7 161.7,732.3 165.0,731.2C168.3,730.2 171.2,728.5 172.5,728.0"/>
<path d="M123.6,668.7C124.2,669.6 125.6,672.2 127.0,673.7C128.4,675.3 129.8,677.0 132.0,677.9C134.2,678.9 137.3,679.1 140.4,679.6C143.4,680.1 147.1,680.4 150.4,680.8C153.7,681.2 157.1,681.7 160.4,682.1C163.8,682.5 167.7,683.0 170.5,683.3C173.3,683.6 175.7,683.6 177.2,683.8C178.6,684.0 179.2,683.9 179.3,684.6C179.5,685.3 178.6,686.7 178.0,688.0C177.4,689.2 176.2,690.6 175.5,692.1C174.8,693.7 174.0,695.5 173.8,697.2C173.7,698.8 174.5,700.2 174.6,702.2C174.8,704.1 174.9,707.7 175.0,708.8"/>
<path d="M123.6,668.7C123.1,667.8 122.0,665.4 120.3,662.9C118.6,660.4 116.1,657.2 113.6,653.7C111.1,650.2 108.0,645.9 105.3,642.0C102.5,638.1 99.4,633.5 96.9,630.3C94.4,627.1 91.4,624.6 90.2,622.7C89.0,620.9 90.1,618.4 89.9,619.4C89.6,620.4 89.1,625.4 88.9,628.6C88.6,631.8 88.6,636.0 88.2,638.6C87.8,641.3 87.3,643.1 86.5,644.5C85.7,645.8 84.7,646.7 83.5,646.7C82.3,646.7 80.9,645.4 79.3,644.5C77.8,643.6 75.8,642.3 74.3,641.1C72.8,640.0 71.4,639.0 70.1,637.8C68.9,636.6 67.6,634.4 66.8,633.9C66.0,633.5 65.5,634.4 65.5,635.3C65.4,636.2 65.8,638.3 66.5,639.5C67.1,640.6 68.0,641.3 69.3,642.3C70.6,643.3 72.5,644.1 74.3,645.3C76.1,646.5 78.6,648.1 80.2,649.5C81.7,650.9 82.7,651.9 83.5,653.7C84.3,655.5 84.5,658.1 84.8,660.4C85.2,662.6 85.6,665.1 85.5,667.1C85.4,669.0 85.0,670.7 84.3,672.1C83.7,673.5 82.6,674.3 81.8,675.4C81.1,676.5 80.2,678.2 79.8,678.8"/>
<path d="M61.8,682.6C61.5,682.2 60.7,681.6 60.1,680.4C59.5,679.2 58.7,677.4 58.1,675.4C57.5,673.5 57.3,671.2 56.8,668.7C56.3,666.2 55.6,662.7 55.1,660.4C54.5,658.0 53.7,655.5 53.4,654.5"/>
<path d="M88.2,616.6C88.2,615.8 89.0,614.4 89.4,614.4C89.8,614.4 90.5,615.8 90.5,616.6C90.6,617.3 89.9,618.9 89.5,618.9C89.1,618.9 88.2,617.3 88.2,616.6Z"/>
<path d="M181.3,684.3C181.3,683.9 183.7,683.3 184.7,683.3C185.7,683.3 187.5,683.9 187.5,684.3C187.5,684.6 185.7,685.5 184.7,685.5C183.7,685.5 181.3,684.6 181.3,684.3Z"/>
<path d="M72.0,756.2C72.2,755.3 73.5,753.8 75.0,753.0C76.5,752.2 79.5,751.3 81.2,751.2C83.0,751.2 84.9,751.5 85.8,752.5C86.6,753.5 85.5,756.0 86.2,757.5C87.0,759.0 88.8,760.0 90.0,761.2C91.2,762.5 92.3,763.5 93.8,765.0C95.2,766.5 96.7,768.5 98.8,770.0C100.8,771.5 104.0,772.9 106.2,773.8C108.5,774.6 110.6,774.2 112.5,775.0C114.4,775.8 115.4,778.0 117.5,778.8C119.6,779.5 122.8,779.2 125.0,779.5C127.2,779.8 129.6,779.7 130.5,780.5C131.4,781.3 131.4,783.5 130.5,784.5C129.6,785.5 126.8,785.9 125.0,786.2C123.2,786.6 121.9,787.0 120.0,786.8C118.1,786.5 116.0,785.4 113.8,784.5C111.5,783.6 108.8,782.4 106.2,781.2C103.8,780.1 101.0,778.8 98.8,777.5C96.5,776.2 94.2,775.1 93.0,773.8C91.8,772.4 92.2,771.0 91.2,769.5C90.3,768.0 88.8,766.4 87.5,765.0C86.2,763.6 85.4,762.0 83.8,761.2C82.1,760.5 79.2,760.9 77.5,760.5C75.8,760.1 74.7,759.5 73.8,758.8C72.8,758.0 71.8,757.2 72.0,756.2Z"/>
<path d="M96.0,406.7C96.0,405.6 97.3,403.5 98.5,402.5C99.8,401.5 102.0,400.7 103.5,400.8C105.1,401.0 106.3,402.2 107.7,403.3C109.1,404.5 110.7,406.2 111.9,407.5C113.2,408.9 115.3,410.5 115.3,411.4C115.3,412.2 113.6,412.6 111.9,412.5C110.2,412.5 107.4,411.4 105.2,410.9C103.0,410.3 100.1,409.9 98.5,409.2C97.0,408.5 96.0,407.8 96.0,406.7Z"/>
<path d="M140.3,410.9C140.5,409.9 143.3,408.2 143.7,406.7C144.1,405.2 142.7,403.2 142.8,401.7C143.0,400.1 143.4,398.5 144.5,397.5C145.6,396.5 147.9,395.8 149.5,395.8C151.2,395.8 153.6,396.5 154.5,397.5C155.5,398.5 155.2,400.6 155.1,401.7C154.9,402.8 154.5,403.2 153.7,404.2C152.9,405.2 151.5,406.3 150.4,407.5C149.3,408.8 148.3,410.9 147.0,411.7C145.8,412.5 144.0,412.7 142.8,412.5C141.7,412.4 140.2,411.8 140.3,410.9Z"/>
<path d="M193.0,414.2C193.4,413.2 195.2,412.8 196.4,413.0C197.5,413.3 199.0,414.7 199.7,415.9C200.4,417.1 201.0,419.1 200.5,420.1C200.1,421.0 198.3,421.9 197.2,421.7C196.1,421.6 194.5,420.5 193.8,419.2C193.1,418.0 192.6,415.2 193.0,414.2Z"/>
<path d="M78.8,383.8C79.4,382.3 81.7,380.2 83.8,380.0C85.8,379.8 89.0,381.5 91.2,382.5C93.5,383.5 96.2,385.0 97.5,386.2C98.8,387.5 99.4,389.0 98.8,390.0C98.1,391.0 95.8,391.8 93.8,392.0C91.7,392.2 88.5,391.8 86.2,391.2C84.0,390.7 81.2,390.0 80.0,388.8C78.8,387.5 78.1,385.2 78.8,383.8Z"/>
<path d="M143.2,378.8C143.7,377.3 146.0,375.3 147.5,375.0C149.0,374.7 151.1,376.0 152.0,377.0C152.9,378.0 153.4,380.0 153.0,381.2C152.6,382.5 150.8,384.1 149.5,384.5C148.2,384.9 146.0,384.7 145.0,383.8C144.0,382.8 142.8,380.2 143.2,378.8Z"/>
<path d="M178.2,394.5C178.6,393.7 179.8,392.0 180.8,392.0C181.7,392.0 183.5,393.7 183.8,394.5C184.0,395.3 182.8,396.6 182.0,397.0C181.2,397.4 179.4,397.4 178.8,397.0C178.1,396.6 177.9,395.3 178.2,394.5Z"/>
<path d="M489.4,411.8C489.8,410.6 491.5,409.2 492.7,408.8C494.0,408.4 495.7,408.7 496.9,409.3C498.2,409.9 499.6,411.4 500.3,412.6C501.0,413.9 501.5,415.7 501.1,416.8C500.7,417.9 499.0,419.0 497.8,419.3C496.5,419.7 494.8,419.4 493.6,418.8C492.3,418.3 490.9,417.2 490.2,416.0C489.5,414.8 489.0,413.0 489.4,411.8Z"/>
<path d="M510.0,414.3C510.0,413.0 511.6,411.3 512.8,411.0C514.0,410.6 515.7,411.2 517.0,412.1C518.2,413.1 519.8,415.5 520.3,416.8C520.9,418.2 520.9,419.5 520.3,420.2C519.8,420.9 518.2,421.2 517.0,421.0C515.7,420.8 514.0,419.9 512.8,418.8C511.6,417.7 510.0,415.6 510.0,414.3Z"/>
<path d="M532.0,425.2C532.4,423.9 533.6,422.7 534.5,422.7C535.5,422.7 537.0,424.1 537.9,425.2C538.8,426.3 540.1,427.8 540.1,429.4C540.1,430.9 538.7,433.0 537.9,434.4C537.1,435.8 536.1,437.6 535.4,437.7C534.6,437.9 533.9,436.5 533.4,435.2C532.9,434.0 532.6,431.9 532.4,430.2C532.2,428.5 531.7,426.4 532.0,425.2Z"/>
<path d="M524.5,429.4C525.4,428.9 529.4,428.2 530.4,428.5C531.3,428.8 531.2,430.6 530.4,431.0C529.5,431.5 526.3,431.3 525.4,431.0C524.4,430.8 523.7,429.8 524.5,429.4Z"/>
<path d="M510.3,426.9C510.6,426.3 511.7,425.5 512.8,426.0C513.9,426.6 515.9,428.9 517.0,430.2C518.1,431.5 519.4,432.8 519.5,433.5C519.6,434.2 518.8,434.7 517.8,434.4C516.9,434.1 514.8,432.7 513.6,431.9C512.5,431.0 511.7,430.2 511.1,429.4C510.6,428.5 510.0,427.4 510.3,426.9Z"/>
<path d="M496.9,441.1C497.4,440.7 499.4,440.1 500.3,440.2C501.1,440.4 501.9,441.4 501.9,441.9C501.9,442.4 501.0,443.1 500.3,443.2C499.5,443.4 497.8,443.1 497.3,442.7C496.7,442.4 496.4,441.5 496.9,441.1Z"/>
<path d="M544.1,441.1C544.5,440.7 547.1,439.9 547.9,440.2C548.7,440.6 549.2,442.8 548.8,443.2C548.3,443.7 546.2,443.1 545.4,442.7C544.6,442.4 543.7,441.5 544.1,441.1Z"/>
<path d="M510.3,456.1C510.3,455.4 511.2,454.8 511.6,454.9C512.1,455.1 512.8,456.2 512.8,457.0C512.8,457.7 512.1,459.6 511.6,459.5C511.2,459.3 510.3,456.9 510.3,456.1Z"/>
<path d="M517.3,459.5C517.5,457.7 518.3,458.0 518.7,458.3C519.1,458.6 519.6,459.5 519.7,461.1C519.7,462.7 519.3,466.6 519.0,467.8C518.7,469.1 518.1,470.1 517.8,468.7C517.5,467.3 517.2,461.2 517.3,459.5Z"/>
<path d="M535.4,456.1C535.4,455.7 538.2,455.0 538.7,455.3C539.3,455.6 539.3,457.7 538.7,457.8C538.2,457.9 535.4,456.5 535.4,456.1Z"/>
<path d="M529.5,470.3C529.5,469.6 531.0,468.9 531.7,469.0C532.4,469.1 533.7,470.4 533.7,471.2C533.7,472.0 532.4,473.8 531.7,473.7C531.0,473.5 529.5,471.1 529.5,470.3Z"/>
<path d="M545.8,463.6C546.1,463.0 547.6,462.2 548.4,462.3C549.3,462.4 550.7,463.7 550.8,464.5C550.8,465.3 549.5,466.7 548.8,467.0C548.0,467.3 546.8,466.7 546.3,466.2C545.8,465.6 545.4,464.3 545.8,463.6Z"/>
<path d="M552.1,467.0C552.4,466.0 554.3,463.7 555.5,462.8C556.6,461.9 558.1,461.1 558.8,461.6C559.5,462.2 559.8,465.0 559.6,466.2C559.5,467.3 558.9,468.2 558.0,468.7C557.0,469.1 554.8,469.3 553.8,469.0C552.8,468.7 551.8,468.0 552.1,467.0Z"/>
<path d="M561.3,459.5C561.7,458.9 563.4,458.0 564.6,458.3C565.9,458.6 567.4,460.0 568.8,461.1C570.2,462.3 572.2,464.1 573.0,465.3C573.8,466.5 574.3,467.8 573.8,468.3C573.4,468.9 571.9,469.2 570.5,468.7C569.1,468.2 566.9,466.4 565.5,465.3C564.1,464.2 562.8,462.9 562.1,462.0C561.4,461.0 560.9,460.1 561.3,459.5Z"/>
<path d="M565.8,471.2C566.5,470.6 568.6,470.1 569.7,470.3C570.7,470.6 571.9,471.9 572.2,472.8C572.5,473.8 572.0,475.6 571.3,476.2C570.6,476.7 568.9,476.6 568.0,476.2C567.1,475.8 566.2,474.5 565.8,473.7C565.5,472.8 565.2,471.7 565.8,471.2Z"/>
<path d="M538.7,477.0C539.0,475.7 540.3,474.2 541.2,474.0C542.2,473.9 543.6,475.0 544.6,476.2C545.6,477.4 546.3,479.4 547.1,481.2C547.9,483.0 548.3,485.6 549.6,487.1C550.9,488.5 554.2,489.4 554.6,490.1C555.0,490.8 553.4,491.4 552.1,491.2C550.9,491.1 548.6,489.9 547.1,489.1C545.6,488.2 544.2,487.4 542.9,486.2C541.7,485.1 540.3,483.6 539.6,482.0C538.9,480.5 538.5,478.4 538.7,477.0Z"/>
<path d="M561.8,487.1C562.2,486.2 563.5,484.7 564.6,484.5C565.8,484.4 567.7,485.3 568.8,486.2C569.9,487.1 571.2,488.9 571.3,490.1C571.5,491.3 570.6,492.9 569.7,493.4C568.7,493.9 566.7,493.6 565.5,492.9C564.3,492.3 563.1,490.5 562.5,489.6C561.9,488.6 561.4,487.9 561.8,487.1Z"/>
<path d="M589.7,485.4C589.9,484.1 591.4,481.5 592.2,480.4C593.1,479.3 593.8,478.6 594.7,478.7C595.7,478.8 596.6,480.7 598.1,481.2C599.6,481.7 602.1,481.3 603.9,481.7C605.8,482.1 608.5,482.8 609.0,483.7C609.4,484.6 607.7,486.2 606.5,487.1C605.2,487.9 603.2,488.6 601.4,489.1C599.6,489.5 597.3,489.8 595.6,489.6C593.9,489.4 592.4,488.6 591.4,487.9C590.4,487.2 589.6,486.6 589.7,485.4Z"/>
<path d="M591.4,502.1C592.0,500.6 593.9,499.3 595.6,497.9C597.3,496.5 600.2,493.9 601.4,493.7C602.7,493.6 602.7,495.4 603.1,497.1C603.5,498.8 603.2,502.0 603.9,503.8C604.6,505.6 605.6,507.0 607.3,508.0C609.0,508.9 612.3,508.9 614.0,509.6C615.7,510.3 617.0,511.3 617.3,512.1C617.6,513.0 617.0,514.1 615.7,514.6C614.3,515.2 611.3,515.7 609.0,515.5C606.6,515.3 603.7,514.2 601.4,513.5C599.2,512.8 597.1,512.4 595.6,511.3C594.1,510.2 592.9,508.7 592.2,507.1C591.5,505.6 590.8,503.6 591.4,502.1Z"/>
<path d="M471.0,467.8C471.2,466.2 472.4,465.4 473.5,465.0C474.6,464.6 476.0,464.6 477.7,465.3C479.4,466.1 481.5,467.5 483.5,469.5C485.6,471.4 488.3,474.5 490.2,477.0C492.2,479.5 493.9,482.3 495.3,484.5C496.6,486.8 497.9,488.7 498.6,490.4C499.3,492.1 499.8,493.6 499.4,494.6C499.0,495.6 497.6,496.1 496.1,496.3C494.6,496.4 492.3,495.9 490.2,495.4C488.1,494.9 485.6,494.5 483.5,493.4C481.5,492.3 479.2,490.6 477.7,488.7C476.2,486.8 475.3,484.4 474.3,482.0C473.4,479.7 472.7,476.9 472.2,474.5C471.6,472.1 470.8,469.4 471.0,467.8Z"/>
<path d="M449.3,418.5C449.5,417.5 450.8,416.3 451.8,416.0C452.7,415.7 454.4,416.3 455.1,416.8C455.8,417.4 456.4,418.4 456.0,419.3C455.5,420.3 453.6,422.3 452.6,422.7C451.6,423.1 450.7,422.5 450.1,421.8C449.5,421.1 449.0,419.5 449.3,418.5Z"/>
<path d="M445.1,410.6 L448.1,411.5"/>
<path d="M461.0,425.5 L462.6,426.5"/>
<path d="M705.7,398.4C705.9,399.1 706.2,401.5 707.0,402.6C707.8,403.7 709.1,404.4 710.4,405.1C711.6,405.8 713.7,405.8 714.5,406.8C715.4,407.8 715.8,409.6 715.4,411.0C715.0,412.4 712.7,413.9 712.0,415.2C711.4,416.4 711.1,417.4 711.7,418.5C712.3,419.6 713.7,420.6 715.4,421.8C717.1,423.1 719.8,424.6 722.1,426.0C724.3,427.4 726.3,428.7 728.8,430.2C731.3,431.7 734.3,433.5 737.1,435.2C739.9,436.9 742.7,438.7 745.5,440.2C748.3,441.8 751.3,443.2 753.8,444.4C756.4,445.7 758.3,446.8 760.5,447.8C762.8,448.7 765.0,449.6 767.2,450.3C769.5,451.0 772.5,451.4 773.9,451.9C775.3,452.5 775.0,452.8 775.6,453.6C776.1,454.4 776.6,455.9 777.3,457.0C778.0,458.0 779.3,459.5 779.8,460.0"/>
<path d="M737.1,421.8C738.2,420.6 740.6,419.9 742.1,420.2C743.7,420.4 745.1,423.2 746.3,423.5C747.6,423.8 748.7,421.4 749.7,421.8C750.6,422.3 752.5,424.8 752.2,426.0C751.9,427.3 749.7,428.5 748.0,429.4C746.3,430.2 743.8,430.6 742.1,431.0C740.5,431.5 739.0,432.4 738.0,431.9C736.9,431.3 735.9,429.4 735.8,427.7C735.6,426.0 736.1,423.1 737.1,421.8Z"/>
<path d="M769.7,436.9C769.9,435.6 772.4,432.3 773.9,431.0C775.4,429.8 777.8,429.1 778.9,429.4C780.0,429.6 780.7,431.5 780.6,432.7C780.5,434.0 779.3,435.9 778.1,436.9C776.8,437.9 774.5,438.6 773.1,438.6C771.7,438.6 769.6,438.1 769.7,436.9Z"/>
<path d="M610.0,485.4C610.7,484.1 613.0,482.0 614.2,482.0C615.5,482.0 616.6,483.7 617.6,485.4C618.5,487.1 618.8,489.8 620.1,492.1C621.3,494.3 623.7,496.8 625.1,498.8C626.5,500.7 628.1,502.2 628.4,503.8C628.7,505.3 627.7,507.4 626.8,508.0C625.8,508.5 624.1,508.1 622.6,507.1C621.0,506.1 619.1,504.1 617.6,502.1C616.0,500.2 614.6,497.5 613.4,495.4C612.2,493.3 610.9,491.2 610.4,489.6C609.8,487.9 609.4,486.6 610.0,485.4Z"/>
<path d="M630.9,489.6C631.4,488.2 633.2,487.9 634.3,487.9C635.4,487.9 636.7,488.5 637.6,489.6C638.5,490.7 639.7,493.0 639.8,494.6C639.9,496.1 639.2,497.9 638.5,498.8C637.7,499.6 636.2,500.0 635.1,499.6C634.0,499.2 632.5,497.9 631.8,496.3C631.1,494.6 630.5,491.0 630.9,489.6Z"/>
<path d="M646.8,491.2C647.3,490.4 648.8,489.6 650.2,489.6C651.6,489.5 653.9,489.9 655.2,490.7C656.4,491.6 657.7,493.5 657.7,494.6C657.7,495.6 656.4,496.7 655.2,497.1C653.9,497.5 651.5,497.2 650.2,496.8C648.8,496.3 647.7,495.5 647.2,494.6C646.6,493.7 646.3,492.1 646.8,491.2Z"/>
<path d="M629.3,509.6C630.0,508.8 633.3,508.5 635.1,508.8C636.9,509.1 639.0,510.2 640.1,511.3C641.2,512.4 641.9,514.2 641.8,515.5C641.7,516.7 640.4,518.6 639.3,518.8C638.2,519.1 636.5,518.0 635.1,517.2C633.7,516.3 631.9,515.1 630.9,513.8C630.0,512.6 628.6,510.5 629.3,509.6Z"/>
<path d="M698.7,512.1C699.0,511.3 700.5,510.9 701.2,511.3C701.9,511.7 702.8,513.5 702.8,514.6C702.8,515.8 701.8,517.7 701.2,518.0C700.5,518.3 699.4,517.3 699.0,516.3C698.6,515.3 698.3,513.0 698.7,512.1Z"/>
<path d="M768.1,517.2C768.3,516.3 770.2,515.5 771.4,515.5C772.7,515.4 775.2,516.1 775.6,516.8C776.0,517.5 774.9,519.1 773.9,519.7C772.9,520.3 770.7,520.9 769.7,520.5C768.8,520.1 767.8,518.0 768.1,517.2Z"/>
<path d="M685.3,421.8C685.8,421.2 687.2,420.9 688.6,421.0C690.0,421.1 692.3,421.8 693.6,422.7C695.0,423.5 697.0,425.2 697.0,426.0C697.0,426.9 695.0,427.6 693.6,427.7C692.3,427.8 690.0,427.3 688.6,426.9C687.3,426.4 686.2,425.7 685.6,424.8C685.1,424.0 684.8,422.5 685.3,421.8Z"/>
<path d="M697.8,436.1C698.2,436.6 698.8,438.6 700.3,439.4C701.9,440.2 704.8,440.3 707.0,440.6C709.3,440.8 711.8,440.4 713.7,441.1C715.7,441.7 717.1,444.0 718.7,444.4C720.4,444.8 722.1,443.9 723.7,443.6C725.4,443.2 727.1,442.0 728.8,442.2C730.4,442.5 732.4,443.9 733.8,445.3C735.2,446.6 736.1,449.2 737.1,450.3C738.1,451.4 738.5,452.1 739.6,451.9C740.7,451.8 742.6,449.2 743.8,449.4C745.1,449.7 746.9,452.4 747.2,453.6C747.4,454.9 745.8,456.4 745.5,457.0"/>
<path d="M698.7,440.2C698.9,441.6 699.5,445.8 700.3,448.6C701.2,451.4 702.3,454.7 703.7,457.0C705.1,459.2 706.5,460.6 708.7,462.0C710.9,463.4 714.3,464.6 717.1,465.3C719.8,466.0 723.0,465.9 725.4,466.2C727.8,466.4 729.9,466.3 731.3,467.0C732.7,467.7 733.6,469.2 733.8,470.3C733.9,471.4 733.2,472.6 732.1,473.7C731.0,474.8 728.1,476.0 727.1,477.0C726.1,478.0 726.0,478.7 726.3,479.5C726.5,480.4 728.1,481.2 728.8,482.0C729.5,482.9 730.2,484.1 730.4,484.5"/>
<path d="M645.2,460.3C645.4,461.1 647.1,463.6 646.8,465.3C646.5,467.0 644.6,468.9 643.5,470.3C642.4,471.7 640.3,472.3 640.1,473.7C640.0,475.1 641.5,477.4 642.6,478.7C643.8,479.9 645.6,480.4 646.8,481.2C648.1,482.0 650.7,483.3 650.2,483.7C649.6,484.1 645.3,483.6 643.5,483.7C641.7,483.9 639.6,484.0 639.3,484.5C639.0,485.1 640.3,486.5 641.8,487.1C643.3,487.6 646.3,487.9 648.5,487.9C650.7,487.9 653.7,486.6 655.2,487.1C656.7,487.5 656.9,489.1 657.7,490.4C658.5,491.7 658.7,493.7 660.2,494.6C661.7,495.4 664.7,495.7 666.9,495.4C669.1,495.1 671.8,493.9 673.6,492.9C675.4,491.9 677.5,490.3 677.8,489.6C678.0,488.9 676.5,488.6 675.3,488.7C674.0,488.9 671.9,489.7 670.2,490.4C668.6,491.1 666.6,492.4 665.2,492.9C663.8,493.5 662.4,493.6 661.9,493.7"/>
<path d="M664.4,470.3C664.5,471.2 664.5,474.0 665.2,475.4C665.9,476.7 666.9,477.9 668.6,478.7C670.2,479.5 673.0,479.8 675.3,480.4C677.5,480.9 680.1,481.2 681.9,482.0C683.8,482.9 685.3,484.0 686.1,485.4C687.0,486.8 687.0,488.5 687.0,490.4C687.0,492.4 686.0,495.5 686.1,497.1C686.2,498.7 687.3,499.5 687.6,500.0"/>
<path d="M709.8,500.0C709.9,499.9 710.8,500.1 710.4,499.6C709.9,499.1 708.4,497.8 707.0,497.1C705.6,496.4 703.1,496.3 702.0,495.4C700.9,494.6 700.3,493.5 700.3,492.1C700.3,490.7 700.9,488.5 702.0,487.1C703.1,485.7 705.8,484.7 707.0,483.7C708.3,482.7 708.8,481.2 709.5,481.2C710.2,481.2 710.8,482.5 711.2,483.7C711.6,485.0 711.5,487.3 712.0,488.7C712.6,490.1 713.7,490.7 714.5,492.1C715.4,493.5 716.5,495.8 717.1,497.1C717.6,498.4 717.9,499.5 718.0,500.0"/>
<path d="M697.1,500.0C697.7,499.9 699.5,499.6 700.3,499.6C701.1,499.6 701.7,499.9 701.9,500.0"/>
<path d="M725.4,498.8 L724.7,500.0"/>
<path d="M623.4,479.5 L625.9,479.5"/>
<path d="M510.3,548.5C511.0,547.2 512.8,543.1 514.4,541.0C516.1,538.9 517.9,537.1 520.3,536.0C522.7,534.8 526.3,534.3 528.7,534.3C531.0,534.3 533.3,535.0 534.5,536.0C535.8,536.9 536.7,538.9 536.2,539.8C535.6,540.7 532.2,540.6 531.2,541.5C530.1,542.3 529.4,543.7 530.0,544.8C530.6,545.9 532.5,547.7 534.5,548.2C536.5,548.6 539.7,547.4 542.0,547.3C544.4,547.2 546.8,547.0 548.7,547.7C550.7,548.3 552.6,550.0 553.7,551.0C554.9,552.0 555.7,553.3 555.4,553.8C555.1,554.4 553.0,555.0 552.1,554.3C551.1,553.7 550.3,551.8 549.6,550.2C548.9,548.5 548.0,546.0 547.9,544.3C547.8,542.6 548.5,540.8 549.1,539.8C549.6,538.8 550.9,538.4 551.2,538.1"/>
<path d="M572.1,530.1C573.5,530.2 577.7,530.9 580.5,530.9C583.3,531.0 586.9,530.2 588.9,530.4C590.8,530.7 591.8,531.4 592.2,532.6C592.6,533.8 592.2,536.1 591.4,537.6C590.5,539.2 589.0,540.8 587.2,541.8C585.4,542.8 582.2,543.0 580.5,543.8C578.8,544.6 577.8,545.6 577.2,546.8C576.5,548.0 576.7,549.7 576.8,551.0C577.0,552.3 576.8,554.6 578.0,554.8C579.2,555.1 581.8,553.3 583.8,552.7C585.9,552.0 588.6,551.1 590.5,551.0C592.5,550.9 594.0,551.1 595.6,551.8C597.1,552.6 599.3,554.9 600.0,555.5"/>
<path d="M600.0,561.8C599.3,561.7 597.1,561.4 595.6,561.0C594.0,560.6 592.2,559.9 590.5,559.4C588.9,558.8 586.9,558.4 585.5,557.7C584.1,557.0 583.4,555.6 582.2,555.2C580.9,554.8 579.1,554.6 578.0,555.2C576.9,555.7 576.2,557.3 575.5,558.5C574.8,559.8 574.6,561.5 573.8,562.7C573.0,564.0 571.9,565.2 570.5,566.1C569.1,566.9 567.1,567.7 565.5,567.7C563.8,567.7 562.1,566.9 560.4,566.1C558.8,565.2 557.6,563.4 555.4,562.7C553.2,562.0 550.1,562.3 547.1,561.9C544.0,561.5 540.1,560.9 537.0,560.2C534.0,559.5 531.4,558.0 528.7,557.7C525.9,557.4 522.8,558.9 520.3,558.2C517.8,557.5 515.3,555.1 513.6,553.5C511.9,551.9 510.8,549.3 510.3,548.5"/>
<path d="M558.8,505.0C558.9,503.9 560.3,502.1 561.3,501.7C562.2,501.3 563.5,501.7 564.6,502.5C565.7,503.3 566.8,505.2 568.0,506.7C569.1,508.2 569.8,510.5 571.3,511.7C572.8,513.0 575.1,513.4 577.2,514.2C579.2,515.1 581.6,515.9 583.8,516.7C586.1,517.6 588.3,518.4 590.5,519.2C592.8,520.1 595.9,520.8 597.2,521.7C598.6,522.7 599.0,524.0 598.6,524.7C598.1,525.5 596.6,526.2 594.7,526.4C592.8,526.6 589.6,526.1 587.2,525.9C584.8,525.7 582.7,525.4 580.5,525.1C578.3,524.8 575.8,524.7 573.8,524.2C571.9,523.8 569.9,523.6 568.8,522.6C567.7,521.6 567.3,519.6 567.1,518.4C567.0,517.1 568.4,516.3 568.0,515.1C567.5,513.8 565.9,512.0 564.6,510.9C563.4,509.8 561.4,509.3 560.4,508.4C559.5,507.4 558.6,506.1 558.8,505.0Z"/>
<path d="M612.3,532.6C613.0,531.4 615.3,529.7 617.3,528.4C619.2,527.2 622.0,525.5 624.0,525.1C625.9,524.7 628.0,525.2 629.0,525.9C630.0,526.6 630.3,528.0 630.0,529.3C629.7,530.5 628.6,532.2 627.3,533.4C626.0,534.7 624.0,536.1 622.3,536.8C620.6,537.5 618.8,537.8 617.3,537.6C615.8,537.5 613.9,536.8 613.1,536.0C612.3,535.1 611.6,533.9 612.3,532.6Z"/>
<path d="M563.4,576.6C563.7,576.2 564.6,575.9 565.1,576.1C565.6,576.3 566.3,577.2 566.3,577.8C566.3,578.3 565.6,579.3 565.1,579.4C564.6,579.6 563.7,579.1 563.4,578.6C563.2,578.1 563.2,577.0 563.4,576.6Z"/>
<path d="M554.6,614.0C554.9,612.8 555.8,608.9 557.1,607.0C558.3,605.2 560.2,604.0 562.1,602.8C564.1,601.7 566.6,601.0 568.8,600.0C571.0,599.0 573.0,597.7 575.5,597.0C578.0,596.3 580.8,595.9 583.8,595.7C586.9,595.4 591.1,594.5 593.9,595.3C596.7,596.1 598.6,598.4 600.6,600.3C602.5,602.3 604.2,605.1 605.6,607.0C607.0,609.0 609.2,610.9 608.9,612.0C608.7,613.2 606.1,613.2 603.9,613.7C601.7,614.3 597.8,614.7 595.6,615.4C593.3,616.1 592.2,616.8 590.5,617.9C588.9,619.0 587.2,621.0 585.5,622.1C583.8,623.2 582.5,624.4 580.5,624.6C578.6,624.7 575.8,623.7 573.8,622.9C571.9,622.1 569.8,620.8 568.8,619.6C567.8,618.3 567.4,616.8 568.0,615.4C568.5,614.0 570.6,612.3 572.1,611.2C573.7,610.1 576.9,609.7 577.2,608.7C577.4,607.7 575.2,606.2 573.8,605.4C572.4,604.5 570.2,603.5 568.8,603.7C567.4,603.8 566.3,605.1 565.5,606.2C564.6,607.3 564.9,609.4 563.8,610.4C562.7,611.3 560.2,611.3 558.8,612.0C557.4,612.7 556.1,614.2 555.4,614.5C554.7,614.9 554.3,615.3 554.6,614.0Z"/>
<path d="M575.5,633.8C575.9,632.4 578.6,631.5 580.5,630.4C582.5,629.3 585.2,627.8 587.2,627.1C589.1,626.4 590.5,625.8 592.2,626.3C593.9,626.7 595.8,628.3 597.2,629.6C598.6,630.9 599.2,632.5 600.6,633.8C602.0,635.0 603.8,636.4 605.6,637.1C607.4,637.8 610.2,637.1 611.4,638.0C612.7,638.8 613.5,640.9 613.1,642.1C612.7,643.4 610.7,644.9 608.9,645.5C607.1,646.0 604.5,646.0 602.2,645.5C600.0,644.9 597.5,643.1 595.6,642.1C593.6,641.2 592.5,639.9 590.5,639.6C588.6,639.4 585.9,640.6 583.8,640.5C581.8,640.3 579.4,639.9 578.0,638.8C576.6,637.7 575.1,635.2 575.5,633.8Z"/>
<path d="M594.7,624.6C594.9,623.7 597.2,623.0 598.9,622.9C600.6,622.8 603.4,623.2 604.7,623.7C606.1,624.3 607.4,625.4 607.3,626.3C607.1,627.1 605.4,628.5 603.9,628.8C602.4,629.0 599.6,628.6 598.1,627.9C596.5,627.2 594.6,625.4 594.7,624.6Z"/>
<path d="M553.7,632.1C553.9,631.2 555.0,629.9 556.3,629.6C557.5,629.3 560.2,629.5 561.3,630.1C562.4,630.7 563.1,632.1 562.9,632.9C562.8,633.8 561.7,635.1 560.4,635.5C559.2,635.8 556.5,635.7 555.4,635.1C554.3,634.6 553.6,633.0 553.7,632.1Z"/>
<path d="M538.7,638.8C539.0,637.7 539.8,636.0 541.2,634.6C542.6,633.2 545.4,631.5 547.1,630.4C548.7,629.3 550.3,627.9 551.2,627.9C552.2,627.9 553.0,629.2 552.9,630.4C552.8,631.7 551.7,633.9 550.4,635.5C549.1,637.0 546.8,638.5 545.4,639.6C544.0,640.7 543.0,641.9 542.0,642.1C541.1,642.4 540.1,641.9 539.5,641.3C539.0,640.7 538.4,639.9 538.7,638.8Z"/>
<path d="M547.1,622.9C547.1,622.4 548.9,621.9 549.6,622.1C550.3,622.2 551.3,623.3 551.2,623.7C551.2,624.2 549.8,625.1 549.1,624.9C548.4,624.8 547.0,623.4 547.1,622.9Z"/>
<path d="M466.8,536.0C467.1,535.2 468.5,534.8 469.3,535.1C470.1,535.4 471.7,536.7 471.8,537.6C471.9,538.5 470.8,540.1 470.1,540.5C469.4,540.8 468.2,540.6 467.6,539.8C467.1,539.0 466.5,536.7 466.8,536.0Z"/>
<path d="M557.1,568.6C557.4,569.4 558.2,573.3 558.8,573.6C559.3,573.9 559.3,570.9 560.4,570.2C561.5,569.5 563.5,569.4 565.5,569.4C567.4,569.4 570.9,569.5 572.1,570.2C573.4,570.9 573.0,572.3 573.0,573.6C573.0,574.8 572.0,577.8 572.1,577.8C572.3,577.8 573.3,574.7 573.8,573.6C574.4,572.5 573.8,571.4 575.5,571.1C577.2,570.7 580.8,571.6 583.8,571.6C586.9,571.6 591.2,571.3 593.9,571.1C596.6,570.8 599.0,570.4 600.0,570.2"/>
<path d="M600.0,575.5C599.8,575.6 600.2,575.7 598.9,576.1C597.6,576.5 593.5,577.1 592.2,577.8C591.0,578.4 590.8,579.4 591.4,579.9C591.9,580.5 594.3,580.2 595.6,581.1C596.8,582.0 598.2,584.3 598.9,585.3C599.6,586.3 599.8,586.7 600.0,586.9"/>
<path d="M600.0,587.7C599.4,587.6 597.7,587.6 596.4,587.0C595.1,586.3 593.7,584.4 592.2,583.6C590.7,582.8 588.9,581.7 587.2,581.9C585.5,582.2 583.0,584.7 582.2,585.3"/>
<path d="M582.2,595.3 L593.9,595.0"/>
<path d="M497.7,623.7 L500.2,623.7"/>
<path d="M498.6,642.1C497.4,641.7 494.1,640.6 491.9,639.6C489.6,638.7 487.0,637.4 485.2,636.3C483.4,635.2 481.8,634.2 481.0,632.9C480.2,631.7 479.9,629.9 480.2,628.8C480.4,627.6 481.8,626.4 482.7,626.3C483.5,626.1 484.6,627.0 485.2,627.9C485.7,628.9 484.9,631.0 486.0,632.1C487.1,633.2 489.8,634.3 491.9,634.6C494.0,634.9 496.3,633.7 498.6,633.8C500.8,633.9 502.7,634.5 505.3,635.1C507.8,635.7 511.4,637.2 513.6,637.5C515.8,637.7 517.4,637.7 518.6,636.8C519.9,635.9 521.4,633.3 521.1,632.1C520.9,630.9 518.5,630.3 517.0,629.6C515.4,628.9 512.2,628.6 511.9,627.9C511.7,627.2 513.6,626.2 515.3,625.4C517.0,624.7 519.7,624.1 522.0,623.4C524.2,622.7 526.9,621.5 528.7,621.2C530.5,621.0 532.1,621.0 532.8,621.7C533.6,622.4 533.6,624.0 533.3,625.4C533.1,626.9 531.8,628.5 531.2,630.4C530.5,632.4 529.6,635.5 529.5,637.1C529.4,638.8 530.5,639.6 530.3,640.5C530.2,641.3 528.9,641.9 528.7,642.1"/>
<path d="M650.8,511.4C650.5,512.3 649.1,514.5 648.8,516.8C648.6,519.0 649.7,522.3 649.5,524.8C649.3,527.2 648.3,529.0 647.5,531.5C646.7,533.9 645.6,537.3 644.8,539.5C644.0,541.7 642.6,543.5 642.8,544.8C643.0,546.2 644.7,547.0 646.2,547.5C647.6,548.1 650.6,547.5 651.5,548.2C652.4,548.9 651.5,551.0 651.5,551.5"/>
<path d="M653.5,520.8C653.4,520.0 654.8,518.2 655.5,518.1C656.2,518.0 657.4,519.3 657.5,520.1C657.6,520.9 656.9,522.7 656.2,522.8C655.5,522.9 653.6,521.5 653.5,520.8Z"/>
<path d="M658.9,516.8C658.9,516.2 661.5,515.4 662.9,515.4C664.2,515.4 666.9,516.2 666.9,516.8C666.9,517.3 664.2,518.8 662.9,518.8C661.5,518.8 658.9,517.3 658.9,516.8Z"/>
<path d="M665.6,528.1C665.7,527.6 668.3,526.8 669.6,526.8C670.8,526.8 673.0,527.6 672.9,528.1C672.8,528.6 670.1,529.9 668.9,529.9C667.7,529.9 665.4,528.6 665.6,528.1Z"/>
<path d="M666.9,546.2C666.0,546.4 663.3,547.0 661.5,547.5C659.8,548.1 657.2,548.8 656.2,549.5C655.2,550.3 655.1,551.2 655.5,552.2C656.0,553.2 657.6,554.7 658.9,555.6C660.1,556.4 661.6,556.4 662.9,557.6C664.1,558.7 665.3,560.8 666.2,562.2C667.1,563.7 667.4,565.5 668.2,566.3C669.0,567.0 671.1,566.3 670.9,566.9C670.7,567.6 667.8,569.2 666.9,570.3C666.0,571.4 665.3,572.5 665.6,573.6C665.8,574.7 667.1,575.7 668.2,577.0C669.3,578.2 670.5,579.9 672.2,581.0C674.0,582.1 677.1,582.9 678.9,583.6C680.7,584.4 681.4,585.2 682.9,585.7C684.5,586.1 686.5,585.8 688.3,586.3C690.1,586.9 692.8,588.6 693.6,589.0"/>
<path d="M656.2,567.6C656.3,566.0 657.3,565.0 658.2,564.2C659.1,563.5 660.5,562.8 661.5,562.9C662.5,563.0 663.5,563.9 664.2,564.9C664.9,565.9 665.7,567.5 665.6,568.9C665.4,570.4 664.4,572.5 663.5,573.6C662.7,574.7 661.2,575.6 660.2,575.6C659.2,575.6 658.2,574.9 657.5,573.6C656.9,572.3 656.1,569.2 656.2,567.6Z"/>
<path d="M685.6,515.4C685.8,516.5 686.3,519.9 687.0,522.1C687.6,524.3 688.7,526.6 689.6,528.8C690.5,531.0 691.6,533.0 692.3,535.5C693.0,537.9 693.2,541.1 693.6,543.5C694.1,546.0 694.6,548.6 695.0,550.2C695.3,551.8 695.9,552.2 695.7,552.9C695.4,553.5 694.4,553.5 693.6,554.2C692.9,554.9 691.2,555.6 691.0,556.9C690.7,558.2 691.9,560.2 692.3,562.2C692.8,564.2 693.0,566.7 693.6,568.9C694.3,571.2 695.2,573.4 696.3,575.6C697.4,577.8 698.8,580.1 700.3,582.3C701.9,584.5 703.9,587.2 705.7,589.0C707.5,590.8 709.3,592.3 711.0,593.0C712.8,593.7 714.6,593.7 716.4,593.0C718.2,592.3 720.2,590.6 721.7,589.0C723.3,587.4 724.6,584.3 725.8,583.6C726.9,583.0 727.6,583.9 728.4,585.0C729.2,586.1 729.7,588.8 730.4,590.3C731.2,591.9 732.7,593.7 733.1,594.3"/>
<path d="M689.6,508.7C690.3,509.8 692.5,513.2 693.6,515.4C694.8,517.6 695.0,520.1 696.3,522.1C697.7,524.1 699.9,525.9 701.7,527.5C703.5,529.0 705.5,530.5 707.0,531.5C708.6,532.5 710.4,533.1 711.0,533.5"/>
<path d="M717.7,522.1C718.2,522.6 719.1,524.6 720.4,524.8C721.7,525.0 724.4,523.0 725.8,523.4C727.1,523.9 728.0,525.9 728.4,527.5C728.9,529.0 729.1,531.7 728.4,532.8C727.8,533.9 725.1,533.9 724.4,534.1"/>
<path d="M700.3,538.2C700.6,539.5 701.0,543.5 701.7,546.2C702.3,548.9 703.2,552.0 704.3,554.2C705.5,556.4 707.0,558.6 708.4,559.6C709.7,560.6 711.3,560.9 712.4,560.2C713.5,559.6 714.2,557.0 715.1,555.6C715.9,554.1 716.4,552.4 717.7,551.5C719.1,550.6 721.7,551.1 723.1,550.2C724.4,549.3 725.5,547.3 725.8,546.2C726.0,545.1 724.6,544.0 724.4,543.5"/>
<path d="M692.3,502.0C693.5,501.1 696.5,500.7 699.0,500.7C701.4,500.7 704.8,501.1 707.0,502.0C709.3,502.9 711.0,504.5 712.4,506.1C713.7,507.6 714.8,509.6 715.1,511.4C715.3,513.2 713.5,515.2 713.7,516.8C713.9,518.3 715.3,519.7 716.4,520.8C717.5,521.9 720.2,522.1 720.4,523.4C720.6,524.8 718.8,527.7 717.7,528.8C716.6,529.9 715.3,530.4 713.7,530.1C712.2,529.9 710.1,528.6 708.4,527.5C706.6,526.3 704.8,525.0 703.0,523.4C701.2,521.9 699.2,520.1 697.7,518.1C696.1,516.1 694.6,513.4 693.6,511.4C692.6,509.4 691.9,507.6 691.6,506.1C691.4,504.5 691.1,502.9 692.3,502.0Z"/>
<path d="M717.1,525.5C717.4,524.6 718.8,524.0 719.7,524.1C720.6,524.2 722.2,525.2 722.4,526.1C722.6,527.0 721.9,528.9 721.1,529.5C720.3,530.0 718.4,530.1 717.7,529.5C717.1,528.8 716.7,526.3 717.1,525.5Z"/>
<path d="M713.7,516.8C714.4,516.3 716.2,514.1 717.7,514.1C719.3,514.1 721.3,516.1 723.1,516.8C724.9,517.4 726.9,517.0 728.4,518.1C730.0,519.2 731.6,521.7 732.4,523.4C733.3,525.2 733.3,527.9 733.5,528.7"/>
<path d="M733.5,531.0 L732.4,534.1"/>
<path d="M727.1,498.0C726.5,498.2 724.5,498.5 723.7,499.4C723.0,500.3 722.3,501.9 722.4,503.4C722.5,504.8 723.3,506.9 724.4,508.1C725.5,509.2 727.6,510.0 729.1,510.1C730.5,510.2 732.4,509.1 733.1,508.7C733.8,508.3 733.4,507.9 733.5,507.8"/>
<path d="M600.0,552.9C600.9,553.5 604.9,555.6 605.4,556.9C605.8,558.2 603.6,560.0 602.7,560.9C601.8,561.8 600.4,562.0 600.0,562.2"/>
<path d="M608.0,562.2C609.1,561.7 612.5,559.8 614.7,558.9C616.9,558.0 619.4,557.3 621.4,556.9C623.4,556.4 625.9,556.3 626.8,556.2"/>
<path d="M609.4,564.9C610.7,564.9 614.5,565.3 617.4,564.9C620.3,564.6 624.7,562.9 626.8,562.9C628.8,562.9 629.0,564.6 629.4,564.9"/>
<path d="M612.0,570.3C612.9,569.7 615.4,567.6 617.4,566.9C619.4,566.3 622.3,565.9 624.1,566.3C625.9,566.6 628.1,568.0 628.1,568.9C628.1,569.8 625.9,570.5 624.1,571.6C622.3,572.7 619.2,574.5 617.4,575.6C615.6,576.7 613.6,577.2 613.4,578.3C613.2,579.4 614.5,581.4 616.1,582.3C617.6,583.2 621.0,582.5 622.7,583.6C624.5,584.8 626.5,587.7 626.8,589.0C627.0,590.3 624.5,591.2 624.1,591.7"/>
<path d="M600.0,570.3C600.9,571.2 604.7,573.4 605.4,575.6C606.0,577.8 603.6,581.4 604.0,583.6C604.5,585.9 606.2,587.9 608.0,589.0C609.8,590.1 612.3,590.3 614.7,590.3C617.2,590.3 621.4,589.2 622.7,589.0"/>
<path d="M620.1,578.3C620.5,577.5 623.4,576.5 625.4,576.3C627.4,576.1 630.1,576.2 632.1,577.0C634.1,577.7 636.8,580.0 637.5,581.0C638.1,582.0 637.5,582.8 636.1,583.0C634.8,583.2 631.7,582.6 629.4,582.3C627.2,582.0 624.3,581.6 622.7,581.0C621.2,580.3 619.6,579.1 620.1,578.3Z"/>
<path d="M642.8,564.9C643.3,564.5 644.6,562.2 645.5,562.2C646.4,562.2 648.4,563.6 648.2,564.9C647.9,566.3 645.0,568.5 644.1,570.3C643.3,572.1 642.4,574.1 642.8,575.6C643.3,577.2 645.0,578.5 646.8,579.6C648.6,580.7 651.5,581.4 653.5,582.3C655.5,583.2 657.5,584.3 658.9,585.0C660.2,585.7 661.1,586.1 661.5,586.3"/>
<path d="M644.1,583.6C643.9,584.5 642.4,587.4 642.8,589.0C643.3,590.6 646.2,592.3 646.8,593.0"/>
<path d="M664.2,593.0C664.7,593.7 666.0,596.8 666.9,597.0C667.8,597.2 669.1,594.8 669.6,594.3"/>
<path d="M650.8,599.7C652.0,599.9 655.5,600.4 657.5,601.0C659.5,601.7 661.5,602.6 662.9,603.7C664.2,604.8 666.0,606.6 665.6,607.7C665.1,608.8 662.2,609.8 660.2,610.4C658.2,611.0 654.6,611.0 653.5,611.1"/>
<path d="M608.0,595.7C608.9,595.9 611.4,596.4 613.4,597.0C615.4,597.7 617.8,599.0 620.1,599.7C622.3,600.4 625.6,600.8 626.8,601.0"/>
<path d="M676.3,607.7C677.4,607.1 680.5,605.1 682.9,603.7C685.4,602.4 688.5,601.0 691.0,599.7C693.4,598.4 696.5,596.4 697.7,595.7"/>
<path d="M676.3,608.4C677.4,609.0 681.8,611.1 682.9,611.7C684.1,612.3 683.3,612.0 683.4,612.0"/>
<path d="M681.9,612.0C681.9,612.0 680.8,611.2 681.9,612.0C683.1,612.9 686.4,615.1 688.6,617.1C690.9,619.0 692.8,621.7 695.3,623.7C697.8,625.8 702.2,628.6 703.7,629.6C705.2,630.6 704.3,629.9 704.5,630.0"/>
<path d="M727.9,560.2C727.8,558.9 727.8,555.6 728.8,553.5C729.7,551.4 731.5,549.6 733.8,547.7C736.0,545.7 739.4,543.8 742.1,541.8C744.9,539.9 748.0,537.9 750.5,536.0C753.0,534.0 755.1,531.5 757.2,530.1C759.3,528.7 761.2,527.7 763.0,527.6C764.9,527.5 766.9,528.3 768.1,529.3C769.2,530.2 769.7,531.8 769.7,533.4C769.7,535.1 769.2,537.5 768.1,539.3C766.9,541.1 765.1,542.8 763.0,544.3C761.0,545.8 758.2,547.2 755.5,548.5C752.9,549.7 749.7,550.9 747.2,551.8C744.6,552.8 742.7,553.5 740.5,554.3C738.2,555.2 735.6,555.7 733.8,556.9C732.0,558.0 730.6,560.5 729.6,561.0C728.6,561.6 728.1,561.5 727.9,560.2Z"/>
<path d="M737.1,573.6C737.4,572.2 738.7,571.6 739.6,571.9C740.6,572.2 742.0,573.9 743.0,575.3C744.0,576.6 745.2,578.7 745.5,580.3C745.8,581.8 745.3,583.6 744.6,584.4C744.0,585.3 742.4,586.0 741.3,585.3C740.2,584.6 738.7,582.2 738.0,580.3C737.3,578.3 736.8,575.0 737.1,573.6Z"/>
<path d="M761.4,593.6C761.4,592.8 762.5,591.8 763.0,592.0C763.6,592.1 764.7,593.6 764.7,594.5C764.7,595.3 763.6,597.1 763.0,597.0C762.5,596.9 761.4,594.5 761.4,593.6Z"/>
<path d="M634.2,612.0C634.9,612.6 636.4,613.7 638.5,615.4C640.6,617.1 644.0,620.4 646.8,622.1C649.6,623.7 652.7,625.1 655.2,625.4C657.7,625.7 660.2,623.5 661.9,623.7C663.5,624.0 664.3,626.0 665.2,627.1C666.1,628.1 667.0,629.5 667.4,630.0"/>
<path d="M625.0,612.0C625.9,612.8 627.9,615.1 630.1,617.1C632.3,619.0 636.3,621.6 638.5,623.7C640.6,625.9 642.4,629.0 643.2,630.0"/>
<path d="M662.3,630.0 L663.5,628.8"/>
<path d="M625.1,642.1C625.4,641.2 627.2,639.9 628.4,639.6C629.7,639.4 631.8,639.8 632.6,640.5C633.4,641.2 633.7,642.8 633.4,643.8C633.2,644.8 632.1,646.0 630.9,646.3C629.8,646.6 627.7,646.2 626.8,645.5C625.8,644.8 624.8,643.1 625.1,642.1Z"/>
<path d="M600.0,622.9C600.8,623.0 603.6,623.0 605.0,623.7C606.4,624.4 608.3,626.0 608.4,627.1C608.4,628.1 605.9,629.5 605.5,630.0"/>
<path d="M653.6,711.1C653.6,710.1 653.7,707.1 653.6,705.3C653.6,703.4 653.0,701.5 653.3,700.2C653.6,699.0 654.1,698.1 655.3,697.7C656.5,697.4 658.7,698.4 660.3,698.2C662.0,698.0 664.0,697.6 665.4,696.6C666.7,695.5 667.7,693.2 668.7,691.9C669.7,690.5 669.8,689.0 671.2,688.5C672.6,688.0 675.1,688.9 677.1,688.9C679.0,688.9 681.5,689.1 682.9,688.5C684.3,687.9 685.1,686.6 685.4,685.2C685.7,683.8 685.1,681.8 684.6,680.2C684.0,678.5 682.5,676.0 682.1,675.2"/>
<path d="M633.6,635.0C634.7,635.6 637.8,637.1 640.3,638.4C642.8,639.6 645.8,641.3 648.6,642.5C651.4,643.8 654.5,644.6 657.0,645.9C659.5,647.1 662.0,648.5 663.7,650.1C665.4,651.6 666.5,654.2 667.0,655.1"/>
<path d="M641.9,633.3C643.3,634.2 647.5,636.8 650.3,638.4C653.1,639.9 656.2,641.3 658.7,642.5C661.2,643.8 663.7,645.7 665.4,645.9C667.0,646.0 668.1,644.6 668.7,643.4C669.3,642.1 669.3,640.0 668.7,638.4C668.1,636.7 665.9,634.2 665.4,633.3"/>
<path d="M653.6,630.0C653.9,630.8 654.2,633.9 655.3,635.0C656.4,636.1 658.8,636.8 660.3,636.7C661.9,636.5 663.8,635.3 664.5,634.2C665.2,633.1 664.5,630.7 664.5,630.0"/>
<path d="M677.1,633.3C677.6,634.0 679.0,636.3 680.4,637.5C681.8,638.8 684.6,640.3 685.4,640.9"/>
<path d="M679.6,646.7C679.1,647.6 677.3,650.1 677.1,651.7C676.8,653.4 677.8,655.9 677.9,656.8"/>
<path d="M684.6,647.6C685.1,646.9 686.3,646.2 687.1,646.7C687.9,647.3 689.2,649.4 689.6,650.9C690.0,652.4 690.2,654.7 689.6,655.9C689.0,657.1 687.2,658.2 686.3,658.1C685.3,658.0 684.2,656.3 683.7,655.1C683.3,653.9 683.6,652.2 683.7,650.9C683.9,649.6 684.0,648.3 684.6,647.6Z"/>
<path d="M696.3,659.3C696.8,658.4 698.2,657.3 698.8,657.6C699.4,657.9 700.1,659.7 700.1,660.9C700.2,662.2 699.6,664.4 699.1,665.1C698.6,665.8 697.7,665.5 697.1,665.1C696.6,664.7 695.9,663.6 695.8,662.6C695.6,661.6 695.8,660.1 696.3,659.3Z"/>
<path d="M653.6,660.9C653.4,661.8 652.2,664.1 652.3,666.0C652.4,667.8 654.1,670.8 654.5,671.8"/>
<path d="M684.6,673.5C685.0,674.0 686.3,676.0 687.1,676.8C687.9,677.7 688.9,678.9 689.6,678.5C690.3,678.1 691.0,675.0 691.3,674.3"/>
<path d="M648.6,687.7C649.0,687.8 650.5,687.7 651.1,688.5C651.8,689.4 652.3,691.7 652.3,692.7C652.3,693.7 651.3,694.1 651.1,694.4"/>
<path d="M702.1,630.0C703.0,630.4 705.5,631.7 707.2,632.5C708.8,633.3 710.5,634.5 712.2,635.0C713.8,635.6 716.4,635.7 717.2,635.9"/>
<path d="M723.0,642.5C723.7,643.1 725.4,645.6 727.2,645.9C729.0,646.2 731.7,645.5 733.9,644.2C736.1,643.0 738.9,640.2 740.6,638.4C742.3,636.5 743.4,634.2 743.9,633.3"/>
<path d="M547.1,647.6C547.2,646.0 548.5,644.5 549.6,643.4C550.7,642.3 552.2,641.0 553.7,640.9C555.3,640.7 557.1,641.7 558.8,642.5C560.4,643.4 561.8,644.6 563.8,645.9C565.7,647.1 568.2,648.7 570.5,650.1C572.7,651.5 574.6,652.9 577.2,654.2C579.7,655.6 583.1,657.0 585.5,658.4C587.9,659.8 589.8,661.1 591.4,662.6C592.9,664.1 593.9,665.8 594.7,667.6C595.6,669.4 596.2,671.5 596.4,673.5C596.5,675.4 596.4,677.8 595.6,679.3C594.7,680.9 593.0,682.2 591.4,682.7C589.7,683.1 587.6,682.5 585.5,682.2C583.4,681.9 581.1,681.6 578.8,681.0C576.6,680.4 574.2,679.6 572.1,678.5C570.1,677.4 568.1,675.8 566.3,674.3C564.5,672.8 562.9,671.1 561.3,669.3C559.6,667.5 557.8,665.4 556.3,663.4C554.7,661.5 553.3,659.4 552.1,657.6C550.8,655.8 549.6,654.2 548.7,652.6C547.9,650.9 546.9,649.1 547.1,647.6Z"/>
<path d="M444.8,675.4C444.4,676.5 443.8,680.1 442.3,682.1C440.8,684.0 437.8,685.7 435.6,687.1C433.4,688.5 430.6,689.3 428.9,690.4C427.3,691.5 426.3,692.4 425.6,693.8C424.9,695.2 424.6,696.8 424.7,698.8C424.9,700.7 425.6,703.5 426.4,705.5C427.3,707.4 428.6,708.6 429.8,710.5C430.9,712.4 431.9,714.8 433.3,717.0C434.8,719.1 436.4,721.4 438.4,723.6C440.3,725.9 442.5,728.2 445.1,730.3C447.6,732.4 450.3,734.5 453.4,736.2C456.5,737.9 460.1,739.2 463.4,740.4C466.8,741.6 470.1,742.6 473.5,743.4C476.8,744.2 480.2,744.6 483.5,745.1C486.9,745.5 490.2,745.6 493.5,745.9C496.9,746.2 500.2,746.7 503.6,747.1C506.9,747.4 510.3,747.9 513.6,748.2C517.0,748.5 520.3,748.7 523.6,748.7C527.0,748.8 530.9,748.7 533.7,748.4C536.5,748.1 538.1,747.7 540.4,747.1C542.6,746.4 544.5,745.7 547.1,744.5C549.6,743.4 552.6,741.9 555.4,740.4C558.2,738.8 561.3,737.0 563.8,735.4C566.3,733.7 568.2,732.3 570.5,730.3C572.7,728.4 574.9,726.0 577.2,723.6C579.4,721.3 581.9,718.4 583.8,716.1C585.8,713.9 587.3,711.8 588.9,710.3C590.4,708.7 591.6,707.5 593.0,706.9C594.4,706.4 595.7,706.6 597.2,706.9C598.8,707.2 600.8,708.2 602.2,708.6C603.6,709.0 604.5,709.8 605.6,709.4C606.7,709.0 608.0,707.3 608.9,706.1C609.9,704.8 610.6,703.0 611.4,701.9C612.3,700.8 612.7,699.9 613.9,699.4C615.2,698.9 617.3,698.8 619.0,698.9C620.6,699.0 622.7,699.2 624.0,700.2C625.2,701.3 625.8,703.6 626.5,705.3C627.2,706.9 627.6,709.0 628.2,710.3C628.7,711.5 628.8,711.4 630.0,712.8C631.2,714.2 633.8,717.9 635.3,718.6C636.7,719.3 637.6,717.8 638.6,717.0C639.6,716.1 640.3,714.4 641.1,713.6C641.9,712.8 643.2,712.2 643.6,711.9"/>
<path d="M804.7,458.6C804.7,457.7 805.4,456.1 805.9,456.1C806.4,456.1 807.5,457.7 807.6,458.6C807.7,459.5 806.9,461.6 806.4,461.6C805.9,461.6 804.8,459.5 804.7,458.6Z"/>
<path d="M910.9,494.6C911.1,493.5 912.2,491.9 912.9,492.1C913.6,492.2 915.0,494.0 915.1,495.4C915.3,496.8 914.3,499.9 913.8,500.4C913.2,501.0 912.2,499.7 911.8,498.8C911.3,497.8 910.7,495.7 910.9,494.6Z"/>
<path d="M783.5,526.8C783.8,525.8 784.9,524.8 786.0,525.1C787.1,525.4 788.9,526.8 790.2,528.5C791.5,530.1 792.8,533.2 793.5,535.2C794.2,537.1 794.8,539.5 794.4,540.2C794.0,540.9 792.3,540.2 791.0,539.3C789.8,538.5 788.0,536.5 786.9,535.2C785.7,533.8 784.9,532.4 784.3,531.0C783.8,529.6 783.2,527.8 783.5,526.8Z"/>
<path d="M778.5,578.6C779.0,577.3 780.4,576.2 781.8,575.6C783.2,575.1 785.3,574.9 786.9,575.3C788.4,575.6 790.2,576.4 791.0,577.8C791.9,579.2 792.2,581.8 791.9,583.6C791.6,585.5 789.9,587.0 789.4,588.7C788.8,590.3 789.5,592.6 788.5,593.7C787.6,594.8 784.9,594.5 783.5,595.4C782.1,596.2 780.4,597.6 780.2,598.7C779.9,599.8 780.7,600.9 781.8,602.0C783.0,603.2 784.9,604.3 786.9,605.4C788.8,606.5 791.3,608.3 793.5,608.7C795.8,609.1 798.8,607.6 800.2,607.9C801.6,608.2 802.2,609.4 801.9,610.4C801.6,611.4 800.2,613.3 798.6,613.7C796.9,614.2 794.1,613.7 791.9,612.9C789.6,612.1 787.1,610.3 785.2,608.7C783.2,607.2 781.4,605.4 780.2,603.7C778.9,602.0 777.8,600.4 777.7,598.7C777.5,597.0 778.8,595.5 779.3,593.7C779.9,591.9 781.1,589.5 781.0,587.8C780.9,586.2 779.2,585.2 778.8,583.6C778.4,582.1 778.0,580.0 778.5,578.6Z"/>
<path d="M770.1,601.2C770.7,600.5 772.5,598.6 773.5,597.0C774.5,595.5 775.4,594.0 776.0,592.0C776.5,590.1 776.8,587.5 776.8,585.3C776.8,583.1 775.8,580.6 776.0,578.6C776.1,576.7 777.4,574.4 777.7,573.6"/>
<path d="M935.0,541.2C935.9,539.4 938.3,538.5 940.0,538.8C941.7,539.0 944.0,540.6 945.0,542.5C946.0,544.4 946.5,547.5 946.2,550.0C946.0,552.5 944.8,555.6 943.8,557.5C942.7,559.4 941.2,561.2 940.0,561.2C938.8,561.2 937.2,559.4 936.2,557.5C935.3,555.6 934.7,552.7 934.5,550.0C934.3,547.3 934.1,543.1 935.0,541.2Z"/>
<path d="M922.5,536.2C922.9,535.0 925.2,534.4 926.2,535.0C927.3,535.6 928.5,538.4 928.8,540.0C929.0,541.6 928.3,544.1 927.5,544.5C926.7,544.9 924.6,543.9 923.8,542.5C922.9,541.1 922.1,537.5 922.5,536.2Z"/>
<path d="M957.0,567.5C957.5,566.5 959.2,565.3 960.0,565.5C960.8,565.7 962.0,567.7 962.0,568.8C962.0,569.8 960.8,571.6 960.0,572.0C959.2,572.4 957.5,572.0 957.0,571.2C956.5,570.5 956.5,568.5 957.0,567.5Z"/>
<path d="M1077.5,591.2C1078.3,589.6 1080.6,587.3 1082.5,586.2C1084.4,585.2 1086.9,584.6 1088.8,585.0C1090.6,585.4 1092.3,586.9 1093.8,588.8C1095.2,590.6 1096.0,594.0 1097.5,596.2C1099.0,598.5 1101.0,600.6 1102.5,602.5C1104.0,604.4 1105.8,605.2 1106.2,607.5C1106.7,609.8 1105.8,615.4 1105.0,616.2C1104.2,617.1 1102.7,614.0 1101.2,612.5C1099.8,611.0 1098.5,608.5 1096.2,607.5C1094.0,606.5 1090.0,607.3 1087.5,606.2C1085.0,605.2 1082.9,602.9 1081.2,601.2C1079.6,599.6 1078.1,597.9 1077.5,596.2C1076.9,594.6 1076.7,592.9 1077.5,591.2Z"/>
<path d="M1117.5,633.8C1116.0,631.0 1110.6,635.0 1108.8,636.2C1106.9,637.5 1106.5,639.4 1106.2,641.2C1106.0,643.1 1106.7,645.8 1107.5,647.5C1108.3,649.2 1109.6,650.4 1111.2,651.2C1112.9,652.1 1116.5,655.4 1117.5,652.5C1118.5,649.6 1119.0,636.5 1117.5,633.8Z"/>
<path d="M908.8,553.8C907.3,553.8 902.9,553.6 900.0,553.8C897.1,553.9 893.3,554.9 891.2,554.5C889.2,554.1 888.6,551.8 887.5,551.2C886.4,550.7 885.2,550.2 884.5,551.2C883.8,552.3 883.8,555.1 883.0,557.5C882.2,559.9 881.3,563.0 880.0,565.5C878.7,568.0 875.9,570.3 875.0,572.5C874.1,574.7 874.1,576.7 874.5,578.8C874.9,580.8 876.4,582.7 877.5,585.0C878.6,587.3 880.5,590.0 881.2,592.5C882.0,595.0 882.1,597.5 882.0,600.0C881.9,602.5 880.8,605.0 880.5,607.5C880.2,610.0 880.5,612.5 880.0,615.0C879.5,617.5 878.1,619.6 877.5,622.5C876.9,625.4 876.8,629.4 876.2,632.5C875.8,635.6 875.3,638.5 874.5,641.2C873.7,644.0 872.2,646.0 871.2,648.8C870.3,651.5 869.2,655.0 868.8,657.5C868.3,660.0 868.8,662.7 868.8,663.8"/>
<path d="M891.2,667.5C893.1,666.7 898.5,664.4 902.5,662.5C906.5,660.6 910.8,658.4 915.0,656.2C919.2,654.1 923.3,651.8 927.5,649.5C931.7,647.2 936.2,644.7 940.0,642.5C943.8,640.3 947.5,638.3 950.0,636.2C952.5,634.2 953.1,632.5 955.0,630.0C956.9,627.5 959.2,624.2 961.2,621.2C963.3,618.3 965.4,615.4 967.5,612.5C969.6,609.6 972.1,606.7 973.8,603.8C975.4,600.8 976.8,597.5 977.5,595.0C978.2,592.5 978.4,590.2 978.0,588.8C977.6,587.3 976.3,587.1 975.0,586.2C973.7,585.4 971.2,585.0 970.0,583.8C968.8,582.5 967.7,580.6 967.5,578.8C967.3,576.9 968.1,574.8 968.8,572.5C969.4,570.2 970.6,567.3 971.2,565.0C971.9,562.7 972.7,560.6 972.5,558.8C972.3,556.9 970.8,555.4 970.0,553.8C969.2,552.1 968.0,551.0 968.0,548.8C968.0,546.5 970.5,542.1 970.0,540.0C969.5,537.9 967.1,537.7 965.0,536.2C962.9,534.8 960.0,532.8 957.5,531.2C955.0,529.7 952.5,528.1 950.0,527.0C947.5,525.9 945.0,524.8 942.5,524.5C940.0,524.2 937.5,524.3 935.0,525.0C932.5,525.7 930.4,527.6 927.5,528.8C924.6,529.9 920.4,531.3 917.5,532.0C914.6,532.7 911.6,532.3 910.0,533.0C908.4,533.7 907.8,534.9 908.0,536.2C908.2,537.6 909.9,539.8 911.2,541.2C912.6,542.7 914.8,544.0 916.2,545.0C917.7,546.0 919.4,547.1 920.0,547.5"/>
<path d="M338.8,258.8C340.2,260.6 344.4,265.8 347.5,270.0C350.6,274.2 354.4,279.6 357.5,283.8C360.6,287.9 364.2,292.3 366.2,295.0C368.3,297.7 367.3,297.5 370.0,300.0C372.7,302.5 378.3,307.2 382.5,310.0C386.7,312.8 390.8,314.9 395.0,317.0C399.2,319.1 403.3,320.8 407.5,322.5C411.7,324.2 415.8,325.8 420.0,327.0C424.2,328.2 428.3,329.2 432.5,330.0C436.7,330.8 440.8,331.4 445.0,332.0C449.2,332.6 453.3,332.8 457.5,333.8C461.7,334.7 466.7,336.1 470.0,337.5C473.3,338.9 475.2,340.5 477.5,342.0C479.8,343.5 481.9,345.4 483.8,346.2C485.6,347.1 487.3,347.3 488.8,347.0C490.2,346.7 491.6,345.9 492.5,344.5C493.4,343.1 493.4,340.3 494.2,338.8C495.1,337.2 494.9,336.2 497.5,335.0C500.1,333.8 505.8,332.4 510.0,331.2C514.2,330.1 518.8,328.8 522.5,328.0C526.2,327.2 527.9,326.8 532.5,326.2C537.1,325.7 547.1,324.8 550.0,324.5"/>
<path d="M573.8,325.8C575.6,326.2 581.5,327.3 585.0,328.2C588.5,329.2 591.2,330.1 595.0,331.2C598.8,332.4 603.3,333.8 607.5,335.0C611.7,336.2 617.9,337.9 620.0,338.8C622.1,339.6 616.7,338.3 620.0,340.0C623.3,341.7 633.3,345.8 640.0,348.8C646.7,351.8 654.2,355.6 660.0,358.0C665.8,360.4 669.2,361.2 675.0,363.0C680.8,364.8 689.6,367.0 695.0,368.8C700.4,370.5 707.2,373.5 707.5,373.8C707.8,374.0 697.6,370.2 697.0,370.0C696.4,369.8 701.4,371.4 703.7,372.5C705.9,373.6 708.1,375.2 710.4,376.7C712.6,378.2 714.5,380.2 717.1,381.7C719.6,383.2 722.9,384.5 725.4,385.9C727.9,387.3 729.9,388.8 732.1,390.1C734.3,391.3 736.6,393.0 738.8,393.4C741.0,393.8 743.3,392.3 745.5,392.6C747.7,392.9 750.2,394.0 752.2,395.1C754.1,396.2 755.8,397.9 757.2,399.3C758.6,400.7 759.8,402.2 760.5,403.4C761.2,404.6 761.9,405.8 761.4,406.5C760.8,407.2 759.0,407.6 757.2,407.6C755.4,407.6 753.0,406.9 750.5,406.5C748.0,406.0 744.9,405.6 742.1,405.1C739.4,404.6 736.3,404.3 733.8,403.4C731.3,402.6 729.2,401.4 727.1,400.1C725.0,398.8 723.2,397.0 721.2,395.9C719.3,394.9 716.4,394.1 715.4,393.7"/>
</g>
<g clip-path="url(#pc)" fill="none" stroke="#a8a8a8" stroke-width="1.8" stroke-linejoin="round">
<path d="M626.8,428.5L629.3,423.5L635.1,419.3L640.1,412.6L646.8,409.8L655.2,409.3L661.9,411.0L668.6,414.3L675.3,416.8L683.6,419.3L690.3,419.8L692.8,416.0L697.0,419.3L702.0,417.7L707.0,413.5L710.4,408.5L715.4,406.5L720.4,408.5L724.6,411.0L730.4,410.1L736.3,410.1L740.5,415.2L745.5,419.3L750.5,421.8L755.5,426.0L762.2,429.4L768.9,431.0L773.9,430.2L777.3,426.9L780.0,427.0"/>
<path d="M690.3,423.5L695.3,427.7L700.3,431.0L707.0,433.5L713.7,436.1L720.4,438.6L727.1,443.6L733.8,446.9L738.8,449.4L743.8,450.3L747.2,448.6L750.5,446.9L753.8,448.6L757.2,451.9L760.5,453.6L763.9,457.0L768.9,458.6L773.9,457.8L777.3,455.3L773.9,451.9L774.7,445.3L778.9,443.6L780.0,443.4"/>
<path d="M700.3,431.0L698.7,436.9L697.8,443.6L696.2,448.6L695.3,453.6L696.2,460.3L695.3,465.3L697.0,470.3L702.0,472.0L707.0,473.7L713.7,475.4L720.4,474.5L727.1,473.7L732.1,472.0L733.8,468.7L730.4,465.3L728.8,460.3L725.4,457.0L727.1,453.6L730.4,451.9L732.1,446.9"/>
<path d="M630.9,438.6L631.8,445.3L632.6,453.6L634.3,462.0L636.0,470.3L635.5,478.7L634.3,485.4L630.1,488.7L626.8,490.4L628.4,495.4L631.5,500.0"/>
<path d="M695.3,463.6L692.0,461.1L688.6,462.8L683.6,460.3L678.6,457.0L673.6,458.6L666.9,459.5L663.5,460.3L664.4,467.0L662.7,473.7L663.5,480.4L661.9,485.4L659.4,490.4L656.9,493.7L650.2,497.1L645.8,500.0"/>
<path d="M707.0,473.7L707.9,478.7L703.7,480.4L698.7,483.7L693.6,485.4L689.5,488.7L687.8,493.7L688.6,500.0"/>
<path d="M656.9,493.7L661.9,497.1L664.8,500.0"/>
<path d="M760.5,453.6L761.4,460.3L765.6,463.6L767.2,468.7L764.7,473.7L765.6,480.4L767.2,485.4L762.2,485.4L758.9,488.7L755.5,493.7L752.2,497.1L753.1,500.0"/>
<path d="M780.0,488.0L777.3,492.1L779.8,493.7"/>
<path d="M780.0,457.3L777.3,455.3"/>
<path d="M618.4,413.5L620.9,411.8L622.6,415.2L620.1,417.7"/>
<path d="M623.4,411.0L625.9,412.6"/>
<path d="M675.3,411.0L678.6,412.6L681.9,414.3"/>
<path d="M633.4,500.0L638.5,503.3L643.5,508.4L642.6,516.7L638.5,523.4L633.4,530.1L628.4,535.1L621.7,538.5L615.1,541.8L614.2,545.2L620.1,541.8L625.1,543.5L626.8,550.2L633.4,555.2L640.1,560.2L646.8,565.2L650.2,570.2L651.0,578.6L650.2,585.3L646.8,590.3L648.5,592.8"/>
<path d="M650.2,585.3L641.8,583.6L633.4,582.8L626.8,581.9L623.4,583.6L620.1,588.6L613.4,590.3L606.7,591.1L600.0,592.0"/>
<path d="M621.7,603.7L628.4,608.7L633.4,615.4L635.1,620.4L635.9,630.0"/>
<path d="M642.6,545.2L648.5,540.1L653.5,536.8L656.9,530.1L660.2,523.4L663.5,518.4L670.2,518.4L675.3,520.9L678.6,515.9L676.9,511.7L671.9,508.4L666.9,505.0L663.5,500.0"/>
<path d="M678.6,512.5L685.3,511.7L690.3,513.4L693.6,516.7L698.7,521.7L703.7,526.8L708.7,530.9L713.7,534.3L718.7,533.4L723.7,529.3L727.1,525.1L733.0,523.6"/>
<path d="M718.7,533.4L719.6,540.1L723.7,545.2L728.8,541.8L732.1,538.5L733.0,539.8"/>
<path d="M723.7,545.2L720.4,551.8L718.7,560.2L720.4,566.9L715.4,568.6L712.0,573.6L713.7,578.6L708.7,581.9L705.4,587.0L700.3,590.3L698.7,593.6L702.0,597.0L708.7,600.3L715.4,603.7L718.7,606.2"/>
<path d="M648.5,592.8L655.2,590.3L663.5,592.0L670.2,593.6L675.3,595.3L680.3,591.1L688.6,590.3L697.0,591.1L700.3,590.3"/>
<path d="M718.7,606.2L713.7,607.0L708.7,610.4L703.7,613.7L700.3,618.7L695.3,623.7L693.6,628.8L696.1,630.0"/>
<path d="M658.5,615.4L666.9,620.4L675.3,622.1L681.9,619.6L685.3,623.7L688.6,628.8L693.6,628.8"/>
<path d="M693.6,628.8L692.8,630.0"/>
<path d="M718.7,606.2L717.9,613.7L713.7,620.4L712.0,623.7L717.1,625.4L721.6,630.0"/>
<path d="M740.6,630.0L733.9,635.0L727.2,640.0L723.0,642.5L720.5,638.4L715.5,635.0L710.5,634.2L706.3,638.4L705.5,643.4L708.0,650.1L710.5,656.8L708.8,663.4L705.5,670.1L700.5,678.5L695.5,686.9L690.4,693.5L685.4,698.6L682.1,703.6L678.7,710.3L675.4,720.3L672.0,728.7L668.7,733.7L665.4,730.3L662.0,723.6L658.7,717.0L655.3,712.8L650.3,711.1L643.6,711.9L638.6,711.1L641.9,706.9L642.8,700.2L640.3,693.5L638.6,690.2L640.3,686.9L638.6,680.2L635.3,676.0L630.2,673.1L627.7,671.0"/>
<path d="M633.6,630.0L631.9,636.7L626.9,643.4L626.1,651.7L630.2,658.4L631.1,665.1L627.7,671.0"/>
<path d="M652.8,738.7L656.2,732.0L659.5,733.7L662.0,737.9L658.7,741.2L653.6,743.4Z"/>
<path d="M635.3,638.4L643.6,643.4L652.0,647.6L658.7,650.1L663.7,651.7L667.0,656.8L668.7,651.7L673.7,650.1L673.7,643.4L672.0,637.5L677.1,635.0L683.7,638.4L687.1,640.0L689.6,635.0L690.4,630.0"/>
<path d="M672.0,687.7L677.1,688.9L682.1,691.0L684.6,698.6"/>
<path d="M641.1,749.6L642.3,752.1"/>
<path d="M780.0,426.9L785.0,429.4L790.0,435.2L795.1,441.9L801.7,446.1L808.4,447.8L815.1,450.3L821.8,449.4L825.2,446.9L824.3,453.6L820.1,457.0L813.4,460.3L810.9,461.1L811.8,463.6"/>
<path d="M780.0,445.3L786.7,444.4L791.7,441.9L790.0,436.9"/>
<path d="M786.7,460.3L793.4,461.1L796.7,458.6L801.7,461.1L806.8,465.3L813.4,465.3L818.5,466.2L820.1,473.7L821.8,477.0L825.2,478.7L823.5,485.4L822.6,488.7L828.5,490.4L833.5,492.9L833.5,493.0"/>
<path d="M786.7,460.3L783.3,467.0L784.2,477.0L781.7,487.1L783.7,493.0"/>
<path d="M803.4,467.0L801.7,473.7L796.7,480.4L793.4,488.7L792.7,493.0"/>
<path d="M776.0,493.3L776.4,493.0"/>
<path d="M782.8,493.0L783.5,495.0L786.9,500.0L787.7,505.1L791.9,503.4L792.7,498.4L794.4,493.3L794.5,493.0"/>
<path d="M791.9,503.4L794.4,508.4L798.6,513.4L803.6,515.9L810.3,515.1L817.0,514.7L823.6,515.9L828.7,518.4L832.0,523.4L837.0,525.1L840.4,520.9L845.4,521.8L847.1,526.0L850.4,530.1L857.1,525.1L863.8,524.3L867.1,523.4"/>
<path d="M831.5,493.0L832.8,496.7L838.7,499.2L845.4,501.7L853.7,505.1L860.4,507.6L865.5,505.9L873.8,506.7L876.3,509.2L872.1,513.4L867.1,516.8L865.5,520.1L867.1,523.4L870.5,528.5L875.5,535.2L880.5,538.5L887.2,541.8L893.9,546.9L897.0,549.2"/>
<path d="M862.1,496.7L863.8,501.7L865.5,505.9"/>
<path d="M803.6,515.9L796.9,516.8L794.4,523.4L792.7,530.1L793.5,536.8L796.9,541.8L801.9,546.9L806.1,551.9L808.6,556.9L806.1,561.9L805.3,565.3"/>
<path d="M808.6,556.9L815.3,555.2L822.0,553.5L828.7,551.9L833.7,550.2L837.0,553.5L840.4,548.5L843.7,540.2L845.4,533.5L847.1,526.0"/>
<path d="M771.8,521.8L773.5,528.5L772.6,536.8L770.1,540.2L767.6,546.9L766.8,553.5L769.3,560.2L770.1,565.3L773.5,567.8L780.2,570.3L786.9,571.9L791.9,575.3L796.9,577.0L800.2,570.3L805.3,565.3"/>
<path d="M771.8,521.8L778.5,523.4L783.5,520.1L786.9,523.4L791.9,530.1"/>
<path d="M805.3,565.3L810.3,570.3L815.3,575.3L820.3,580.3L827.0,583.6L833.7,584.5L840.4,578.6L847.1,578.6L852.1,580.3L855.4,587.0L860.4,592.0L862.1,595.4L865.5,590.3L870.5,587.0L877.2,585.3L880.5,590.3"/>
<path d="M815.3,575.3L817.0,583.6L818.6,590.3L817.8,597.0L821.1,603.7L827.0,608.7L832.0,613.7L834.5,618.8"/>
<path d="M835.4,601.2L837.0,605.4L843.7,606.2L848.7,607.1L848.7,612.1"/>
<path d="M791.9,575.3L791.0,582.0L790.2,590.3L791.0,598.7L793.5,603.7L798.6,608.7L803.6,615.4L805.3,620.4L801.9,623.8L803.6,630.5L806.9,633.8L811.9,638.8L813.6,645.0"/>
<path d="M770.1,565.3L768.5,571.9L763.4,575.3L760.1,580.3L753.4,581.1L755.1,575.3L753.4,570.3L748.4,568.6L743.4,563.6L738.4,560.2L736.7,555.2L735.0,548.5L735.9,541.8L733.3,537.7"/>
<path d="M753.4,581.1L756.8,587.0L755.1,592.0L758.4,598.7L763.4,603.7L770.1,605.4L775.2,610.4L776.8,615.4L785.2,613.7L791.9,610.4L793.5,603.7"/>
<path d="M736.7,523.4L740.0,520.1L746.7,515.1L751.7,508.4L755.1,501.7L755.9,495.0L750.1,496.7"/>
<path d="M897.0,563.8L892.2,568.6L888.9,575.3L887.2,583.6L883.8,588.7L880.5,590.3L883.8,597.0L881.3,605.4L880.5,610.4"/>
<path d="M740.0,628.8L740.0,628.8L746.7,627.1L751.7,622.1L755.1,617.9L760.1,617.9L765.1,620.4L767.6,627.1L768.5,633.8L766.8,638.8L771.8,643.8L775.2,647.2L785.2,649.7L796.9,648.9L806.9,648.0L817.0,645.0L822.0,637.2L827.0,628.8L832.0,620.4L834.5,618.8L840.4,617.9L847.1,612.9L853.7,612.9L862.1,613.7L868.8,614.6L873.8,619.6L878.8,621.3L882.2,616.3L885.5,617.9L890.5,621.3L897.2,619.6L905.6,617.9L913.9,618.8L917.3,616.3L924.0,615.4L930.0,614.6"/>
<path d="M897.0,549.8L897.5,550.0L907.5,553.8"/>
<path d="M915.0,545.0L925.0,547.5L935.0,548.8"/>
<path d="M907.5,553.8L900.0,562.5L897.0,565.0"/>
<path d="M900.0,562.5L901.2,572.5L905.0,582.5L907.5,592.5L911.2,602.5L917.5,595.0L922.5,587.5L927.5,575.0L927.5,566.2L922.5,562.5"/>
<path d="M922.5,587.5L930.0,592.5L936.2,596.2L942.5,595.0L943.8,602.5L942.5,610.0L940.0,616.2L942.5,622.5"/>
<path d="M942.5,610.0L950.0,600.0L956.2,590.0L960.0,585.0L962.5,577.5L967.5,575.0L970.0,567.5L973.8,566.2L972.5,555.0L971.2,548.8L975.0,545.0L978.8,542.5"/>
<path d="M960.0,585.0L965.0,595.0L970.0,601.2L970.0,610.0L966.2,616.2L965.0,622.5"/>
<path d="M912.5,611.2L917.5,616.2"/>
<path d="M762.7,484.8L766.8,487.5L773.4,488.2L776.1,488.9L778.1,492.9L779.5,489.5L781.5,487.5"/>
</g>
<g clip-path="url(#pc2)" fill="none" stroke="#000" stroke-width="1.25" stroke-linejoin="round">
<path d="M34.7,199.5L35.0,206.2L35.0,205.4L40.0,203.4L46.7,204.0L52.6,207.0L56.4,210.4L53.4,214.1L46.7,213.4L49.2,217.9L54.2,221.3L55.1,215.4L60.1,214.6L65.1,218.7L62.6,223.8L66.0,227.9L73.8,228.3L78.2,224.6L70.1,222.1L68.8,218.7L75.2,216.7L83.5,216.7L91.0,219.6L98.6,224.6L106.9,228.8L113.6,232.1L117.0,237.1L117.8,243.0L122.0,240.5L127.0,242.7L133.7,242.7L140.4,240.5L145.4,242.5L150.4,239.1L155.4,240.2L162.1,238.0L166.3,240.5L169.6,245.2L175.5,246.3L174.6,245.9L177.9,249.2L179.1,253.4L177.9,258.4L175.4,264.3L172.1,270.1L167.1,267.1L162.9,270.1L163.7,274.3L167.1,275.2L173.7,274.3L177.9,274.8L181.3,278.5L182.9,283.5L178.8,283.2L174.6,278.5L167.1,279.0L160.4,279.3L158.7,283.5L157.4,291.9L161.2,297.7L167.1,296.9L171.2,292.7L174.6,289.4L177.1,293.5L180.4,298.6L187.1,298.9L193.8,295.2L198.8,293.2L203.8,294.4L206.4,299.4L210.5,303.6L216.4,302.7L213.0,298.6L217.2,295.7L224.7,296.1L228.9,300.2L233.9,299.4L239.8,302.7L244.0,299.4L250.0,299.4L251.0,299.7L256.9,303.4L263.5,305.9L270.2,309.3L277.8,310.9L279.4,317.6L287.0,322.6L293.6,328.5L298.7,335.2L302.0,341.9L308.7,346.9L317.1,351.1L322.9,355.3L331.3,355.6L336.3,352.7L342.1,354.4L347.2,360.3L350.5,368.6L347.2,373.6L342.1,377.8L339.6,382.8L336.3,385.7L328.8,385.4L322.1,385.4L315.4,388.4L307.0,388.7L298.7,389.5L290.3,389.5L280.3,390.0L271.1,391.7L263.5,397.9L256.9,400.1L251.8,407.1L248.5,409.6L244.3,407.9L239.3,407.1L236.0,412.1L231.8,412.9L230.9,403.7L226.8,408.4L222.6,409.6L225.1,405.4L230.9,401.2L227.6,397.1L233.4,395.4L236.5,389.5L238.8,395.4L236.0,404.6L231.8,412.9L222.6,409.6L215.1,412.1L206.7,413.8L200.0,412.9"/>
<path d="M180.4,287.7L187.1,285.2L190.5,289.4L185.5,291.5Z"/>
<path d="M388.8,590.9L394.6,587.6L400.5,589.3L401.3,592.6L395.5,596.0L390.5,594.3Z"/>
<path d="M400.5,663.7L407.2,665.4L413.0,664.5L416.4,667.0L414.7,670.4L408.9,670.4L403.0,667.9Z"/>
<path d="M401.3,599.3L405.5,597.6L410.5,599.3L407.2,601.8Z"/>
<path d="M34.7,632.3L37.5,636.1L40.0,640.3L46.7,641.1L51.7,643.6L56.8,647.0L63.4,649.5L70.1,650.3L75.2,649.5L80.2,652.8L87.7,655.4L91.9,660.4L95.2,667.1L98.6,672.1L101.1,678.8L103.6,685.5L107.8,689.1L102.7,693.8L96.9,695.5L91.9,694.1L87.7,698.0L81.8,695.8L76.8,696.8L70.1,698.0L63.4,696.3L57.6,693.0L53.4,688.8L48.4,687.1L41.7,686.8L36.7,688.0L41.7,685.5L37.5,682.1L35.0,681.8"/>
<path d="M40.0,406.4L46.7,404.2L53.4,403.7L63.4,405.5L73.4,403.3L81.8,401.7L88.5,403.0L95.2,401.7L100.2,400.0L106.9,398.7L115.3,400.0L123.6,401.7L131.1,403.0L140.3,402.5L148.7,402.0L157.1,402.5L163.7,404.2L168.8,407.5L175.5,410.9L182.1,413.0L187.2,414.7L193.8,413.4L200.5,412.5L207.2,414.2L213.9,413.0L220.6,411.4"/>
<path d="M486.9,387.6L491.9,385.1L500.3,384.2L507.0,384.7L513.6,388.4L520.3,391.7L525.4,395.1L527.0,397.1L522.0,397.6L513.6,395.9L503.6,393.1L495.3,390.9L488.6,389.7Z"/>
<path d="M600.0,436.3L595.6,437.7L593.1,434.4L590.6,436.9L585.6,432.7L580.5,432.2L577.2,427.7L572.2,427.7L567.2,429.9L563.0,431.0L562.1,436.9L560.5,433.5L560.1,428.5L556.3,424.3L550.4,421.8L544.6,420.2L538.7,417.7L533.7,414.3L527.0,411.0L520.3,407.6L512.0,405.1L505.3,403.9L498.6,405.1L490.2,407.6L481.9,408.5L471.8,408.1L464.3,407.1L458.5,411.0L451.8,415.2L445.1,417.7L439.2,419.3L434.2,420.2L436.7,422.2L433.4,426.0L430.0,431.0L428.7,436.9L430.0,441.9L434.2,446.1L440.1,448.6L446.8,448.9L453.4,448.6L457.6,447.8L458.8,444.9L462.6,447.8L466.8,450.3L471.8,447.8L476.9,449.4L481.9,451.9L486.9,455.3L491.9,458.6L496.9,462.0L501.9,465.3L507.0,469.5L511.1,473.7L517.8,474.0L520.0,479.5L516.2,483.7L511.1,486.2L512.8,490.4L515.3,494.6L512.0,497.9L510.5,500.0"/>
<path d="M630.9,438.6L631.8,445.3L632.6,453.6L634.3,462.0L636.0,470.3L635.5,478.7L634.3,485.4L630.1,488.7"/>
<path d="M600.0,434.4L606.7,434.9L613.4,436.9L615.1,441.9L620.1,443.6L621.7,439.4L616.7,437.7L611.7,438.6L612.5,441.9L616.7,444.4L620.9,445.3L620.1,437.7L626.8,438.2L633.4,438.9L630.9,433.5L626.8,428.5L629.3,423.5L635.1,419.3L640.1,412.6L646.8,409.8L655.2,409.3L661.9,411.0L668.6,414.3L675.3,416.8L683.6,419.3L690.3,419.8L692.8,416.0L697.0,419.3L702.0,417.7L707.0,413.5L710.4,408.5L715.4,406.5L720.4,408.5L724.6,411.0L730.4,410.1L736.3,410.1L740.5,415.2L745.5,419.3L750.5,421.8L755.5,426.0L762.2,429.4L768.9,431.0L773.9,430.2L777.3,426.9L780.0,427.0"/>
<path d="M448.4,546.8L450.9,543.8L456.8,541.8L463.4,543.8L471.8,547.7L480.2,551.8L488.5,556.0L496.9,559.4L501.9,562.7L505.3,566.9L506.9,573.6L505.3,578.9L501.9,577.3L496.9,575.3L488.5,573.6L480.2,571.1L473.5,566.9L466.8,562.7L458.4,560.2L452.6,555.2L449.2,551.0Z"/>
<path d="M508.6,500.0L506.9,505.0L510.3,510.0L513.6,515.1L517.8,518.4L517.0,523.4L510.3,524.7L505.3,525.9L504.4,530.9L508.6,535.1L512.8,540.1L517.0,544.3L522.0,547.7L526.2,551.8L530.3,557.7L533.7,563.5L537.9,568.6L543.7,571.9L547.9,576.9L553.7,578.6L558.8,580.3L562.1,582.8L559.6,587.0L560.4,593.6L559.6,600.3L555.4,602.0L550.4,601.2L543.7,600.3L537.0,600.0L530.3,600.3L526.2,602.8L523.6,607.9L521.1,612.9L517.0,617.1L510.3,617.9L503.6,616.2L496.9,617.1L491.9,615.4L485.2,613.7L478.5,614.0L471.8,615.1L467.6,612.0L460.1,609.5L453.4,610.4L446.7,608.7L438.4,606.2L430.0,605.0"/>
<path d="M594.7,590.3L593.9,597.0L595.6,602.0L598.9,605.4L602.2,608.7L605.6,611.2L608.1,608.7L605.6,603.7L602.2,600.3L598.9,593.6L597.2,589.5Z"/>
<path d="M628.4,545.2L631.8,551.8L633.4,560.2L632.6,568.6L630.1,575.3L626.8,580.3L623.4,581.9"/>
<path d="M600.0,590.3L605.0,593.6L608.4,600.3L607.5,607.0L605.0,610.4L600.0,605.4"/>
<path d="M621.7,603.7L628.4,606.2L636.8,600.3L643.5,603.7L650.2,608.7L656.9,612.0L657.7,616.2L653.5,618.7L646.8,619.6L640.1,617.1L633.4,612.0L626.8,608.7Z"/>
<path d="M740.6,630.0L733.9,635.0L727.2,640.0L723.0,642.5L720.5,638.4L715.5,635.0L710.5,634.2L706.3,638.4L705.5,643.4L708.0,650.1L710.5,656.8L708.8,663.4L705.5,670.1L700.5,678.5L695.5,686.9L690.4,693.5L685.4,698.6L682.1,703.6L678.7,710.3L675.4,720.3L672.0,728.7L668.7,733.7L665.4,730.3L662.0,723.6L658.7,717.0L655.3,712.8L650.3,711.1L643.6,711.9L638.6,711.1L641.9,706.9L642.8,700.2L640.3,693.5L638.6,690.2L640.3,686.9L638.6,680.2L635.3,676.0L630.2,673.1L627.7,671.0L625.2,670.1L621.0,665.1L616.9,658.4L611.8,653.4L605.2,649.2L596.8,645.9L590.1,644.7L580.1,645.9L570.0,646.7L560.0,645.1"/>
<path d="M654.5,737.0L656.7,733.3L659.0,735.0L660.3,737.9L657.8,740.0Z"/>
<path d="M430.0,641.7L433.3,642.5L436.7,640.0L441.7,641.7L440.0,645.9L436.7,646.7L442.5,645.9L448.4,645.6L455.1,646.4L463.4,648.4L471.8,650.9L480.2,652.6L488.5,654.7L496.9,657.6L503.6,658.1L510.3,656.8L517.0,655.1L523.6,653.4L530.3,653.7L536.2,654.2L535.7,646.4L540.4,647.1L547.1,646.7L555.4,645.9L560.0,645.6"/>
<path d="M780.0,426.9L785.0,429.4L790.0,435.2L795.1,441.9L801.7,446.1L808.4,447.8L815.1,450.3L821.8,449.4L825.2,446.9L826.8,443.6L831.8,441.6L838.5,441.6L843.5,445.3L846.9,448.6L848.6,453.6L846.9,460.3L849.4,465.3L849.4,472.0L851.1,478.7L853.6,485.4L858.6,492.1L863.6,496.3L868.6,497.9L875.3,496.3L882.0,494.6L887.0,491.2L893.7,490.4L900.4,491.2L907.1,493.4L912.1,494.6L917.1,490.4L922.1,487.1L925.5,485.7L927.2,488.7L924.6,492.1L923.0,496.3L927.2,497.1L930.5,495.1L933.8,494.6L934.7,497.9L931.3,502.1L928.0,506.3L927.2,512.1L922.1,511.8L913.8,509.6L903.7,510.5L893.7,508.8L885.4,507.1L879.5,505.8L878.7,512.1L878.7,520.5"/>
<path d="M740.0,628.8L740.0,628.8L746.7,627.1L751.7,622.1L755.1,617.9L760.1,617.9L765.1,620.4L767.6,627.1L768.5,633.8L766.8,638.8L771.8,643.8L775.2,647.2L785.2,649.7L796.9,648.9L806.9,648.0L817.0,645.0L822.0,637.2L827.0,628.8L832.0,620.4L834.5,618.8L840.4,617.9L847.1,612.9L853.7,612.9L862.1,613.7L868.8,614.6L873.8,619.6L878.8,621.3L882.2,616.3L885.5,617.9L890.5,621.3L897.2,619.6L905.6,617.9L913.9,618.8L917.3,616.3L924.0,615.4L930.0,614.6"/>
<path d="M1077.0,665.0L1080.5,662.0L1087.0,663.0L1086.2,668.8L1080.0,668.8Z"/>
<path d="M878.0,520.0L877.5,525.0L885.0,525.0L892.5,523.8L900.0,525.0L906.2,523.0L911.2,527.5L917.5,531.2L925.0,532.5L933.8,531.2L936.2,535.0L942.5,537.5L950.0,539.5L953.8,536.2L958.8,533.8L965.0,536.2L972.5,540.0L980.0,542.5L987.5,548.8L995.0,557.5L1002.5,565.0L1010.0,572.5L1017.5,578.8L1025.0,585.0L1030.0,590.0L1032.0,595.0L1028.8,602.5L1025.0,608.8L1021.2,613.8L1018.8,620.0L1017.5,627.5L1012.5,630.5L1005.0,628.8L998.8,625.0L997.5,630.0L1000.0,636.2L996.2,642.5L993.8,648.8L990.0,649.5L981.2,648.8L977.5,642.5L973.8,635.0L970.0,628.8L965.0,623.8L957.5,620.0L950.0,622.5L940.0,622.5L932.5,618.8L927.5,615.5L920.0,616.2L912.5,618.8L902.5,620.0L892.5,621.8L885.0,618.8L880.0,615.5L877.5,620.0L873.8,617.5L867.5,614.5L860.0,613.8L850.0,612.5L840.0,616.2"/>
<path d="M977.5,651.2L982.5,649.5L990.0,651.2L997.5,655.0L1002.5,658.8L1002.0,662.5L995.0,662.5L987.5,661.2L980.0,657.5Z"/>
<path d="M946.2,615.0L950.0,612.5L956.2,615.5L957.0,619.5L951.2,619.5L947.0,618.0Z"/>
<path d="M949.5,626.2L952.5,625.0L953.8,629.5L951.2,630.0Z"/>
<path d="M400.0,253.8L405.0,243.8L414.5,238.0L422.5,229.5L430.0,229.5L435.5,226.2L441.2,230.0L446.2,235.0L450.0,237.0L458.8,233.0L467.0,230.0L468.8,223.8L472.5,217.5L476.2,210.5L480.5,208.8L482.5,217.5L481.2,230.0L476.2,241.2L471.2,250.0L466.2,258.8L458.8,260.5L448.8,263.8L437.5,265.5L427.5,267.0L415.0,265.0L402.5,265.0Z"/>
<path d="M475.5,186.2L483.8,178.0L492.5,185.0L485.0,189.5L478.8,195.5Z"/>
<path d="M562.0,135.5L570.0,143.8L580.5,143.0L576.2,148.8L565.0,147.5Z"/>
<path d="M597.0,124.5L600.0,121.2L610.0,122.0L612.5,126.2L611.2,132.5L613.8,136.2L607.5,135.5L605.0,130.0L601.2,129.5Z"/>
<path d="M546.2,158.0L548.0,165.5"/>
<path d="M600.0,121.2L608.8,122.0L612.0,124.5L610.5,130.0L613.8,136.2L608.0,135.8L606.2,128.8L602.0,130.5L600.0,128.8"/>
<path d="M618.0,135.5L626.2,137.5L637.5,137.5L640.5,142.5L642.0,150.0L632.5,146.2L625.0,145.8L619.5,143.8Z"/>
<path d="M649.5,150.5L656.2,153.8L661.2,155.0L663.8,159.2L656.2,156.2L652.5,153.8Z"/>
<path d="M701.0,184.5L702.5,191.8"/>
<path d="M450.0,609.8L442.3,606.8L433.9,605.2L425.6,604.8L418.9,603.8L417.2,606.8L410.5,607.7L406.4,606.8L404.7,603.5L406.4,600.1L412.2,600.1L416.4,597.6L415.6,595.5L408.9,596.0L403.0,598.8L397.2,600.1L392.1,601.8L387.1,601.0L382.1,598.5L375.4,596.0L370.4,594.3L363.7,593.4L358.7,591.8L353.7,587.6L348.7,585.1L342.0,583.4L335.3,584.7L328.6,585.9L321.9,587.6L317.7,590.9L315.2,595.1L314.4,601.8L312.7,608.5L310.5,615.2L309.9,621.0L312.7,626.9L316.1,630.2L320.2,634.4L325.3,637.8L330.3,636.9L335.3,634.7L340.3,635.3L345.3,639.4L350.3,641.9L357.0,645.3L362.0,649.5L367.1,654.5L370.4,658.7L373.7,663.7L376.3,668.7L377.9,673.4L382.1,674.5L387.1,674.5L391.3,672.0L389.6,668.7L386.3,664.5L384.6,660.3L387.1,656.2L392.1,652.8L397.2,649.5L400.5,646.1L403.0,647.8L405.5,644.4L408.0,646.1L410.5,642.8L413.0,645.3L415.6,641.9L418.1,644.4L420.6,641.6L423.9,643.6L427.3,641.1L430.6,643.6L433.9,641.6L436.5,646.1L439.8,643.6L442.3,647.0L444.8,644.4L450.0,645.6"/>
</g>
<text class="cl" x="128.2" y="257.3" textLength="17.6" lengthAdjust="spacingAndGlyphs">19</text>
<text class="cl" x="318.7" y="261.4" textLength="17.6" lengthAdjust="spacingAndGlyphs">19</text>
<text class="cl" x="245.5" y="363.3" textLength="17.6" lengthAdjust="spacingAndGlyphs">19</text>
<text class="cl" x="553.0" y="330.9" textLength="17.6" lengthAdjust="spacingAndGlyphs">19</text>
<text class="cl" x="694.2" y="397.4" textLength="17.6" lengthAdjust="spacingAndGlyphs">19</text>
<text class="cl" x="124.8" y="443.4" textLength="17.6" lengthAdjust="spacingAndGlyphs">19</text>
<text class="cl" x="323.7" y="525.4" textLength="33.6" lengthAdjust="spacingAndGlyphs">20.5</text>
<text class="cl" x="244.9" y="649.4" textLength="17.6" lengthAdjust="spacingAndGlyphs">19</text>
<text class="cl" x="429.4" y="675.4" textLength="17.6" lengthAdjust="spacingAndGlyphs">19</text>
<text class="cl" x="64.7" y="692.7" textLength="17.6" lengthAdjust="spacingAndGlyphs">19</text>
<text class="cl" x="164.9" y="726.9" textLength="17.6" lengthAdjust="spacingAndGlyphs">19</text>
<text class="cl" x="631.7" y="458.4" textLength="33.6" lengthAdjust="spacingAndGlyphs">20.5</text>
<text class="cl" x="727.5" y="500.1" textLength="17.6" lengthAdjust="spacingAndGlyphs">19</text>
<text class="cl" x="553.3" y="542.4" textLength="17.6" lengthAdjust="spacingAndGlyphs">19</text>
<text class="cl" x="545.3" y="596.7" textLength="33.6" lengthAdjust="spacingAndGlyphs">20.5</text>
<text class="cl" x="498.5" y="654.8" textLength="33.6" lengthAdjust="spacingAndGlyphs">20.5</text>
<text class="cl" x="630.5" y="561.6" textLength="17.6" lengthAdjust="spacingAndGlyphs">19</text>
<text class="cl" x="670.6" y="555.7" textLength="17.6" lengthAdjust="spacingAndGlyphs">19</text>
<text class="cl" x="630.5" y="606.7" textLength="17.6" lengthAdjust="spacingAndGlyphs">19</text>
<text class="cl" x="772.2" y="629.7" textLength="17.6" lengthAdjust="spacingAndGlyphs">19</text>
<text class="cl" x="654.4" y="672.4" textLength="33.6" lengthAdjust="spacingAndGlyphs">17.5</text>
<text class="cl" x="657.4" y="687.4" textLength="17.6" lengthAdjust="spacingAndGlyphs">19</text>
<text class="cl" x="911.2" y="561.9" textLength="17.6" lengthAdjust="spacingAndGlyphs">19</text>
<text class="cl" x="871.2" y="678.9" textLength="17.6" lengthAdjust="spacingAndGlyphs">19</text>
<text class="ax" x="4.0" y="121.1" textLength="21.6" lengthAdjust="spacingAndGlyphs">22N</text>
<text class="ax" x="-8.0" y="191.4" textLength="33.6" lengthAdjust="spacingAndGlyphs">21.5N</text>
<text class="ax" x="4.0" y="261.7" textLength="21.6" lengthAdjust="spacingAndGlyphs">21N</text>
<text class="ax" x="-8.0" y="331.9" textLength="33.6" lengthAdjust="spacingAndGlyphs">20.5N</text>
<text class="ax" x="4.0" y="402.2" textLength="21.6" lengthAdjust="spacingAndGlyphs">20N</text>
<text class="ax" x="-8.0" y="472.5" textLength="33.6" lengthAdjust="spacingAndGlyphs">19.5N</text>
<text class="ax" x="4.0" y="542.8" textLength="21.6" lengthAdjust="spacingAndGlyphs">19N</text>
<text class="ax" x="-8.0" y="613.0" textLength="33.6" lengthAdjust="spacingAndGlyphs">18.5N</text>
<text class="ax" x="4.0" y="683.3" textLength="21.6" lengthAdjust="spacingAndGlyphs">18N</text>
<text class="ax" x="-8.0" y="753.6" textLength="33.6" lengthAdjust="spacingAndGlyphs">17.5N</text>
<text class="ax" x="4.0" y="823.9" textLength="21.6" lengthAdjust="spacingAndGlyphs">17N</text>
<text class="ax" x="-8.0" y="894.1" textLength="33.6" lengthAdjust="spacingAndGlyphs">16.5N</text>
<text class="ax" x="120.9" y="919.4" textLength="21.6" lengthAdjust="spacingAndGlyphs">76W</text>
<text class="ax" x="238.2" y="919.4" textLength="21.6" lengthAdjust="spacingAndGlyphs">75W</text>
<text class="ax" x="355.4" y="919.4" textLength="21.6" lengthAdjust="spacingAndGlyphs">74W</text>
<text class="ax" x="472.6" y="919.4" textLength="21.6" lengthAdjust="spacingAndGlyphs">73W</text>
<text class="ax" x="589.9" y="919.4" textLength="21.6" lengthAdjust="spacingAndGlyphs">72W</text>
<text class="ax" x="707.1" y="919.4" textLength="21.6" lengthAdjust="spacingAndGlyphs">71W</text>
<text class="ax" x="824.4" y="919.4" textLength="21.6" lengthAdjust="spacingAndGlyphs">70W</text>
<text class="ax" x="941.6" y="919.4" textLength="21.6" lengthAdjust="spacingAndGlyphs">69W</text>
<text class="ax" x="1058.9" y="919.4" textLength="21.6" lengthAdjust="spacingAndGlyphs">68W</text>
<rect x="1144.3" y="98.7" width="18.4" height="805.4" fill="#fff" stroke="#d2d2d2" stroke-width="1.4"/>
<rect x="1145.0" y="99.60" width="17.0" height="28.70" fill="#be7d00"/>
<rect x="1145.0" y="128.30" width="17.0" height="28.70" fill="#dc9100"/>
<rect x="1145.0" y="157.00" width="17.0" height="28.70" fill="#ffbe00"/>
<rect x="1145.0" y="185.70" width="17.0" height="28.70" fill="#ffff00"/>
<rect x="1145.0" y="214.40" width="17.0" height="28.70" fill="#b4ff00"/>
<rect x="1145.0" y="243.10" width="17.0" height="28.70" fill="#8cd700"/>
<rect x="1145.0" y="271.80" width="17.0" height="28.70" fill="#6eaa00"/>
<rect x="1145.0" y="300.50" width="17.0" height="28.70" fill="#00aa0a"/>
<rect x="1145.0" y="329.20" width="17.0" height="28.70" fill="#00b414"/>
<rect x="1145.0" y="357.90" width="17.0" height="28.70" fill="#00a01e"/>
<rect x="1145.0" y="386.60" width="17.0" height="28.70" fill="#00963c"/>
<rect x="1145.0" y="415.30" width="17.0" height="28.70" fill="#008a62"/>
<rect x="1145.0" y="444.00" width="17.0" height="28.70" fill="#007f7f"/>
<rect x="1145.0" y="472.70" width="17.0" height="28.70" fill="#006f96"/>
<rect x="1145.0" y="501.40" width="17.0" height="28.70" fill="#0057ae"/>
<rect x="1145.0" y="530.10" width="17.0" height="28.70" fill="#003cb4"/>
<rect x="1145.0" y="558.80" width="17.0" height="28.70" fill="#0028b4"/>
<rect x="1145.0" y="587.50" width="17.0" height="28.70" fill="#0a0aaa"/>
<rect x="1145.0" y="616.20" width="17.0" height="28.70" fill="#0000c8"/>
<rect x="1145.0" y="644.90" width="17.0" height="28.70" fill="#1400aa"/>
<rect x="1145.0" y="673.60" width="17.0" height="28.70" fill="#3228aa"/>
<rect x="1145.0" y="702.30" width="17.0" height="28.70" fill="#5550aa"/>
<rect x="1145.0" y="731.00" width="17.0" height="28.70" fill="#6e69aa"/>
<rect x="1145.0" y="759.70" width="17.0" height="28.70" fill="#917daa"/>
<rect x="1145.0" y="788.40" width="17.0" height="28.70" fill="#a5a0af"/>
<rect x="1145.0" y="817.10" width="17.0" height="28.70" fill="#b4b4b4"/>
<rect x="1145.0" y="845.80" width="17.0" height="28.70" fill="#d7d7d7"/>
<rect x="1145.0" y="874.50" width="17.0" height="28.70" fill="#ffffff"/>
<path d="M1145.0,128.30 H1162.0 M1145.0,157.00 H1162.0 M1145.0,185.70 H1162.0 M1145.0,214.40 H1162.0 M1145.0,243.10 H1162.0 M1145.0,271.80 H1162.0 M1145.0,300.50 H1162.0 M1145.0,329.20 H1162.0 M1145.0,357.90 H1162.0 M1145.0,386.60 H1162.0 M1145.0,415.30 H1162.0 M1145.0,444.00 H1162.0 M1145.0,472.70 H1162.0 M1145.0,501.40 H1162.0 M1145.0,530.10 H1162.0 M1145.0,558.80 H1162.0 M1145.0,587.50 H1162.0 M1145.0,616.20 H1162.0 M1145.0,644.90 H1162.0 M1145.0,673.60 H1162.0 M1145.0,702.30 H1162.0 M1145.0,731.00 H1162.0 M1145.0,759.70 H1162.0 M1145.0,788.40 H1162.0 M1145.0,817.10 H1162.0 M1145.0,845.80 H1162.0 M1145.0,874.50 H1162.0" stroke="#e6e6e6" stroke-opacity="0.6" stroke-width="1.1"/>
<text class="cb" x="1165.8" y="133.2">30</text>
<text class="cb" x="1165.8" y="161.9">29</text>
<text class="cb" x="1165.8" y="190.6">28</text>
<text class="cb" x="1165.8" y="219.3">27</text>
<text class="cb" x="1165.8" y="248.0">26</text>
<text class="cb" x="1165.8" y="276.7">25</text>
<text class="cb" x="1165.8" y="305.4">24</text>
<text class="cb" x="1165.8" y="334.1">23</text>
<text class="cb" x="1165.8" y="362.8">22</text>
<text class="cb" x="1165.8" y="391.5">21</text>
<text class="cb" x="1165.8" y="420.2">20</text>
<text class="cb" x="1165.8" y="448.9">19</text>
<text class="cb" x="1165.8" y="477.6">18</text>
<text class="cb" x="1165.8" y="506.3">17</text>
<text class="cb" x="1165.8" y="535.0">16</text>
<text class="cb" x="1165.8" y="563.7">15</text>
<text class="cb" x="1165.8" y="592.4">14</text>
<text class="cb" x="1165.8" y="621.1">13</text>
<text class="cb" x="1165.8" y="649.8">12</text>
<text class="cb" x="1165.8" y="678.5">11</text>
<text class="cb" x="1165.8" y="707.2">10</text>
<text class="cb" x="1165.8" y="735.9">9</text>
<text class="cb" x="1165.8" y="764.6">8</text>
<text class="cb" x="1165.8" y="793.3">7</text>
<text class="cb" x="1165.8" y="822.0">6</text>
<text class="cb" x="1165.8" y="850.7">5</text>
<text class="cb" x="1165.8" y="879.4">4</text>
<rect x="916" y="877.4" width="208.6" height="20.4" fill="#fff" stroke="#c4c4c4" stroke-width="1.2"/>
<text font-size="15.8" fill="#555"><tspan x="930.3" y="894" fill="#1e9bff" textLength="23" lengthAdjust="spacingAndGlyphs">Sis</tspan><tspan x="952.6" y="894" font-size="19" fill="#2a2aff" textLength="18" lengthAdjust="spacingAndGlyphs">π</tspan> <tspan x="973.5" y="894" textLength="10" lengthAdjust="spacingAndGlyphs">-</tspan> <tspan x="991.8" y="894" textLength="127.6" lengthAdjust="spacingAndGlyphs">ONAMET/REP.DOM.</tspan></text>
</svg></body></html>
